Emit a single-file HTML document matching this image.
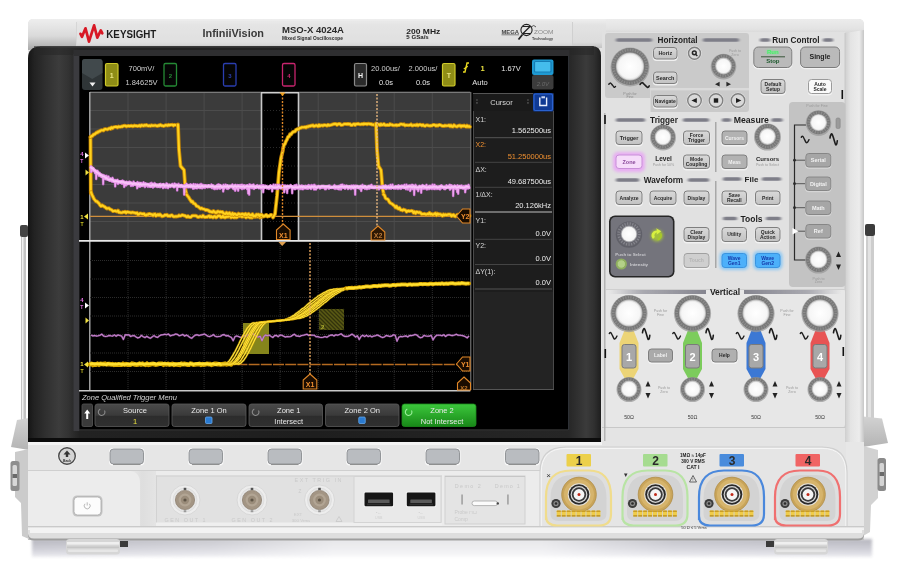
<!DOCTYPE html>
<html><head><meta charset="utf-8"><title>Keysight InfiniiVision MSO-X 4024A</title>
<style>
html,body{margin:0;padding:0;background:#fff;}
body{width:900px;height:574px;overflow:hidden;font-family:"Liberation Sans",sans-serif;}
svg{display:block;filter:blur(0.55px);}
svg text{font-family:"Liberation Sans",sans-serif;}
</style></head><body>
<svg width="900" height="574" viewBox="0 0 900 574">
<defs>
<linearGradient id="gBezelH" x1="0" x2="1" y1="0" y2="0">
 <stop offset="0" stop-color="#151515"/>
 <stop offset="0.0105" stop-color="#222222"/>
 <stop offset="0.03" stop-color="#2f2f2f"/>
 <stop offset="0.054" stop-color="#3c3c3c"/>
 <stop offset="0.07" stop-color="#333333"/>
 <stop offset="0.079" stop-color="#2b2b2b"/>
 <stop offset="0.09" stop-color="#222222"/>
 <stop offset="0.5" stop-color="#1e1e1e"/>
 <stop offset="0.943" stop-color="#262626"/>
 <stop offset="0.96" stop-color="#313131"/>
 <stop offset="0.974" stop-color="#3b3b3b"/>
 <stop offset="0.988" stop-color="#303030"/>
 <stop offset="1" stop-color="#1e1e1e"/>
</linearGradient>
<linearGradient id="gTop" x1="0" x2="0" y1="0" y2="1">
 <stop offset="0" stop-color="#efefef"/>
 <stop offset="0.2" stop-color="#e3e3e3"/>
 <stop offset="0.8" stop-color="#dcdcdc"/>
 <stop offset="1" stop-color="#c2c2c2"/>
</linearGradient>
<linearGradient id="gTopR" x1="0" x2="0" y1="0" y2="1">
 <stop offset="0" stop-color="#ececec"/>
 <stop offset="0.7" stop-color="#e3e3e3"/>
 <stop offset="1" stop-color="#d8d8d8"/>
</linearGradient>
<linearGradient id="gSideR" x1="0" x2="1" y1="0" y2="0">
 <stop offset="0" stop-color="#cfcfcf"/>
 <stop offset="0.3" stop-color="#e4e4e4"/>
 <stop offset="0.75" stop-color="#ececec"/>
 <stop offset="1" stop-color="#c6c6c6"/>
</linearGradient>
<linearGradient id="gBtn" x1="0" x2="0" y1="0" y2="1">
 <stop offset="0" stop-color="#d9d9d9"/>
 <stop offset="1" stop-color="#c2c2c2"/>
</linearGradient>
<linearGradient id="gSoft" x1="0" x2="0" y1="0" y2="1">
 <stop offset="0" stop-color="#4a4a4a"/>
 <stop offset="0.5" stop-color="#3a3a3a"/>
 <stop offset="0.55" stop-color="#2c2c2c"/>
 <stop offset="1" stop-color="#303030"/>
</linearGradient>
<linearGradient id="gSoftG" x1="0" x2="0" y1="0" y2="1">
 <stop offset="0" stop-color="#3cc83c"/>
 <stop offset="0.5" stop-color="#2aa82a"/>
 <stop offset="1" stop-color="#188818"/>
</linearGradient>
<radialGradient id="gKnob" cx="0.5" cy="0.5" r="0.5">
 <stop offset="0" stop-color="#ffffff"/>
 <stop offset="0.85" stop-color="#f6f6f6"/>
 <stop offset="1" stop-color="#e0e0e0"/>
</radialGradient>
<linearGradient id="gShadow" x1="0" x2="0" y1="0" y2="1">
 <stop offset="0" stop-color="#b4b4bc"/>
 <stop offset="0.6" stop-color="#d0d0d8"/>
 <stop offset="1" stop-color="#ececf0"/>
</linearGradient>
<linearGradient id="gBottomRail" x1="0" x2="0" y1="0" y2="1">
 <stop offset="0" stop-color="#d0d0d0"/>
 <stop offset="0.2" stop-color="#f4f4f4"/>
 <stop offset="0.7" stop-color="#ececec"/>
 <stop offset="1" stop-color="#bcbcbc"/>
</linearGradient>
<radialGradient id="gGold" cx="0.5" cy="0.5" r="0.5">
 <stop offset="0.55" stop-color="#c8a050"/>
 <stop offset="0.8" stop-color="#d8b468"/>
 <stop offset="1" stop-color="#c09848"/>
</radialGradient>
<filter id="blur1" x="-20%" y="-20%" width="140%" height="140%"><feGaussianBlur stdDeviation="0.6"/></filter>
<filter id="blur1b" x="-20%" y="-80%" width="140%" height="260%"><feGaussianBlur stdDeviation="1.6 0.7"/></filter>
<filter id="blur2" x="-30%" y="-30%" width="160%" height="160%"><feGaussianBlur stdDeviation="1.5"/></filter>
<filter id="blur3" x="-30%" y="-30%" width="160%" height="160%"><feGaussianBlur stdDeviation="3"/></filter>
</defs>
<linearGradient id="gBrk" x1="0" x2="0" y1="0" y2="1"><stop offset="0" stop-color="#d2d2d2"/><stop offset="1" stop-color="#b4b4b4"/></linearGradient>
<rect x="0" y="0" width="900" height="574" rx="0" fill="#ffffff" />
<linearGradient id="gShM" x1="0" x2="1"><stop offset="0" stop-color="#fff"/><stop offset="0.22" stop-color="#bbb"/><stop offset="0.36" stop-color="#555"/><stop offset="0.6" stop-color="#555"/><stop offset="0.75" stop-color="#ccc"/><stop offset="1" stop-color="#fff"/></linearGradient>
<mask id="mSh" maskUnits="userSpaceOnUse" x="20" y="530" width="870" height="44"><rect x="20" y="530" width="870" height="44" fill="url(#gShM)"/></mask>
<g mask="url(#mSh)">
<rect x="32" y="539" width="840" height="18" rx="0" fill="url(#gShadow)" filter="url(#blur2)"/>
</g>
<rect x="20" y="225" width="8" height="12" rx="2" fill="#444" />
<rect x="21" y="237" width="5" height="205" rx="0" fill="#c4c4c4" />
<rect x="22" y="237" width="1.5" height="205" rx="0" fill="#f0f0f0" />
<path d="M29 418 L17 420 L11 447 L29 450 Z" fill="url(#gBrk)" />
<path d="M29 449 L15 452 L15 497 L21 503 L22 536 L29 539 Z" fill="#cbcbcb" />
<rect x="10.5" y="461" width="9" height="30" rx="2.5" fill="#8e8e8e" />
<rect x="12.5" y="465" width="4.5" height="21" rx="1.5" fill="#d8d8d8" />
<rect x="12.5" y="474" width="4.5" height="4" rx="0" fill="#6a6a6a" />
<rect x="865" y="224" width="10" height="12" rx="2" fill="#3c3c3c" />
<rect x="866" y="236" width="8" height="206" rx="0" fill="#cdcdcd" />
<rect x="868" y="236" width="3" height="206" rx="0" fill="#e2e2e2" />
<path d="M863 416.5 L882 418.5 L888 443 L863 447 Z" fill="url(#gBrk)" />
<path d="M863 446 L878 450 L878 498 L871 505 L870 532 L863 536 Z" fill="#d2d2d2" />
<rect x="877.5" y="458" width="8.5" height="33" rx="2.5" fill="#8a8a8a" />
<rect x="879.5" y="463" width="4.5" height="23" rx="1.5" fill="#d4d4d4" />
<rect x="879.5" y="472" width="4.5" height="4" rx="0" fill="#6a6a6a" />
<rect x="28" y="19" width="836" height="521" rx="5" fill="#e4e4e4" />
<path d="M28 48 L28 25 Q28 19 34 19 L606 19 L606 48 Z" fill="url(#gTop)" />
<path d="M606 19 L858 19 Q864 19 864 25 L864 33 L606 33 Z" fill="url(#gTopR)" />
<rect x="602" y="32" width="243" height="410" rx="0" fill="#e1e1e1" />
<path d="M845 33 L864 30 L864 442 L845 442 Z" fill="url(#gSideR)" />
<line x1="845" y1="33" x2="845" y2="428" stroke="#c8c8c8" stroke-width="1" />
<linearGradient id="gTL" x1="0" x2="0" y1="0" y2="1"><stop offset="0" stop-color="#eeeeee"/><stop offset="0.55" stop-color="#dadada"/><stop offset="1" stop-color="#a8a8a8"/></linearGradient>
<path d="M28 50 L28 25 Q28 19 34 19 L76 19 L76 47 L28 50 Z" fill="url(#gTL)" />
<path d="M28 442 L28 58 Q28 47 40 46.5 L592 46 Q601 46 601 56 L601 442 Z" fill="url(#gBezelH)" />
<rect x="34" y="46" width="560" height="9" rx="0" fill="#262626" opacity="0.55"/>
<rect x="40" y="46" width="552" height="2" rx="0" fill="#3a3a3a" opacity="0.6"/>
<rect x="28" y="438" width="573" height="4" rx="0" fill="#0c0c0c" />
<rect x="73.5" y="54" width="6" height="377" rx="0" fill="#3b3b3f" />
<rect x="73.5" y="50" width="496" height="6" rx="0" fill="#2e2e30" />
<rect x="79.5" y="56" width="489" height="373.5" rx="0" fill="#000000" />
<line x1="568.7" y1="56" x2="568.7" y2="430" stroke="#34383e" stroke-width="1" />
<line x1="79" y1="430" x2="568" y2="430" stroke="#2c2c2c" stroke-width="1.4" />
<rect x="28" y="442" width="574" height="28" rx="0" fill="#e6e6e6" />
<rect x="28" y="442" width="574" height="3" rx="0" fill="#f4f4f4" />
<line x1="28" y1="470.5" x2="540" y2="470.5" stroke="#cfcfcf" stroke-width="1" />
<rect x="28" y="471" width="514" height="55" rx="0" fill="#ececec" />
<rect x="846" y="442" width="18" height="86" rx="0" fill="#e7e7e7" />
<rect x="28" y="526" width="836" height="14" rx="0" fill="url(#gBottomRail)" />
<line x1="28" y1="526.5" x2="864" y2="526.5" stroke="#cacaca" stroke-width="1" />
<path d="M28 534 L28 535 Q28 540.5 34 540.5 L858 540.5 Q864 540.5 864 535 L864 534 Z" fill="#9e9e9e" />
<path d="M28 530 L28 533 Q28 538.5 34 538.5 L858 538.5 Q864 538.5 864 533 L864 530 Z" fill="#dedede" />
<rect x="30" y="528" width="832" height="5" rx="0" fill="#f3f3f3" />
<path d="M76 21.5 L572 21.5 L572 45.5 L76 45.5 Z" fill="#e9e9e9" opacity="0.35"/>
<line x1="572.5" y1="22" x2="572.5" y2="45" stroke="#d0d0d0" stroke-width="1" />
<line x1="76.5" y1="22" x2="76.5" y2="45" stroke="#d6d6d6" stroke-width="1" />
<path d="M80.5 33.8 L82 36.8 L85.5 28.3 L89 41.6 L94.1 25.4 L97.3 37.6 L100.8 30.4 L102.3 33.4" fill="none" stroke="#d81824" stroke-width="2.7" stroke-linejoin="round" stroke-linecap="round"/>
<text x="106.3" y="37.6" font-size="11.6" fill="#1c1c1c" text-anchor="start" font-weight="bold" font-style="normal" textLength="50" lengthAdjust="spacingAndGlyphs">KEYSIGHT</text>
<text x="202.5" y="36.8" font-size="10" fill="#3a3a3a" text-anchor="start" font-weight="bold" font-style="normal" textLength="61.5" lengthAdjust="spacingAndGlyphs">InfiniiVision</text>
<text x="282" y="33" font-size="9.2" fill="#2a2a2a" text-anchor="start" font-weight="bold" font-style="normal" textLength="62" lengthAdjust="spacingAndGlyphs">MSO-X 4024A</text>
<text x="282" y="40.2" font-size="4.8" fill="#2a2a2a" text-anchor="start" font-weight="bold" font-style="normal" textLength="61" lengthAdjust="spacingAndGlyphs">Mixed Signal Oscilloscope</text>
<text x="406.3" y="33.6" font-size="8" fill="#222" text-anchor="start" font-weight="bold" font-style="normal" textLength="34" lengthAdjust="spacingAndGlyphs">200 MHz</text>
<text x="406.3" y="39.2" font-size="5" fill="#222" text-anchor="start" font-weight="bold" font-style="normal" textLength="22.5" lengthAdjust="spacingAndGlyphs">5 GSa/s</text>
<text x="501.5" y="33.5" font-size="5.6" fill="#444" text-anchor="start" font-weight="bold" font-style="normal" textLength="17.5" lengthAdjust="spacingAndGlyphs">MEGA</text>
<line x1="501.5" y1="34.8" x2="519" y2="34.8" stroke="#555" stroke-width="0.7" />
<circle cx="526.5" cy="30" r="5.6" fill="none" stroke="#222" stroke-width="1.1" />
<path d="M522.5 26.5 L530 26.5 L523 33.5 L530.5 33.5" fill="none" stroke="#222" stroke-width="1.2" />
<line x1="522.5" y1="34.5" x2="518.5" y2="39.5" stroke="#222" stroke-width="1.8" />
<path d="M531 27 q3 -3 5 0" fill="none" stroke="#333" stroke-width="0.8" />
<text x="534" y="33.5" font-size="5.6" fill="#8a8a8a" text-anchor="start" font-weight="normal" font-style="normal" textLength="19.5" lengthAdjust="spacingAndGlyphs">ZOOM</text>
<text x="532" y="39.8" font-size="3.8" fill="#444" text-anchor="start" font-weight="bold" font-style="normal" textLength="21" lengthAdjust="spacingAndGlyphs">Technology</text>
<rect x="66" y="539" width="54" height="15.5" rx="3.5" fill="#d6d6d6" />
<rect x="67" y="542" width="52" height="2.6" rx="0" fill="#efefef" />
<rect x="67" y="546.5" width="52" height="1.6" rx="0" fill="#c6c6c6" />
<rect x="68" y="549.5" width="50" height="2.4" rx="1" fill="#e6e6e6" />
<rect x="120" y="541" width="8" height="6" rx="0" fill="#3a3a3a" />
<rect x="774" y="539" width="54" height="15.5" rx="3.5" fill="#d6d6d6" />
<rect x="775" y="542" width="52" height="2.6" rx="0" fill="#efefef" />
<rect x="775" y="546.5" width="52" height="1.6" rx="0" fill="#c6c6c6" />
<rect x="776" y="549.5" width="50" height="2.4" rx="1" fill="#e6e6e6" />
<rect x="766" y="541" width="8" height="6" rx="0" fill="#3a3a3a" />
<rect x="90" y="92" width="380.3" height="148" rx="0" fill="#3b3b3b" />
<line x1="128.0" y1="92" x2="128.0" y2="240" stroke="#4c4c4c" stroke-width="1" />
<line x1="166.1" y1="92" x2="166.1" y2="240" stroke="#4c4c4c" stroke-width="1" />
<line x1="204.1" y1="92" x2="204.1" y2="240" stroke="#4c4c4c" stroke-width="1" />
<line x1="242.1" y1="92" x2="242.1" y2="240" stroke="#4c4c4c" stroke-width="1" />
<line x1="280.1" y1="92" x2="280.1" y2="240" stroke="#4c4c4c" stroke-width="1" />
<line x1="318.2" y1="92" x2="318.2" y2="240" stroke="#4c4c4c" stroke-width="1" />
<line x1="356.2" y1="92" x2="356.2" y2="240" stroke="#4c4c4c" stroke-width="1" />
<line x1="394.2" y1="92" x2="394.2" y2="240" stroke="#4c4c4c" stroke-width="1" />
<line x1="432.3" y1="92" x2="432.3" y2="240" stroke="#4c4c4c" stroke-width="1" />
<line x1="90" y1="92.0" x2="470.3" y2="92.0" stroke="#4c4c4c" stroke-width="1" />
<line x1="90" y1="110.5" x2="470.3" y2="110.5" stroke="#4c4c4c" stroke-width="1" />
<line x1="90" y1="129.0" x2="470.3" y2="129.0" stroke="#4c4c4c" stroke-width="1" />
<line x1="90" y1="147.5" x2="470.3" y2="147.5" stroke="#4c4c4c" stroke-width="1" />
<line x1="90" y1="166.0" x2="470.3" y2="166.0" stroke="#4c4c4c" stroke-width="1" />
<line x1="90" y1="184.5" x2="470.3" y2="184.5" stroke="#4c4c4c" stroke-width="1" />
<line x1="90" y1="203.0" x2="470.3" y2="203.0" stroke="#4c4c4c" stroke-width="1" />
<line x1="90" y1="221.5" x2="470.3" y2="221.5" stroke="#4c4c4c" stroke-width="1" />
<line x1="90" y1="240.0" x2="470.3" y2="240.0" stroke="#4c4c4c" stroke-width="1" />
<rect x="261" y="92" width="38" height="148" rx="0" fill="#000" />
<line x1="261" y1="110.5" x2="299" y2="110.5" stroke="#2a2a2a" stroke-width="1" stroke-dasharray="1 2"/>
<line x1="261" y1="129.0" x2="299" y2="129.0" stroke="#2a2a2a" stroke-width="1" stroke-dasharray="1 2"/>
<line x1="261" y1="147.5" x2="299" y2="147.5" stroke="#2a2a2a" stroke-width="1" stroke-dasharray="1 2"/>
<line x1="261" y1="166.0" x2="299" y2="166.0" stroke="#2a2a2a" stroke-width="1" stroke-dasharray="1 2"/>
<line x1="261" y1="184.5" x2="299" y2="184.5" stroke="#2a2a2a" stroke-width="1" stroke-dasharray="1 2"/>
<line x1="261" y1="203.0" x2="299" y2="203.0" stroke="#2a2a2a" stroke-width="1" stroke-dasharray="1 2"/>
<line x1="261" y1="221.5" x2="299" y2="221.5" stroke="#2a2a2a" stroke-width="1" stroke-dasharray="1 2"/>
<line x1="261.5" y1="92" x2="261.5" y2="240" stroke="#c8c8c8" stroke-width="1.6" />
<line x1="298.5" y1="92" x2="298.5" y2="240" stroke="#c8c8c8" stroke-width="1.6" />
<line x1="90" y1="92.5" x2="470.3" y2="92.5" stroke="#7a7a7a" stroke-width="1" />
<line x1="261" y1="92.7" x2="299" y2="92.7" stroke="#d0d0d0" stroke-width="1.4" />
<line x1="89.8" y1="92" x2="89.8" y2="390" stroke="#b8b8b8" stroke-width="1.3" />
<line x1="79" y1="240.8" x2="470.3" y2="240.8" stroke="#e8e8e8" stroke-width="1.8" />
<line x1="128.0" y1="242" x2="128.0" y2="390" stroke="#2c2c2c" stroke-width="1" stroke-dasharray="1 1"/>
<line x1="166.1" y1="242" x2="166.1" y2="390" stroke="#2c2c2c" stroke-width="1" stroke-dasharray="1 1"/>
<line x1="204.1" y1="242" x2="204.1" y2="390" stroke="#2c2c2c" stroke-width="1" stroke-dasharray="1 1"/>
<line x1="242.1" y1="242" x2="242.1" y2="390" stroke="#2c2c2c" stroke-width="1" stroke-dasharray="1 1"/>
<line x1="280.1" y1="242" x2="280.1" y2="390" stroke="#2c2c2c" stroke-width="1" stroke-dasharray="1 1"/>
<line x1="318.2" y1="242" x2="318.2" y2="390" stroke="#2c2c2c" stroke-width="1" stroke-dasharray="1 1"/>
<line x1="356.2" y1="242" x2="356.2" y2="390" stroke="#2c2c2c" stroke-width="1" stroke-dasharray="1 1"/>
<line x1="394.2" y1="242" x2="394.2" y2="390" stroke="#2c2c2c" stroke-width="1" stroke-dasharray="1 1"/>
<line x1="432.3" y1="242" x2="432.3" y2="390" stroke="#2c2c2c" stroke-width="1" stroke-dasharray="1 1"/>
<line x1="90" y1="260.5" x2="470.3" y2="260.5" stroke="#2c2c2c" stroke-width="1" stroke-dasharray="1 1"/>
<line x1="90" y1="279.0" x2="470.3" y2="279.0" stroke="#2c2c2c" stroke-width="1" stroke-dasharray="1 1"/>
<line x1="90" y1="297.5" x2="470.3" y2="297.5" stroke="#2c2c2c" stroke-width="1" stroke-dasharray="1 1"/>
<line x1="90" y1="316.0" x2="470.3" y2="316.0" stroke="#2c2c2c" stroke-width="1" stroke-dasharray="1 1"/>
<line x1="90" y1="334.5" x2="470.3" y2="334.5" stroke="#2c2c2c" stroke-width="1" stroke-dasharray="1 1"/>
<line x1="90" y1="353.0" x2="470.3" y2="353.0" stroke="#2c2c2c" stroke-width="1" stroke-dasharray="1 1"/>
<line x1="90" y1="371.5" x2="470.3" y2="371.5" stroke="#2c2c2c" stroke-width="1" stroke-dasharray="1 1"/>
<line x1="79" y1="390.8" x2="470.3" y2="390.8" stroke="#c8c8c8" stroke-width="1.4" />
<line x1="470.8" y1="92" x2="470.8" y2="390" stroke="#888" stroke-width="1" />
<line x1="90" y1="216.3" x2="460" y2="216.3" stroke="#cf8e3c" stroke-width="1.3" />
<path d="M90.5 137.0 L90.8 193.0" fill="none" stroke="#d08c00" stroke-width="3.8" stroke-linejoin="round" stroke-linecap="round" opacity="0.9"/>
<path d="M90.5 137.0 L90.8 193.0" fill="none" stroke="#ffd21e" stroke-width="2.1" stroke-linejoin="round" stroke-linecap="round"/>
<path d="M90.5 137.1 L91.5 136.0 L92.5 136.0 L93.5 134.4 L94.5 134.4 L95.5 133.6 L96.5 132.5 L97.5 132.6 L98.5 131.5 L99.5 131.5 L100.5 130.6 L101.5 130.2 L102.5 130.3 L103.5 130.5 L104.5 129.2 L105.5 129.0 L106.5 129.3 L107.5 129.5 L108.5 128.7 L109.5 128.3 L110.5 128.9 L111.5 127.4 L112.5 128.3 L113.5 127.3 L114.5 127.0 L115.5 126.8 L116.5 126.9 L117.5 127.5 L118.5 126.5 L119.5 126.9 L120.5 126.9 L121.5 126.4 L122.5 126.6 L123.5 125.8 L124.5 125.7 L125.5 125.9 L126.5 126.5 L127.5 126.1 L128.5 125.8 L129.5 126.2 L130.5 125.9 L131.5 125.7 L132.5 126.3 L133.5 126.1 L134.5 125.5 L135.5 125.9 L136.5 125.8 L137.5 126.2 L138.5 126.0 L139.5 125.4 L140.5 126.3 L141.5 125.1 L142.5 125.5 L143.5 125.9 L144.5 125.1 L145.5 125.5 L146.5 124.9 L147.5 125.7 L148.5 125.9 L149.5 125.6 L150.5 126.0 L151.5 125.2 L152.5 125.7 L153.5 125.6 L154.5 125.5 L155.5 125.4 L156.5 125.9 L157.5 126.0 L158.5 125.4 L159.5 125.6 L160.5 124.8 L161.5 125.7 L162.5 125.6 L163.5 126.1 L164.5 125.8 L165.5 125.1 L166.5 125.2 L167.5 125.6 L168.5 124.7 L169.5 125.3 L170.5 124.9 L171.5 124.8 L172.5 124.7 L173.5 125.7 L174.5 124.8 L175.5 125.0 L176.5 125.2 L177.5 125.8" fill="none" stroke="#d08c00" stroke-width="3.8" stroke-linejoin="round" stroke-linecap="round" opacity="0.9"/>
<path d="M90.5 137.1 L91.5 136.0 L92.5 136.0 L93.5 134.4 L94.5 134.4 L95.5 133.6 L96.5 132.5 L97.5 132.6 L98.5 131.5 L99.5 131.5 L100.5 130.6 L101.5 130.2 L102.5 130.3 L103.5 130.5 L104.5 129.2 L105.5 129.0 L106.5 129.3 L107.5 129.5 L108.5 128.7 L109.5 128.3 L110.5 128.9 L111.5 127.4 L112.5 128.3 L113.5 127.3 L114.5 127.0 L115.5 126.8 L116.5 126.9 L117.5 127.5 L118.5 126.5 L119.5 126.9 L120.5 126.9 L121.5 126.4 L122.5 126.6 L123.5 125.8 L124.5 125.7 L125.5 125.9 L126.5 126.5 L127.5 126.1 L128.5 125.8 L129.5 126.2 L130.5 125.9 L131.5 125.7 L132.5 126.3 L133.5 126.1 L134.5 125.5 L135.5 125.9 L136.5 125.8 L137.5 126.2 L138.5 126.0 L139.5 125.4 L140.5 126.3 L141.5 125.1 L142.5 125.5 L143.5 125.9 L144.5 125.1 L145.5 125.5 L146.5 124.9 L147.5 125.7 L148.5 125.9 L149.5 125.6 L150.5 126.0 L151.5 125.2 L152.5 125.7 L153.5 125.6 L154.5 125.5 L155.5 125.4 L156.5 125.9 L157.5 126.0 L158.5 125.4 L159.5 125.6 L160.5 124.8 L161.5 125.7 L162.5 125.6 L163.5 126.1 L164.5 125.8 L165.5 125.1 L166.5 125.2 L167.5 125.6 L168.5 124.7 L169.5 125.3 L170.5 124.9 L171.5 124.8 L172.5 124.7 L173.5 125.7 L174.5 124.8 L175.5 125.0 L176.5 125.2 L177.5 125.8" fill="none" stroke="#ffd21e" stroke-width="2.1" stroke-linejoin="round" stroke-linecap="round"/>
<path d="M178.0 124.5 L179.0 150.0 L180.5 166.0 L184.0 170.0 L185.5 190.0 L186.5 194.0" fill="none" stroke="#d08c00" stroke-width="3.8" stroke-linejoin="round" stroke-linecap="round" opacity="0.9"/>
<path d="M178.0 124.5 L179.0 150.0 L180.5 166.0 L184.0 170.0 L185.5 190.0 L186.5 194.0" fill="none" stroke="#ffd21e" stroke-width="2.1" stroke-linejoin="round" stroke-linecap="round"/>
<path d="M91.0 192.2 L92.0 194.8 L93.0 196.7 L94.0 198.9 L95.0 200.1 L96.0 201.4 L97.0 201.3 L98.0 202.6 L99.0 203.4 L100.0 205.2 L101.0 206.1 L102.0 205.2 L103.0 205.8 L104.0 206.5 L105.0 207.0 L106.0 208.0 L107.0 208.6 L108.0 208.3 L109.0 208.2 L110.0 209.3 L111.0 209.5 L112.0 210.2 L113.0 211.2 L114.0 211.0 L115.0 210.8 L116.0 211.3 L117.0 211.6 L118.0 210.5 L119.0 212.4 L120.0 212.3 L121.0 212.7 L122.0 212.7 L123.0 212.0 L124.0 212.2 L125.0 211.7 L126.0 212.9 L127.0 211.9 L128.0 212.0 L129.0 212.4 L130.0 212.4 L131.0 212.9 L132.0 212.4 L133.0 212.4 L134.0 212.8 L135.0 212.8 L136.0 213.4 L137.0 212.8 L138.0 214.6 L139.0 214.2 L140.0 213.3 L141.0 213.6 L142.0 213.9 L143.0 214.0 L144.0 213.6 L145.0 215.1 L146.0 215.4 L147.0 214.5 L148.0 214.6 L149.0 213.8 L150.0 213.9 L151.0 214.4 L152.0 214.3 L153.0 215.5 L154.0 214.2 L155.0 214.0 L156.0 215.9 L157.0 215.1 L158.0 214.4 L159.0 215.3 L160.0 214.3 L161.0 215.3 L162.0 216.3 L163.0 216.1 L164.0 215.8 L165.0 214.9 L166.0 215.2 L167.0 214.8 L168.0 216.1 L169.0 215.6 L170.0 216.2 L171.0 215.3 L172.0 215.1 L173.0 216.3 L174.0 216.7 L175.0 216.5 L176.0 216.4 L177.0 216.5 L178.0 216.3 L179.0 215.3 L180.0 216.0 L181.0 215.7 L182.0 215.0 L183.0 215.1 L184.0 215.6 L185.0 215.6 L186.0 216.5 L187.0 217.0 L188.0 216.0 L189.0 217.0 L190.0 217.1 L191.0 217.1 L192.0 215.9 L193.0 215.7 L194.0 215.7 L195.0 215.7 L196.0 215.7 L197.0 216.5 L198.0 217.1 L199.0 217.0 L200.0 216.3 L201.0 216.7 L202.0 217.0 L203.0 215.6 L204.0 216.7 L205.0 217.2 L206.0 217.0 L207.0 217.0 L208.0 216.4 L209.0 215.8 L210.0 217.1 L211.0 216.2 L212.0 217.1 L213.0 217.5 L214.0 216.3 L215.0 216.4 L216.0 217.5 L217.0 217.0 L218.0 215.9 L219.0 215.8 L220.0 215.9 L221.0 217.4 L222.0 217.2 L223.0 215.9 L224.0 217.3 L225.0 217.6 L226.0 217.0 L227.0 216.4 L228.0 216.8 L229.0 215.9 L230.0 215.7 L231.0 217.6 L232.0 217.0 L233.0 216.8 L234.0 217.6 L235.0 216.6 L236.0 217.5 L237.0 217.4 L238.0 216.2 L239.0 216.3 L240.0 216.3 L241.0 216.2 L242.0 216.9 L243.0 216.3 L244.0 216.6 L245.0 216.0 L246.0 217.6 L247.0 216.5 L248.0 216.7 L249.0 217.0 L250.0 217.6 L251.0 216.7 L252.0 217.7 L253.0 216.8 L254.0 216.9 L255.0 216.9 L256.0 215.9 L257.0 216.7 L258.0 216.2 L259.0 215.9 L260.0 217.5 L261.0 216.2 L262.0 216.8" fill="none" stroke="#d08c00" stroke-width="3.8" stroke-linejoin="round" stroke-linecap="round" opacity="0.9"/>
<path d="M91.0 192.2 L92.0 194.8 L93.0 196.7 L94.0 198.9 L95.0 200.1 L96.0 201.4 L97.0 201.3 L98.0 202.6 L99.0 203.4 L100.0 205.2 L101.0 206.1 L102.0 205.2 L103.0 205.8 L104.0 206.5 L105.0 207.0 L106.0 208.0 L107.0 208.6 L108.0 208.3 L109.0 208.2 L110.0 209.3 L111.0 209.5 L112.0 210.2 L113.0 211.2 L114.0 211.0 L115.0 210.8 L116.0 211.3 L117.0 211.6 L118.0 210.5 L119.0 212.4 L120.0 212.3 L121.0 212.7 L122.0 212.7 L123.0 212.0 L124.0 212.2 L125.0 211.7 L126.0 212.9 L127.0 211.9 L128.0 212.0 L129.0 212.4 L130.0 212.4 L131.0 212.9 L132.0 212.4 L133.0 212.4 L134.0 212.8 L135.0 212.8 L136.0 213.4 L137.0 212.8 L138.0 214.6 L139.0 214.2 L140.0 213.3 L141.0 213.6 L142.0 213.9 L143.0 214.0 L144.0 213.6 L145.0 215.1 L146.0 215.4 L147.0 214.5 L148.0 214.6 L149.0 213.8 L150.0 213.9 L151.0 214.4 L152.0 214.3 L153.0 215.5 L154.0 214.2 L155.0 214.0 L156.0 215.9 L157.0 215.1 L158.0 214.4 L159.0 215.3 L160.0 214.3 L161.0 215.3 L162.0 216.3 L163.0 216.1 L164.0 215.8 L165.0 214.9 L166.0 215.2 L167.0 214.8 L168.0 216.1 L169.0 215.6 L170.0 216.2 L171.0 215.3 L172.0 215.1 L173.0 216.3 L174.0 216.7 L175.0 216.5 L176.0 216.4 L177.0 216.5 L178.0 216.3 L179.0 215.3 L180.0 216.0 L181.0 215.7 L182.0 215.0 L183.0 215.1 L184.0 215.6 L185.0 215.6 L186.0 216.5 L187.0 217.0 L188.0 216.0 L189.0 217.0 L190.0 217.1 L191.0 217.1 L192.0 215.9 L193.0 215.7 L194.0 215.7 L195.0 215.7 L196.0 215.7 L197.0 216.5 L198.0 217.1 L199.0 217.0 L200.0 216.3 L201.0 216.7 L202.0 217.0 L203.0 215.6 L204.0 216.7 L205.0 217.2 L206.0 217.0 L207.0 217.0 L208.0 216.4 L209.0 215.8 L210.0 217.1 L211.0 216.2 L212.0 217.1 L213.0 217.5 L214.0 216.3 L215.0 216.4 L216.0 217.5 L217.0 217.0 L218.0 215.9 L219.0 215.8 L220.0 215.9 L221.0 217.4 L222.0 217.2 L223.0 215.9 L224.0 217.3 L225.0 217.6 L226.0 217.0 L227.0 216.4 L228.0 216.8 L229.0 215.9 L230.0 215.7 L231.0 217.6 L232.0 217.0 L233.0 216.8 L234.0 217.6 L235.0 216.6 L236.0 217.5 L237.0 217.4 L238.0 216.2 L239.0 216.3 L240.0 216.3 L241.0 216.2 L242.0 216.9 L243.0 216.3 L244.0 216.6 L245.0 216.0 L246.0 217.6 L247.0 216.5 L248.0 216.7 L249.0 217.0 L250.0 217.6 L251.0 216.7 L252.0 217.7 L253.0 216.8 L254.0 216.9 L255.0 216.9 L256.0 215.9 L257.0 216.7 L258.0 216.2 L259.0 215.9 L260.0 217.5 L261.0 216.2 L262.0 216.8" fill="none" stroke="#ffd21e" stroke-width="2.1" stroke-linejoin="round" stroke-linecap="round"/>
<path d="M186.5 194.5 L187.5 195.9 L188.5 197.0 L189.5 198.8 L190.5 200.2 L191.5 201.9 L192.5 201.4 L193.5 203.4 L194.5 203.5 L195.5 204.4 L196.5 206.1 L197.5 206.2 L198.5 206.9 L199.5 207.8 L200.5 208.7 L201.5 208.1 L202.5 208.8 L203.5 209.0 L204.5 209.3 L205.5 210.1 L206.5 209.8 L207.5 210.3 L208.5 210.4 L209.5 211.7 L210.5 211.4 L211.5 212.0 L212.5 212.3 L213.5 211.0 L214.5 211.8 L215.5 212.8 L216.5 212.8 L217.5 211.4 L218.5 211.5 L219.5 212.3 L220.5 211.7 L221.5 212.1 L222.5 211.9 L223.5 213.3 L224.5 213.7 L225.5 214.0 L226.5 212.5 L227.5 213.9 L228.5 213.8 L229.5 212.8 L230.5 214.5 L231.5 214.8 L232.5 213.2 L233.5 214.9 L234.5 213.8 L235.5 214.0 L236.5 215.2 L237.5 214.9 L238.5 213.5 L239.5 214.2 L240.5 214.5 L241.5 214.1 L242.5 213.9 L243.5 214.2 L244.5 215.2 L245.5 213.7 L246.5 214.9 L247.5 214.7 L248.5 213.8 L249.5 214.6 L250.5 215.3 L251.5 215.1 L252.5 214.1 L253.5 216.2 L254.5 215.8 L255.5 216.3 L256.5 214.4 L257.5 214.8 L258.5 214.4 L259.5 216.0 L260.5 214.9 L261.5 214.7 L262.5 215.4 L263.5 216.5 L264.5 216.3 L265.5 215.1 L266.5 214.9 L267.5 216.6 L268.5 215.9 L269.5 216.2 L270.5 214.9 L271.5 214.8 L272.5 216.3" fill="none" stroke="#d08c00" stroke-width="3.8" stroke-linejoin="round" stroke-linecap="round" opacity="0.9"/>
<path d="M186.5 194.5 L187.5 195.9 L188.5 197.0 L189.5 198.8 L190.5 200.2 L191.5 201.9 L192.5 201.4 L193.5 203.4 L194.5 203.5 L195.5 204.4 L196.5 206.1 L197.5 206.2 L198.5 206.9 L199.5 207.8 L200.5 208.7 L201.5 208.1 L202.5 208.8 L203.5 209.0 L204.5 209.3 L205.5 210.1 L206.5 209.8 L207.5 210.3 L208.5 210.4 L209.5 211.7 L210.5 211.4 L211.5 212.0 L212.5 212.3 L213.5 211.0 L214.5 211.8 L215.5 212.8 L216.5 212.8 L217.5 211.4 L218.5 211.5 L219.5 212.3 L220.5 211.7 L221.5 212.1 L222.5 211.9 L223.5 213.3 L224.5 213.7 L225.5 214.0 L226.5 212.5 L227.5 213.9 L228.5 213.8 L229.5 212.8 L230.5 214.5 L231.5 214.8 L232.5 213.2 L233.5 214.9 L234.5 213.8 L235.5 214.0 L236.5 215.2 L237.5 214.9 L238.5 213.5 L239.5 214.2 L240.5 214.5 L241.5 214.1 L242.5 213.9 L243.5 214.2 L244.5 215.2 L245.5 213.7 L246.5 214.9 L247.5 214.7 L248.5 213.8 L249.5 214.6 L250.5 215.3 L251.5 215.1 L252.5 214.1 L253.5 216.2 L254.5 215.8 L255.5 216.3 L256.5 214.4 L257.5 214.8 L258.5 214.4 L259.5 216.0 L260.5 214.9 L261.5 214.7 L262.5 215.4 L263.5 216.5 L264.5 216.3 L265.5 215.1 L266.5 214.9 L267.5 216.6 L268.5 215.9 L269.5 216.2 L270.5 214.9 L271.5 214.8 L272.5 216.3" fill="none" stroke="#ffd21e" stroke-width="2.1" stroke-linejoin="round" stroke-linecap="round"/>
<path d="M273.0 217.5 L275.0 214.0 L277.0 196.0 L279.0 172.0 L281.0 158.0 L283.0 150.0" fill="none" stroke="#d08c00" stroke-width="3.8" stroke-linejoin="round" stroke-linecap="round" opacity="0.9"/>
<path d="M273.0 217.5 L275.0 214.0 L277.0 196.0 L279.0 172.0 L281.0 158.0 L283.0 150.0" fill="none" stroke="#ffd21e" stroke-width="2.1" stroke-linejoin="round" stroke-linecap="round"/>
<path d="M283.0 148.5 L284.0 145.0 L285.0 143.9 L286.0 141.2 L287.0 139.6 L288.0 136.9 L289.0 136.7 L290.0 134.2 L291.0 134.5 L292.0 132.9 L293.0 131.9 L294.0 131.6 L295.0 131.5 L296.0 129.9 L297.0 129.2 L298.0 129.4 L299.0 128.6 L300.0 128.0 L301.0 127.8 L302.0 127.3 L303.0 127.3 L304.0 127.3 L305.0 127.0 L306.0 127.6 L307.0 126.6 L308.0 126.8 L309.0 126.1 L310.0 126.3 L311.0 125.6 L312.0 125.8 L313.0 125.3 L314.0 126.4 L315.0 126.0 L316.0 125.3 L317.0 125.7 L318.0 126.3 L319.0 124.9 L320.0 126.0 L321.0 125.3 L322.0 125.3 L323.0 125.8 L324.0 125.0 L325.0 125.1 L326.0 125.3 L327.0 125.8 L328.0 124.7 L329.0 125.4 L330.0 125.2 L331.0 125.0 L332.0 124.6 L333.0 124.4 L334.0 123.9 L335.0 124.0 L336.0 123.9 L337.0 124.9 L338.0 124.1 L339.0 123.9 L340.0 123.8 L341.0 125.0 L342.0 125.0 L343.0 124.7 L344.0 124.0 L345.0 124.0 L346.0 124.0 L347.0 124.3 L348.0 123.8 L349.0 124.3 L350.0 124.0 L351.0 125.1 L352.0 125.1 L353.0 124.4 L354.0 123.9 L355.0 125.1 L356.0 124.0 L357.0 124.1 L358.0 123.6 L359.0 124.2 L360.0 124.3 L361.0 124.4 L362.0 123.9 L363.0 124.4 L364.0 123.6 L365.0 124.0 L366.0 123.8 L367.0 124.3 L368.0 123.7 L369.0 123.7 L370.0 124.1 L371.0 124.0 L372.0 124.6 L373.0 124.5 L374.0 124.9 L375.0 124.8 L376.0 124.9 L377.0 125.1 L378.0 124.4 L379.0 124.3 L380.0 125.3 L381.0 124.0 L382.0 125.0 L383.0 124.8 L384.0 123.9 L385.0 125.2 L386.0 125.3 L387.0 124.9 L388.0 125.1 L389.0 125.2 L390.0 124.1 L391.0 124.8 L392.0 124.7 L393.0 125.3 L394.0 125.3 L395.0 125.3 L396.0 124.9 L397.0 125.5 L398.0 125.1 L399.0 125.2 L400.0 124.4 L401.0 124.1 L402.0 124.3 L403.0 124.7 L404.0 124.3 L405.0 125.5 L406.0 125.1 L407.0 125.2 L408.0 125.2 L409.0 125.3 L410.0 125.0 L411.0 124.3 L412.0 125.6 L413.0 125.5 L414.0 125.1 L415.0 125.2 L416.0 125.4 L417.0 124.5 L418.0 125.6 L419.0 124.8 L420.0 124.6 L421.0 124.9 L422.0 125.6 L423.0 124.8 L424.0 125.7 L425.0 126.1 L426.0 125.3 L427.0 125.2 L428.0 125.4 L429.0 125.7 L430.0 125.8 L431.0 125.6 L432.0 125.7 L433.0 124.8 L434.0 124.9 L435.0 125.1 L436.0 125.9 L437.0 125.2 L438.0 125.7 L439.0 124.8 L440.0 124.9 L441.0 125.3 L442.0 125.9 L443.0 126.0 L444.0 126.0 L445.0 125.4 L446.0 125.8 L447.0 125.7 L448.0 125.7 L449.0 125.2 L450.0 126.4 L451.0 125.3 L452.0 126.6 L453.0 126.6 L454.0 125.1 L455.0 125.8 L456.0 126.4 L457.0 126.7 L458.0 125.9 L459.0 125.6 L460.0 125.5 L461.0 126.7 L462.0 125.6 L463.0 126.2 L464.0 125.5 L465.0 126.1 L466.0 126.8 L467.0 125.6 L468.0 126.7 L469.0 126.2 L470.0 126.8" fill="none" stroke="#d08c00" stroke-width="3.8" stroke-linejoin="round" stroke-linecap="round" opacity="0.9"/>
<path d="M283.0 148.5 L284.0 145.0 L285.0 143.9 L286.0 141.2 L287.0 139.6 L288.0 136.9 L289.0 136.7 L290.0 134.2 L291.0 134.5 L292.0 132.9 L293.0 131.9 L294.0 131.6 L295.0 131.5 L296.0 129.9 L297.0 129.2 L298.0 129.4 L299.0 128.6 L300.0 128.0 L301.0 127.8 L302.0 127.3 L303.0 127.3 L304.0 127.3 L305.0 127.0 L306.0 127.6 L307.0 126.6 L308.0 126.8 L309.0 126.1 L310.0 126.3 L311.0 125.6 L312.0 125.8 L313.0 125.3 L314.0 126.4 L315.0 126.0 L316.0 125.3 L317.0 125.7 L318.0 126.3 L319.0 124.9 L320.0 126.0 L321.0 125.3 L322.0 125.3 L323.0 125.8 L324.0 125.0 L325.0 125.1 L326.0 125.3 L327.0 125.8 L328.0 124.7 L329.0 125.4 L330.0 125.2 L331.0 125.0 L332.0 124.6 L333.0 124.4 L334.0 123.9 L335.0 124.0 L336.0 123.9 L337.0 124.9 L338.0 124.1 L339.0 123.9 L340.0 123.8 L341.0 125.0 L342.0 125.0 L343.0 124.7 L344.0 124.0 L345.0 124.0 L346.0 124.0 L347.0 124.3 L348.0 123.8 L349.0 124.3 L350.0 124.0 L351.0 125.1 L352.0 125.1 L353.0 124.4 L354.0 123.9 L355.0 125.1 L356.0 124.0 L357.0 124.1 L358.0 123.6 L359.0 124.2 L360.0 124.3 L361.0 124.4 L362.0 123.9 L363.0 124.4 L364.0 123.6 L365.0 124.0 L366.0 123.8 L367.0 124.3 L368.0 123.7 L369.0 123.7 L370.0 124.1 L371.0 124.0 L372.0 124.6 L373.0 124.5 L374.0 124.9 L375.0 124.8 L376.0 124.9 L377.0 125.1 L378.0 124.4 L379.0 124.3 L380.0 125.3 L381.0 124.0 L382.0 125.0 L383.0 124.8 L384.0 123.9 L385.0 125.2 L386.0 125.3 L387.0 124.9 L388.0 125.1 L389.0 125.2 L390.0 124.1 L391.0 124.8 L392.0 124.7 L393.0 125.3 L394.0 125.3 L395.0 125.3 L396.0 124.9 L397.0 125.5 L398.0 125.1 L399.0 125.2 L400.0 124.4 L401.0 124.1 L402.0 124.3 L403.0 124.7 L404.0 124.3 L405.0 125.5 L406.0 125.1 L407.0 125.2 L408.0 125.2 L409.0 125.3 L410.0 125.0 L411.0 124.3 L412.0 125.6 L413.0 125.5 L414.0 125.1 L415.0 125.2 L416.0 125.4 L417.0 124.5 L418.0 125.6 L419.0 124.8 L420.0 124.6 L421.0 124.9 L422.0 125.6 L423.0 124.8 L424.0 125.7 L425.0 126.1 L426.0 125.3 L427.0 125.2 L428.0 125.4 L429.0 125.7 L430.0 125.8 L431.0 125.6 L432.0 125.7 L433.0 124.8 L434.0 124.9 L435.0 125.1 L436.0 125.9 L437.0 125.2 L438.0 125.7 L439.0 124.8 L440.0 124.9 L441.0 125.3 L442.0 125.9 L443.0 126.0 L444.0 126.0 L445.0 125.4 L446.0 125.8 L447.0 125.7 L448.0 125.7 L449.0 125.2 L450.0 126.4 L451.0 125.3 L452.0 126.6 L453.0 126.6 L454.0 125.1 L455.0 125.8 L456.0 126.4 L457.0 126.7 L458.0 125.9 L459.0 125.6 L460.0 125.5 L461.0 126.7 L462.0 125.6 L463.0 126.2 L464.0 125.5 L465.0 126.1 L466.0 126.8 L467.0 125.6 L468.0 126.7 L469.0 126.2 L470.0 126.8" fill="none" stroke="#ffd21e" stroke-width="2.1" stroke-linejoin="round" stroke-linecap="round"/>
<path d="M376.0 123.5 L377.0 150.0 L378.5 166.0 L381.0 170.0 L382.5 188.0 L383.5 193.0" fill="none" stroke="#d08c00" stroke-width="3.8" stroke-linejoin="round" stroke-linecap="round" opacity="0.9"/>
<path d="M376.0 123.5 L377.0 150.0 L378.5 166.0 L381.0 170.0 L382.5 188.0 L383.5 193.0" fill="none" stroke="#ffd21e" stroke-width="2.1" stroke-linejoin="round" stroke-linecap="round"/>
<path d="M383.5 194.4 L384.5 195.2 L385.5 198.2 L386.5 198.8 L387.5 199.0 L388.5 200.2 L389.5 202.3 L390.5 203.1 L391.5 203.6 L392.5 204.1 L393.5 205.2 L394.5 205.8 L395.5 207.5 L396.5 206.2 L397.5 208.3 L398.5 208.9 L399.5 207.8 L400.5 209.9 L401.5 209.8 L402.5 210.5 L403.5 209.5 L404.5 209.9 L405.5 210.2 L406.5 211.8 L407.5 211.1 L408.5 210.8 L409.5 211.2 L410.5 211.0 L411.5 210.7 L412.5 211.0 L413.5 212.8 L414.5 211.7 L415.5 213.3 L416.5 211.9 L417.5 212.1 L418.5 212.7 L419.5 212.2 L420.5 212.7 L421.5 214.1 L422.5 214.0 L423.5 214.0 L424.5 213.7 L425.5 214.4 L426.5 214.5 L427.5 213.8 L428.5 214.2 L429.5 212.8 L430.5 214.4 L431.5 213.9 L432.5 214.6 L433.5 214.5 L434.5 213.7 L435.5 213.3 L436.5 215.3 L437.5 213.6 L438.5 214.4 L439.5 214.2 L440.5 214.2 L441.5 215.2 L442.5 215.8 L443.5 214.3 L444.5 215.2 L445.5 214.5 L446.5 215.1 L447.5 214.8 L448.5 214.3 L449.5 214.4 L450.5 214.5 L451.5 216.1 L452.5 215.2 L453.5 214.7 L454.5 216.2 L455.5 216.5 L456.5 215.3 L457.5 214.7 L458.5 214.8 L459.5 214.6 L460.5 215.2 L461.5 214.7 L462.5 215.1 L463.5 215.1 L464.5 215.8 L465.5 216.6 L466.5 216.3 L467.5 215.6 L468.5 215.6 L469.5 215.9" fill="none" stroke="#d08c00" stroke-width="3.8" stroke-linejoin="round" stroke-linecap="round" opacity="0.9"/>
<path d="M383.5 194.4 L384.5 195.2 L385.5 198.2 L386.5 198.8 L387.5 199.0 L388.5 200.2 L389.5 202.3 L390.5 203.1 L391.5 203.6 L392.5 204.1 L393.5 205.2 L394.5 205.8 L395.5 207.5 L396.5 206.2 L397.5 208.3 L398.5 208.9 L399.5 207.8 L400.5 209.9 L401.5 209.8 L402.5 210.5 L403.5 209.5 L404.5 209.9 L405.5 210.2 L406.5 211.8 L407.5 211.1 L408.5 210.8 L409.5 211.2 L410.5 211.0 L411.5 210.7 L412.5 211.0 L413.5 212.8 L414.5 211.7 L415.5 213.3 L416.5 211.9 L417.5 212.1 L418.5 212.7 L419.5 212.2 L420.5 212.7 L421.5 214.1 L422.5 214.0 L423.5 214.0 L424.5 213.7 L425.5 214.4 L426.5 214.5 L427.5 213.8 L428.5 214.2 L429.5 212.8 L430.5 214.4 L431.5 213.9 L432.5 214.6 L433.5 214.5 L434.5 213.7 L435.5 213.3 L436.5 215.3 L437.5 213.6 L438.5 214.4 L439.5 214.2 L440.5 214.2 L441.5 215.2 L442.5 215.8 L443.5 214.3 L444.5 215.2 L445.5 214.5 L446.5 215.1 L447.5 214.8 L448.5 214.3 L449.5 214.4 L450.5 214.5 L451.5 216.1 L452.5 215.2 L453.5 214.7 L454.5 216.2 L455.5 216.5 L456.5 215.3 L457.5 214.7 L458.5 214.8 L459.5 214.6 L460.5 215.2 L461.5 214.7 L462.5 215.1 L463.5 215.1 L464.5 215.8 L465.5 216.6 L466.5 216.3 L467.5 215.6 L468.5 215.6 L469.5 215.9" fill="none" stroke="#ffd21e" stroke-width="2.1" stroke-linejoin="round" stroke-linecap="round"/>
<path d="M90.5 165.5 L91.0 167.1 L91.2 172.0 L91.5 168.8 L92.0 167.6 L92.5 168.6 L93.0 170.9 L93.5 168.3 L94.0 170.0 L94.5 169.8 L95.0 173.1 L95.5 172.2 L96.0 171.1 L96.2 179.0 L96.5 173.1 L97.0 173.3 L97.5 170.7 L98.0 173.8 L98.5 174.3 L99.0 175.9 L99.5 172.9 L100.0 174.3 L100.5 174.5 L101.0 176.7 L101.5 175.8 L102.0 177.1 L102.5 175.4 L103.0 177.4 L103.2 184.1 L103.5 175.1 L104.0 179.1 L104.5 175.9 L105.0 177.1 L105.5 177.5 L106.0 179.3 L106.5 175.9 L107.0 179.2 L107.5 177.5 L108.0 178.7 L108.5 176.5 L109.0 179.3 L109.5 180.3 L110.0 180.7 L110.5 178.9 L111.0 179.8 L111.5 180.9 L112.0 181.6 L112.5 177.8 L113.0 181.2 L113.5 179.6 L114.0 180.7 L114.5 181.6 L115.0 180.9 L115.2 186.4 L115.5 180.1 L116.0 182.6 L116.5 181.7 L117.0 183.0 L117.5 179.8 L118.0 183.9 L118.5 182.2 L119.0 181.9 L119.5 182.2 L120.0 182.3 L120.5 181.4 L121.0 182.1 L121.5 181.3 L122.0 183.8 L122.5 180.5 L123.0 183.1 L123.5 183.7 L124.0 182.5 L124.2 186.9 L124.5 181.7 L125.0 185.0 L125.5 183.1 L126.0 185.5 L126.5 181.8 L127.0 183.1 L127.5 183.4 L128.0 182.7 L128.5 182.2 L129.0 183.9 L129.5 181.6 L130.0 182.9 L130.5 182.4 L131.0 186.0 L131.5 184.7 L132.0 183.8 L132.5 184.3 L133.0 185.8 L133.5 181.6 L134.0 184.8 L134.5 184.8 L135.0 184.0 L135.5 184.8 L136.0 183.6 L136.5 184.6 L137.0 186.0 L137.2 188.3 L137.5 182.0 L138.0 186.5 L138.5 184.5 L139.0 186.5 L139.5 182.9 L140.0 186.8 L140.5 183.0 L141.0 186.1 L141.5 183.1 L142.0 184.0 L142.5 185.4 L143.0 186.0 L143.5 182.3 L144.0 184.8 L144.5 185.7 L145.0 187.1 L145.5 183.2 L146.0 185.6 L146.5 185.7 L147.0 184.9 L147.5 185.1 L148.0 186.9 L148.5 184.7 L149.0 185.4 L149.5 183.9 L150.0 186.9 L150.5 183.3 L151.0 186.8 L151.5 182.9 L152.0 184.7 L152.5 183.9 L153.0 187.6 L153.5 186.3 L154.0 185.5 L154.5 183.1 L155.0 186.2 L155.5 184.5 L156.0 185.5 L156.5 185.1 L157.0 186.9 L157.5 186.0 L158.0 186.9 L158.5 186.0 L159.0 185.8 L159.5 184.3 L160.0 187.2 L160.5 183.9 L161.0 185.7 L161.5 186.3 L162.0 186.8 L162.5 184.5 L163.0 188.1 L163.5 184.0 L164.0 187.5 L164.5 186.7 L165.0 185.4 L165.5 186.2 L166.0 187.7 L166.5 183.4 L167.0 186.0 L167.5 183.9 L168.0 188.2 L168.5 186.6 L169.0 186.4 L169.5 184.9 L170.0 186.0 L170.5 186.8 L171.0 185.6 L171.5 185.6 L172.0 186.0 L172.5 183.9 L173.0 185.9 L173.5 185.6 L174.0 187.4 L174.5 183.5 L175.0 186.4 L175.5 184.1 L176.0 186.3 L176.5 186.4 L177.0 187.1 L177.2 190.4 L177.5 185.0 L178.0 187.1 L178.5 183.9 L179.0 186.0 L179.5 185.0 L180.0 186.4 L180.5 187.0 L181.0 186.5 L181.5 184.9 L182.0 186.8 L182.5 187.2 L183.0 186.7 L183.5 186.3 L184.0 186.2 L184.2 194.6 L184.5 185.2 L185.0 188.1 L185.5 186.9 L186.0 187.0 L186.5 183.8 L187.0 187.3 L187.5 187.0 L188.0 185.9 L188.5 185.1 L189.0 187.2 L189.5 184.8 L190.0 187.3 L190.5 184.2 L191.0 187.2 L191.5 187.3 L192.0 186.3 L192.5 187.2 L193.0 188.7 L193.5 184.0 L194.0 188.6 L194.5 187.1 L195.0 187.7 L195.5 184.4 L196.0 188.2 L196.5 185.3 L197.0 188.4 L197.5 184.6 L198.0 186.5 L198.5 185.8 L199.0 187.0 L199.5 184.8 L200.0 188.1 L200.5 184.1 L201.0 187.6 L201.5 184.1 L202.0 188.4 L202.5 186.1 L203.0 187.6 L203.5 185.1 L204.0 187.2 L204.5 185.5 L205.0 187.9 L205.5 185.6 L206.0 186.0 L206.5 185.8 L207.0 186.6 L207.5 186.8 L208.0 187.3 L208.5 185.7 L209.0 186.3 L209.5 185.6 L210.0 186.2 L210.5 185.9 L211.0 186.1 L211.5 184.4 L212.0 188.2 L212.5 185.9 L213.0 186.1 L213.5 185.5 L214.0 188.9 L214.5 187.2 L215.0 189.1 L215.5 187.0 L216.0 186.6 L216.5 185.9 L217.0 189.0 L217.5 184.7 L218.0 188.5 L218.5 184.4 L219.0 187.1 L219.5 184.7 L220.0 188.8 L220.5 187.1 L221.0 186.5 L221.5 187.5 L222.0 186.7 L222.5 186.0 L223.0 187.1 L223.2 191.5 L223.5 184.8 L224.0 189.0 L224.5 187.4 L225.0 186.6 L225.5 184.6 L226.0 187.7 L226.5 185.5 L227.0 188.8 L227.5 186.3 L228.0 188.9 L228.5 187.8 L229.0 188.1 L229.5 187.1 L230.0 187.0 L230.5 186.3 L231.0 187.3 L231.5 185.8 L232.0 186.7 L232.5 184.4 L233.0 188.7 L233.5 186.6 L234.0 189.2 L234.5 186.7 L235.0 187.1 L235.2 190.8 L235.5 184.8 L236.0 188.1 L236.5 186.1 L237.0 189.0 L237.5 185.1 L238.0 188.2 L238.2 190.7 L238.5 185.6 L239.0 186.5 L239.5 185.1 L240.0 188.0 L240.5 185.0 L241.0 188.1 L241.5 184.8 L242.0 189.1 L242.5 184.9 L243.0 186.5 L243.5 187.5 L244.0 188.6 L244.5 185.3 L245.0 186.3 L245.5 186.4 L246.0 187.3 L246.5 185.9 L247.0 189.1 L247.5 185.2 L248.0 189.0 L248.2 193.4 L248.5 185.8 L249.0 187.0 L249.2 194.6 L249.5 184.4 L250.0 188.0 L250.5 184.9 L251.0 186.9 L251.5 186.2 L252.0 188.3 L252.5 185.0 L253.0 187.2 L253.5 184.5 L254.0 189.0 L254.5 187.0 L255.0 186.3 L255.5 187.1 L256.0 187.7 L256.5 186.0 L257.0 187.0 L257.5 185.2 L258.0 186.4 L258.5 187.1 L259.0 188.4 L259.5 187.0 L260.0 187.1 L260.5 186.0 L261.0 188.7 L261.5 185.4 L262.0 188.3 L262.5 185.2 L263.0 189.0 L263.2 192.1 L263.5 185.3 L264.0 188.6 L264.5 187.1 L265.0 187.3 L265.5 185.6 L266.0 187.1 L266.5 186.7 L267.0 188.5 L267.5 188.0 L268.0 187.8 L268.5 186.9 L269.0 189.0 L269.5 187.0 L270.0 188.1 L270.5 185.2 L271.0 188.3 L271.5 187.7 L272.0 186.8 L272.2 191.4 L272.5 187.8 L273.0 187.4 L273.5 184.6 L274.0 186.5 L274.5 186.7 L275.0 188.5 L275.5 184.7 L276.0 188.2 L276.5 187.4 L277.0 188.9 L277.5 184.7 L278.0 189.0 L278.5 187.9 L279.0 186.7 L279.5 184.9 L280.0 186.5 L280.5 187.4 L281.0 188.3 L281.5 186.7 L282.0 187.3 L282.5 184.8 L283.0 188.7 L283.5 185.6 L284.0 187.7 L284.2 192.2 L284.5 185.5 L285.0 188.6 L285.5 185.6 L286.0 189.4 L286.5 187.5 L287.0 188.3 L287.2 192.9 L287.5 186.1 L288.0 188.8 L288.5 187.0 L289.0 188.1 L289.5 187.6 L290.0 186.7 L290.5 185.1 L291.0 186.4 L291.5 187.2 L292.0 189.4 L292.2 193.3 L292.5 186.3 L293.0 188.9 L293.5 186.3 L294.0 187.5 L294.5 185.4 L295.0 189.3 L295.5 185.3 L296.0 188.6 L296.5 184.9 L297.0 188.4 L297.5 187.3 L298.0 188.6 L298.5 186.8 L299.0 187.5 L299.5 185.9 L300.0 189.2 L300.5 187.7 L301.0 186.5 L301.5 185.5 L302.0 189.2 L302.5 185.9 L303.0 189.2 L303.5 186.2 L304.0 188.1 L304.5 187.2 L305.0 188.4 L305.5 185.7 L306.0 186.9 L306.5 186.9 L307.0 188.7 L307.5 186.1 L308.0 188.8 L308.5 185.0 L309.0 187.9 L309.5 185.4 L310.0 187.0 L310.5 187.1 L311.0 189.0 L311.5 185.1 L312.0 187.2 L312.5 186.4 L313.0 186.9 L313.5 185.2 L314.0 189.5 L314.5 184.9 L315.0 189.4 L315.5 185.9 L316.0 189.5 L316.5 187.2 L317.0 187.8 L317.5 186.8 L318.0 186.8 L318.5 185.9 L319.0 186.5 L319.5 187.4 L320.0 188.6 L320.5 186.8 L321.0 187.9 L321.5 186.7 L322.0 187.7 L322.5 187.8 L323.0 187.8 L323.5 187.2 L324.0 187.7 L324.5 187.1 L325.0 189.2 L325.5 187.1 L326.0 189.1 L326.5 186.9 L327.0 187.9 L327.5 186.8 L328.0 186.8 L328.5 187.4 L329.0 188.7 L329.5 185.5 L330.0 187.8 L330.5 186.8 L331.0 187.7 L331.5 187.9 L332.0 187.0 L332.5 187.4 L333.0 187.7 L333.5 188.1 L334.0 186.6 L334.5 185.1 L335.0 188.9 L335.5 186.4 L336.0 186.8 L336.5 186.5 L337.0 188.7 L337.5 186.9 L338.0 189.0 L338.5 186.0 L339.0 189.4 L339.5 187.0 L340.0 187.7 L340.5 185.0 L341.0 189.5 L341.5 184.8 L342.0 187.3 L342.5 184.6 L343.0 187.8 L343.5 187.1 L344.0 187.6 L344.5 185.4 L345.0 188.8 L345.5 186.5 L346.0 187.1 L346.5 186.0 L347.0 187.1 L347.5 187.4 L348.0 189.0 L348.5 186.3 L349.0 188.2 L349.5 188.0 L350.0 187.6 L350.5 187.5 L351.0 189.0 L351.5 185.6 L352.0 188.2 L352.5 187.6 L353.0 187.6 L353.5 185.5 L354.0 187.6 L354.5 186.1 L355.0 187.0 L355.2 194.6 L355.5 185.6 L356.0 187.2 L356.5 186.3 L357.0 187.8 L357.5 186.9 L358.0 187.6 L358.5 187.6 L359.0 186.6 L359.5 187.8 L360.0 188.9 L360.5 187.6 L361.0 188.4 L361.2 191.0 L361.5 188.0 L362.0 188.5 L362.5 184.9 L363.0 186.9 L363.5 187.4 L364.0 187.5 L364.5 187.8 L365.0 188.9 L365.5 187.8 L366.0 188.4 L366.5 187.0 L367.0 189.2 L367.5 187.6 L368.0 187.1 L368.5 186.5 L369.0 188.8 L369.5 187.8 L370.0 188.2 L370.5 185.4 L371.0 186.9 L371.5 184.8 L372.0 187.9 L372.5 186.3 L373.0 188.0 L373.5 187.7 L374.0 186.5 L374.5 186.3 L375.0 188.2 L375.5 187.6 L376.0 187.6 L376.5 188.0 L377.0 186.7 L377.5 186.9 L378.0 186.6 L378.5 187.0 L379.0 189.4 L379.5 188.1 L380.0 188.1 L380.5 187.8 L381.0 186.6 L381.5 186.8 L382.0 187.5 L382.5 185.9 L383.0 188.0 L383.5 187.4 L384.0 187.1 L384.5 186.1 L385.0 188.2 L385.5 185.6 L386.0 189.0 L386.5 186.4 L387.0 187.3 L387.5 188.1 L388.0 188.5 L388.5 185.8 L389.0 187.5 L389.5 186.7 L390.0 188.5 L390.5 184.7 L391.0 188.7 L391.5 186.5 L392.0 186.6 L392.5 184.6 L393.0 187.1 L393.5 186.8 L394.0 188.5 L394.5 187.9 L395.0 188.4 L395.5 186.8 L396.0 188.6 L396.5 187.0 L397.0 187.1 L397.5 186.2 L398.0 188.9 L398.5 185.2 L399.0 186.6 L399.5 187.9 L400.0 188.5 L400.5 187.5 L401.0 188.9 L401.5 185.5 L402.0 187.4 L402.5 185.7 L403.0 187.8 L403.5 188.0 L404.0 186.7 L404.5 184.7 L405.0 186.9 L405.5 186.7 L406.0 189.3 L406.5 184.6 L407.0 187.7 L407.5 188.0 L408.0 189.5 L408.5 186.1 L409.0 186.8 L409.5 185.4 L410.0 187.0 L410.2 191.0 L410.5 187.1 L411.0 186.9 L411.5 184.9 L412.0 189.2 L412.5 184.7 L413.0 188.7 L413.5 187.2 L414.0 187.1 L414.2 194.9 L414.5 187.2 L415.0 189.1 L415.5 184.9 L416.0 188.4 L416.5 186.2 L417.0 189.4 L417.5 188.1 L418.0 188.7 L418.2 191.1 L418.5 186.9 L419.0 189.0 L419.5 185.7 L420.0 188.8 L420.5 187.7 L421.0 188.0 L421.2 192.8 L421.5 186.7 L422.0 187.9 L422.5 185.1 L423.0 189.0 L423.5 186.9 L424.0 188.4 L424.5 186.0 L425.0 188.9 L425.5 187.4 L426.0 188.2 L426.5 184.8 L427.0 189.5 L427.5 187.6 L428.0 187.5 L428.5 188.1 L429.0 189.1 L429.5 185.7 L430.0 187.8 L430.5 185.9 L431.0 188.6 L431.5 187.8 L432.0 189.0 L432.5 184.6 L433.0 187.3 L433.5 186.7 L434.0 189.0 L434.5 184.7 L435.0 189.1 L435.5 187.7 L436.0 188.3 L436.5 187.7 L437.0 189.0 L437.5 187.9 L438.0 187.6 L438.5 186.6 L439.0 189.0 L439.5 187.3 L440.0 189.4 L440.5 186.8 L441.0 188.6 L441.5 185.3 L442.0 187.3 L442.5 187.4 L443.0 187.9 L443.5 187.5 L444.0 188.9 L444.5 186.7 L445.0 189.3 L445.5 186.5 L446.0 188.0 L446.5 185.3 L447.0 187.1 L447.5 187.1 L448.0 187.6 L448.5 186.0 L449.0 188.1 L449.5 184.8 L450.0 189.6 L450.5 185.0 L451.0 188.5 L451.5 185.2 L452.0 188.3 L452.5 186.5 L453.0 186.6 L453.2 195.9 L453.5 187.7 L454.0 188.0 L454.5 185.5 L455.0 188.9 L455.5 188.0 L456.0 188.9 L456.5 188.1 L457.0 187.3 L457.2 192.0 L457.5 185.2 L458.0 186.8 L458.2 193.8 L458.5 187.7 L459.0 187.9 L459.5 187.9 L460.0 186.7 L460.5 186.0 L461.0 186.9 L461.5 185.5 L462.0 188.2 L462.5 188.0 L463.0 188.6 L463.5 186.2 L464.0 187.0 L464.5 188.2 L465.0 187.2 L465.2 192.3 L465.5 185.9 L466.0 189.3 L466.5 187.6 L467.0 186.6 L467.5 187.2 L468.0 188.5 L468.5 184.8 L469.0 186.9 L469.5 188.0 L470.0 188.6" fill="none" stroke="#c868d0" stroke-width="2.6" stroke-linejoin="round" opacity="0.85"/>
<path d="M90.5 165.5 L91.0 167.1 L91.2 172.0 L91.5 168.8 L92.0 167.6 L92.5 168.6 L93.0 170.9 L93.5 168.3 L94.0 170.0 L94.5 169.8 L95.0 173.1 L95.5 172.2 L96.0 171.1 L96.2 179.0 L96.5 173.1 L97.0 173.3 L97.5 170.7 L98.0 173.8 L98.5 174.3 L99.0 175.9 L99.5 172.9 L100.0 174.3 L100.5 174.5 L101.0 176.7 L101.5 175.8 L102.0 177.1 L102.5 175.4 L103.0 177.4 L103.2 184.1 L103.5 175.1 L104.0 179.1 L104.5 175.9 L105.0 177.1 L105.5 177.5 L106.0 179.3 L106.5 175.9 L107.0 179.2 L107.5 177.5 L108.0 178.7 L108.5 176.5 L109.0 179.3 L109.5 180.3 L110.0 180.7 L110.5 178.9 L111.0 179.8 L111.5 180.9 L112.0 181.6 L112.5 177.8 L113.0 181.2 L113.5 179.6 L114.0 180.7 L114.5 181.6 L115.0 180.9 L115.2 186.4 L115.5 180.1 L116.0 182.6 L116.5 181.7 L117.0 183.0 L117.5 179.8 L118.0 183.9 L118.5 182.2 L119.0 181.9 L119.5 182.2 L120.0 182.3 L120.5 181.4 L121.0 182.1 L121.5 181.3 L122.0 183.8 L122.5 180.5 L123.0 183.1 L123.5 183.7 L124.0 182.5 L124.2 186.9 L124.5 181.7 L125.0 185.0 L125.5 183.1 L126.0 185.5 L126.5 181.8 L127.0 183.1 L127.5 183.4 L128.0 182.7 L128.5 182.2 L129.0 183.9 L129.5 181.6 L130.0 182.9 L130.5 182.4 L131.0 186.0 L131.5 184.7 L132.0 183.8 L132.5 184.3 L133.0 185.8 L133.5 181.6 L134.0 184.8 L134.5 184.8 L135.0 184.0 L135.5 184.8 L136.0 183.6 L136.5 184.6 L137.0 186.0 L137.2 188.3 L137.5 182.0 L138.0 186.5 L138.5 184.5 L139.0 186.5 L139.5 182.9 L140.0 186.8 L140.5 183.0 L141.0 186.1 L141.5 183.1 L142.0 184.0 L142.5 185.4 L143.0 186.0 L143.5 182.3 L144.0 184.8 L144.5 185.7 L145.0 187.1 L145.5 183.2 L146.0 185.6 L146.5 185.7 L147.0 184.9 L147.5 185.1 L148.0 186.9 L148.5 184.7 L149.0 185.4 L149.5 183.9 L150.0 186.9 L150.5 183.3 L151.0 186.8 L151.5 182.9 L152.0 184.7 L152.5 183.9 L153.0 187.6 L153.5 186.3 L154.0 185.5 L154.5 183.1 L155.0 186.2 L155.5 184.5 L156.0 185.5 L156.5 185.1 L157.0 186.9 L157.5 186.0 L158.0 186.9 L158.5 186.0 L159.0 185.8 L159.5 184.3 L160.0 187.2 L160.5 183.9 L161.0 185.7 L161.5 186.3 L162.0 186.8 L162.5 184.5 L163.0 188.1 L163.5 184.0 L164.0 187.5 L164.5 186.7 L165.0 185.4 L165.5 186.2 L166.0 187.7 L166.5 183.4 L167.0 186.0 L167.5 183.9 L168.0 188.2 L168.5 186.6 L169.0 186.4 L169.5 184.9 L170.0 186.0 L170.5 186.8 L171.0 185.6 L171.5 185.6 L172.0 186.0 L172.5 183.9 L173.0 185.9 L173.5 185.6 L174.0 187.4 L174.5 183.5 L175.0 186.4 L175.5 184.1 L176.0 186.3 L176.5 186.4 L177.0 187.1 L177.2 190.4 L177.5 185.0 L178.0 187.1 L178.5 183.9 L179.0 186.0 L179.5 185.0 L180.0 186.4 L180.5 187.0 L181.0 186.5 L181.5 184.9 L182.0 186.8 L182.5 187.2 L183.0 186.7 L183.5 186.3 L184.0 186.2 L184.2 194.6 L184.5 185.2 L185.0 188.1 L185.5 186.9 L186.0 187.0 L186.5 183.8 L187.0 187.3 L187.5 187.0 L188.0 185.9 L188.5 185.1 L189.0 187.2 L189.5 184.8 L190.0 187.3 L190.5 184.2 L191.0 187.2 L191.5 187.3 L192.0 186.3 L192.5 187.2 L193.0 188.7 L193.5 184.0 L194.0 188.6 L194.5 187.1 L195.0 187.7 L195.5 184.4 L196.0 188.2 L196.5 185.3 L197.0 188.4 L197.5 184.6 L198.0 186.5 L198.5 185.8 L199.0 187.0 L199.5 184.8 L200.0 188.1 L200.5 184.1 L201.0 187.6 L201.5 184.1 L202.0 188.4 L202.5 186.1 L203.0 187.6 L203.5 185.1 L204.0 187.2 L204.5 185.5 L205.0 187.9 L205.5 185.6 L206.0 186.0 L206.5 185.8 L207.0 186.6 L207.5 186.8 L208.0 187.3 L208.5 185.7 L209.0 186.3 L209.5 185.6 L210.0 186.2 L210.5 185.9 L211.0 186.1 L211.5 184.4 L212.0 188.2 L212.5 185.9 L213.0 186.1 L213.5 185.5 L214.0 188.9 L214.5 187.2 L215.0 189.1 L215.5 187.0 L216.0 186.6 L216.5 185.9 L217.0 189.0 L217.5 184.7 L218.0 188.5 L218.5 184.4 L219.0 187.1 L219.5 184.7 L220.0 188.8 L220.5 187.1 L221.0 186.5 L221.5 187.5 L222.0 186.7 L222.5 186.0 L223.0 187.1 L223.2 191.5 L223.5 184.8 L224.0 189.0 L224.5 187.4 L225.0 186.6 L225.5 184.6 L226.0 187.7 L226.5 185.5 L227.0 188.8 L227.5 186.3 L228.0 188.9 L228.5 187.8 L229.0 188.1 L229.5 187.1 L230.0 187.0 L230.5 186.3 L231.0 187.3 L231.5 185.8 L232.0 186.7 L232.5 184.4 L233.0 188.7 L233.5 186.6 L234.0 189.2 L234.5 186.7 L235.0 187.1 L235.2 190.8 L235.5 184.8 L236.0 188.1 L236.5 186.1 L237.0 189.0 L237.5 185.1 L238.0 188.2 L238.2 190.7 L238.5 185.6 L239.0 186.5 L239.5 185.1 L240.0 188.0 L240.5 185.0 L241.0 188.1 L241.5 184.8 L242.0 189.1 L242.5 184.9 L243.0 186.5 L243.5 187.5 L244.0 188.6 L244.5 185.3 L245.0 186.3 L245.5 186.4 L246.0 187.3 L246.5 185.9 L247.0 189.1 L247.5 185.2 L248.0 189.0 L248.2 193.4 L248.5 185.8 L249.0 187.0 L249.2 194.6 L249.5 184.4 L250.0 188.0 L250.5 184.9 L251.0 186.9 L251.5 186.2 L252.0 188.3 L252.5 185.0 L253.0 187.2 L253.5 184.5 L254.0 189.0 L254.5 187.0 L255.0 186.3 L255.5 187.1 L256.0 187.7 L256.5 186.0 L257.0 187.0 L257.5 185.2 L258.0 186.4 L258.5 187.1 L259.0 188.4 L259.5 187.0 L260.0 187.1 L260.5 186.0 L261.0 188.7 L261.5 185.4 L262.0 188.3 L262.5 185.2 L263.0 189.0 L263.2 192.1 L263.5 185.3 L264.0 188.6 L264.5 187.1 L265.0 187.3 L265.5 185.6 L266.0 187.1 L266.5 186.7 L267.0 188.5 L267.5 188.0 L268.0 187.8 L268.5 186.9 L269.0 189.0 L269.5 187.0 L270.0 188.1 L270.5 185.2 L271.0 188.3 L271.5 187.7 L272.0 186.8 L272.2 191.4 L272.5 187.8 L273.0 187.4 L273.5 184.6 L274.0 186.5 L274.5 186.7 L275.0 188.5 L275.5 184.7 L276.0 188.2 L276.5 187.4 L277.0 188.9 L277.5 184.7 L278.0 189.0 L278.5 187.9 L279.0 186.7 L279.5 184.9 L280.0 186.5 L280.5 187.4 L281.0 188.3 L281.5 186.7 L282.0 187.3 L282.5 184.8 L283.0 188.7 L283.5 185.6 L284.0 187.7 L284.2 192.2 L284.5 185.5 L285.0 188.6 L285.5 185.6 L286.0 189.4 L286.5 187.5 L287.0 188.3 L287.2 192.9 L287.5 186.1 L288.0 188.8 L288.5 187.0 L289.0 188.1 L289.5 187.6 L290.0 186.7 L290.5 185.1 L291.0 186.4 L291.5 187.2 L292.0 189.4 L292.2 193.3 L292.5 186.3 L293.0 188.9 L293.5 186.3 L294.0 187.5 L294.5 185.4 L295.0 189.3 L295.5 185.3 L296.0 188.6 L296.5 184.9 L297.0 188.4 L297.5 187.3 L298.0 188.6 L298.5 186.8 L299.0 187.5 L299.5 185.9 L300.0 189.2 L300.5 187.7 L301.0 186.5 L301.5 185.5 L302.0 189.2 L302.5 185.9 L303.0 189.2 L303.5 186.2 L304.0 188.1 L304.5 187.2 L305.0 188.4 L305.5 185.7 L306.0 186.9 L306.5 186.9 L307.0 188.7 L307.5 186.1 L308.0 188.8 L308.5 185.0 L309.0 187.9 L309.5 185.4 L310.0 187.0 L310.5 187.1 L311.0 189.0 L311.5 185.1 L312.0 187.2 L312.5 186.4 L313.0 186.9 L313.5 185.2 L314.0 189.5 L314.5 184.9 L315.0 189.4 L315.5 185.9 L316.0 189.5 L316.5 187.2 L317.0 187.8 L317.5 186.8 L318.0 186.8 L318.5 185.9 L319.0 186.5 L319.5 187.4 L320.0 188.6 L320.5 186.8 L321.0 187.9 L321.5 186.7 L322.0 187.7 L322.5 187.8 L323.0 187.8 L323.5 187.2 L324.0 187.7 L324.5 187.1 L325.0 189.2 L325.5 187.1 L326.0 189.1 L326.5 186.9 L327.0 187.9 L327.5 186.8 L328.0 186.8 L328.5 187.4 L329.0 188.7 L329.5 185.5 L330.0 187.8 L330.5 186.8 L331.0 187.7 L331.5 187.9 L332.0 187.0 L332.5 187.4 L333.0 187.7 L333.5 188.1 L334.0 186.6 L334.5 185.1 L335.0 188.9 L335.5 186.4 L336.0 186.8 L336.5 186.5 L337.0 188.7 L337.5 186.9 L338.0 189.0 L338.5 186.0 L339.0 189.4 L339.5 187.0 L340.0 187.7 L340.5 185.0 L341.0 189.5 L341.5 184.8 L342.0 187.3 L342.5 184.6 L343.0 187.8 L343.5 187.1 L344.0 187.6 L344.5 185.4 L345.0 188.8 L345.5 186.5 L346.0 187.1 L346.5 186.0 L347.0 187.1 L347.5 187.4 L348.0 189.0 L348.5 186.3 L349.0 188.2 L349.5 188.0 L350.0 187.6 L350.5 187.5 L351.0 189.0 L351.5 185.6 L352.0 188.2 L352.5 187.6 L353.0 187.6 L353.5 185.5 L354.0 187.6 L354.5 186.1 L355.0 187.0 L355.2 194.6 L355.5 185.6 L356.0 187.2 L356.5 186.3 L357.0 187.8 L357.5 186.9 L358.0 187.6 L358.5 187.6 L359.0 186.6 L359.5 187.8 L360.0 188.9 L360.5 187.6 L361.0 188.4 L361.2 191.0 L361.5 188.0 L362.0 188.5 L362.5 184.9 L363.0 186.9 L363.5 187.4 L364.0 187.5 L364.5 187.8 L365.0 188.9 L365.5 187.8 L366.0 188.4 L366.5 187.0 L367.0 189.2 L367.5 187.6 L368.0 187.1 L368.5 186.5 L369.0 188.8 L369.5 187.8 L370.0 188.2 L370.5 185.4 L371.0 186.9 L371.5 184.8 L372.0 187.9 L372.5 186.3 L373.0 188.0 L373.5 187.7 L374.0 186.5 L374.5 186.3 L375.0 188.2 L375.5 187.6 L376.0 187.6 L376.5 188.0 L377.0 186.7 L377.5 186.9 L378.0 186.6 L378.5 187.0 L379.0 189.4 L379.5 188.1 L380.0 188.1 L380.5 187.8 L381.0 186.6 L381.5 186.8 L382.0 187.5 L382.5 185.9 L383.0 188.0 L383.5 187.4 L384.0 187.1 L384.5 186.1 L385.0 188.2 L385.5 185.6 L386.0 189.0 L386.5 186.4 L387.0 187.3 L387.5 188.1 L388.0 188.5 L388.5 185.8 L389.0 187.5 L389.5 186.7 L390.0 188.5 L390.5 184.7 L391.0 188.7 L391.5 186.5 L392.0 186.6 L392.5 184.6 L393.0 187.1 L393.5 186.8 L394.0 188.5 L394.5 187.9 L395.0 188.4 L395.5 186.8 L396.0 188.6 L396.5 187.0 L397.0 187.1 L397.5 186.2 L398.0 188.9 L398.5 185.2 L399.0 186.6 L399.5 187.9 L400.0 188.5 L400.5 187.5 L401.0 188.9 L401.5 185.5 L402.0 187.4 L402.5 185.7 L403.0 187.8 L403.5 188.0 L404.0 186.7 L404.5 184.7 L405.0 186.9 L405.5 186.7 L406.0 189.3 L406.5 184.6 L407.0 187.7 L407.5 188.0 L408.0 189.5 L408.5 186.1 L409.0 186.8 L409.5 185.4 L410.0 187.0 L410.2 191.0 L410.5 187.1 L411.0 186.9 L411.5 184.9 L412.0 189.2 L412.5 184.7 L413.0 188.7 L413.5 187.2 L414.0 187.1 L414.2 194.9 L414.5 187.2 L415.0 189.1 L415.5 184.9 L416.0 188.4 L416.5 186.2 L417.0 189.4 L417.5 188.1 L418.0 188.7 L418.2 191.1 L418.5 186.9 L419.0 189.0 L419.5 185.7 L420.0 188.8 L420.5 187.7 L421.0 188.0 L421.2 192.8 L421.5 186.7 L422.0 187.9 L422.5 185.1 L423.0 189.0 L423.5 186.9 L424.0 188.4 L424.5 186.0 L425.0 188.9 L425.5 187.4 L426.0 188.2 L426.5 184.8 L427.0 189.5 L427.5 187.6 L428.0 187.5 L428.5 188.1 L429.0 189.1 L429.5 185.7 L430.0 187.8 L430.5 185.9 L431.0 188.6 L431.5 187.8 L432.0 189.0 L432.5 184.6 L433.0 187.3 L433.5 186.7 L434.0 189.0 L434.5 184.7 L435.0 189.1 L435.5 187.7 L436.0 188.3 L436.5 187.7 L437.0 189.0 L437.5 187.9 L438.0 187.6 L438.5 186.6 L439.0 189.0 L439.5 187.3 L440.0 189.4 L440.5 186.8 L441.0 188.6 L441.5 185.3 L442.0 187.3 L442.5 187.4 L443.0 187.9 L443.5 187.5 L444.0 188.9 L444.5 186.7 L445.0 189.3 L445.5 186.5 L446.0 188.0 L446.5 185.3 L447.0 187.1 L447.5 187.1 L448.0 187.6 L448.5 186.0 L449.0 188.1 L449.5 184.8 L450.0 189.6 L450.5 185.0 L451.0 188.5 L451.5 185.2 L452.0 188.3 L452.5 186.5 L453.0 186.6 L453.2 195.9 L453.5 187.7 L454.0 188.0 L454.5 185.5 L455.0 188.9 L455.5 188.0 L456.0 188.9 L456.5 188.1 L457.0 187.3 L457.2 192.0 L457.5 185.2 L458.0 186.8 L458.2 193.8 L458.5 187.7 L459.0 187.9 L459.5 187.9 L460.0 186.7 L460.5 186.0 L461.0 186.9 L461.5 185.5 L462.0 188.2 L462.5 188.0 L463.0 188.6 L463.5 186.2 L464.0 187.0 L464.5 188.2 L465.0 187.2 L465.2 192.3 L465.5 185.9 L466.0 189.3 L466.5 187.6 L467.0 186.6 L467.5 187.2 L468.0 188.5 L468.5 184.8 L469.0 186.9 L469.5 188.0 L470.0 188.6" fill="none" stroke="#f0a4f0" stroke-width="1.4" stroke-linejoin="round"/>
<path d="M90.5 166.7 L91.5 168.1 L92.5 168.2 L93.5 169.5 L94.5 170.3 L95.5 171.0 L96.5 172.3 L97.5 172.6 L98.5 173.4 L99.5 173.9 L100.5 175.3 L101.5 175.0 L102.5 176.5 L103.5 176.3 L104.5 176.5 L105.5 178.2 L106.5 177.7 L107.5 179.1 L108.5 179.4 L109.5 179.8 L110.5 179.0 L111.5 179.8 L112.5 179.6 L113.5 181.1 L114.5 181.2 L115.5 181.1 L116.5 181.1 L117.5 181.2 L118.5 182.1 L119.5 181.8 L120.5 182.2 L121.5 181.7 L122.5 182.0 L123.5 181.9 L124.5 183.0 L125.5 182.9 L126.5 182.5 L127.5 183.7 L128.5 182.9 L129.5 183.3 L130.5 183.0 L131.5 183.3 L132.5 184.2 L133.5 183.6 L134.5 183.4 L135.5 184.0 L136.5 183.8 L137.5 184.7 L138.5 183.7 L139.5 185.0 L140.5 183.8 L141.5 185.0 L142.5 184.8 L143.5 184.2 L144.5 184.6 L145.5 184.4 L146.5 184.5 L147.5 184.4 L148.5 184.7 L149.5 185.6 L150.5 185.7 L151.5 185.7 L152.5 184.5 L153.5 184.9 L154.5 185.8 L155.5 184.6 L156.5 185.6 L157.5 185.0 L158.5 186.0 L159.5 184.7 L160.5 185.9 L161.5 185.3 L162.5 185.0 L163.5 184.8 L164.5 186.0 L165.5 185.6 L166.5 185.2 L167.5 185.6 L168.5 186.3 L169.5 185.3 L170.5 185.9 L171.5 185.3 L172.5 185.4 L173.5 186.2 L174.5 186.2 L175.5 185.5 L176.5 185.3 L177.5 185.4 L178.5 186.1 L179.5 186.0 L180.5 185.7 L181.5 185.6 L182.5 186.2 L183.5 186.3 L184.5 186.5 L185.5 186.2 L186.5 185.7 L187.5 185.5 L188.5 186.5 L189.5 186.0 L190.5 186.5 L191.5 185.6 L192.5 186.7 L193.5 186.0 L194.5 186.7 L195.5 186.8 L196.5 186.3 L197.5 185.6 L198.5 186.9 L199.5 186.3 L200.5 186.9 L201.5 186.0 L202.5 185.9 L203.5 186.8 L204.5 186.2 L205.5 185.9 L206.5 186.2 L207.5 186.6 L208.5 185.7 L209.5 186.5 L210.5 186.4 L211.5 186.5 L212.5 185.9 L213.5 186.8 L214.5 186.9 L215.5 187.0 L216.5 186.3 L217.5 186.8 L218.5 186.4 L219.5 186.9 L220.5 185.9 L221.5 187.1 L222.5 187.2 L223.5 186.6 L224.5 186.6 L225.5 186.6 L226.5 186.7 L227.5 185.9 L228.5 187.3 L229.5 186.2 L230.5 186.2 L231.5 186.1 L232.5 186.3 L233.5 187.1 L234.5 186.0 L235.5 186.1 L236.5 187.0 L237.5 186.3 L238.5 186.0 L239.5 186.8 L240.5 186.8 L241.5 186.7 L242.5 187.0 L243.5 186.2 L244.5 187.2 L245.5 187.0 L246.5 186.1 L247.5 186.2 L248.5 186.7 L249.5 186.8 L250.5 186.4 L251.5 186.2 L252.5 186.6 L253.5 186.3 L254.5 186.9 L255.5 187.3 L256.5 186.3 L257.5 186.9 L258.5 187.1 L259.5 186.3 L260.5 187.3 L261.5 187.4 L262.5 186.7 L263.5 186.7 L264.5 187.3 L265.5 186.9 L266.5 186.7 L267.5 187.4 L268.5 187.2 L269.5 186.6 L270.5 186.5 L271.5 186.6 L272.5 186.8 L273.5 187.5 L274.5 187.3 L275.5 187.4 L276.5 187.3 L277.5 187.3 L278.5 186.2 L279.5 186.9 L280.5 187.5 L281.5 187.5 L282.5 186.5 L283.5 186.8 L284.5 187.1 L285.5 186.7 L286.5 186.9 L287.5 186.3 L288.5 186.8 L289.5 186.9 L290.5 186.2 L291.5 186.4 L292.5 187.6 L293.5 187.3 L294.5 187.5 L295.5 187.1 L296.5 187.3 L297.5 187.4 L298.5 187.4 L299.5 186.3 L300.5 187.1 L301.5 186.6 L302.5 187.2 L303.5 186.6 L304.5 187.0 L305.5 187.5 L306.5 187.1 L307.5 186.6 L308.5 187.0 L309.5 186.8 L310.5 187.6 L311.5 186.6 L312.5 186.7 L313.5 187.1 L314.5 186.4 L315.5 187.1 L316.5 187.6 L317.5 187.0 L318.5 186.6 L319.5 186.9 L320.5 187.0 L321.5 186.4 L322.5 186.4 L323.5 186.4 L324.5 186.7 L325.5 186.8 L326.5 186.7 L327.5 186.6 L328.5 186.4 L329.5 187.0 L330.5 187.4 L331.5 187.1 L332.5 187.1 L333.5 187.2 L334.5 186.5 L335.5 187.3 L336.5 186.9 L337.5 187.0 L338.5 187.1 L339.5 186.9 L340.5 186.7 L341.5 186.6 L342.5 186.6 L343.5 187.0 L344.5 186.8 L345.5 187.1 L346.5 186.3 L347.5 186.8 L348.5 187.5 L349.5 186.6 L350.5 187.0 L351.5 187.0 L352.5 186.7 L353.5 187.7 L354.5 186.7 L355.5 187.4 L356.5 186.5 L357.5 186.4 L358.5 187.5 L359.5 186.9 L360.5 186.4 L361.5 186.8 L362.5 186.9 L363.5 187.3 L364.5 186.4 L365.5 186.6 L366.5 187.6 L367.5 187.3 L368.5 186.5 L369.5 186.7 L370.5 186.8 L371.5 187.2 L372.5 187.1 L373.5 187.5 L374.5 187.4 L375.5 187.0 L376.5 187.3 L377.5 187.3 L378.5 187.3 L379.5 186.9 L380.5 187.4 L381.5 187.3 L382.5 187.6 L383.5 186.5 L384.5 187.5 L385.5 186.3 L386.5 187.4 L387.5 187.1 L388.5 187.0 L389.5 187.6 L390.5 187.1 L391.5 186.9 L392.5 187.4 L393.5 187.5 L394.5 187.1 L395.5 186.8 L396.5 186.9 L397.5 186.9 L398.5 187.3 L399.5 186.7 L400.5 186.8 L401.5 187.1 L402.5 186.8 L403.5 186.7 L404.5 187.4 L405.5 187.5 L406.5 187.0 L407.5 186.9 L408.5 186.5 L409.5 186.7 L410.5 186.5 L411.5 187.1 L412.5 187.1 L413.5 186.4 L414.5 187.6 L415.5 186.7 L416.5 187.5 L417.5 187.5 L418.5 187.6 L419.5 186.6 L420.5 186.9 L421.5 187.6 L422.5 186.3 L423.5 186.4 L424.5 187.1 L425.5 187.0 L426.5 187.6 L427.5 187.4 L428.5 187.0 L429.5 187.7 L430.5 187.0 L431.5 187.0 L432.5 187.3 L433.5 186.8 L434.5 186.8 L435.5 187.1 L436.5 186.8 L437.5 187.6 L438.5 187.2 L439.5 187.0 L440.5 186.4 L441.5 186.8 L442.5 186.9 L443.5 187.1 L444.5 187.1 L445.5 187.5 L446.5 187.6 L447.5 187.0 L448.5 186.9 L449.5 187.2 L450.5 187.7 L451.5 186.8 L452.5 187.0 L453.5 187.4 L454.5 186.5 L455.5 186.7 L456.5 187.7 L457.5 187.5 L458.5 187.0 L459.5 186.5 L460.5 187.5 L461.5 187.3 L462.5 187.4 L463.5 187.7 L464.5 187.5 L465.5 186.9 L466.5 186.5 L467.5 186.7 L468.5 187.0 L469.5 187.0" fill="none" stroke="#eea0ee" stroke-width="3.4" stroke-linejoin="round"/>
<path d="M90.5 166.7 L91.5 168.1 L92.5 168.2 L93.5 169.5 L94.5 170.3 L95.5 171.0 L96.5 172.3 L97.5 172.6 L98.5 173.4 L99.5 173.9 L100.5 175.3 L101.5 175.0 L102.5 176.5 L103.5 176.3 L104.5 176.5 L105.5 178.2 L106.5 177.7 L107.5 179.1 L108.5 179.4 L109.5 179.8 L110.5 179.0 L111.5 179.8 L112.5 179.6 L113.5 181.1 L114.5 181.2 L115.5 181.1 L116.5 181.1 L117.5 181.2 L118.5 182.1 L119.5 181.8 L120.5 182.2 L121.5 181.7 L122.5 182.0 L123.5 181.9 L124.5 183.0 L125.5 182.9 L126.5 182.5 L127.5 183.7 L128.5 182.9 L129.5 183.3 L130.5 183.0 L131.5 183.3 L132.5 184.2 L133.5 183.6 L134.5 183.4 L135.5 184.0 L136.5 183.8 L137.5 184.7 L138.5 183.7 L139.5 185.0 L140.5 183.8 L141.5 185.0 L142.5 184.8 L143.5 184.2 L144.5 184.6 L145.5 184.4 L146.5 184.5 L147.5 184.4 L148.5 184.7 L149.5 185.6 L150.5 185.7 L151.5 185.7 L152.5 184.5 L153.5 184.9 L154.5 185.8 L155.5 184.6 L156.5 185.6 L157.5 185.0 L158.5 186.0 L159.5 184.7 L160.5 185.9 L161.5 185.3 L162.5 185.0 L163.5 184.8 L164.5 186.0 L165.5 185.6 L166.5 185.2 L167.5 185.6 L168.5 186.3 L169.5 185.3 L170.5 185.9 L171.5 185.3 L172.5 185.4 L173.5 186.2 L174.5 186.2 L175.5 185.5 L176.5 185.3 L177.5 185.4 L178.5 186.1 L179.5 186.0 L180.5 185.7 L181.5 185.6 L182.5 186.2 L183.5 186.3 L184.5 186.5 L185.5 186.2 L186.5 185.7 L187.5 185.5 L188.5 186.5 L189.5 186.0 L190.5 186.5 L191.5 185.6 L192.5 186.7 L193.5 186.0 L194.5 186.7 L195.5 186.8 L196.5 186.3 L197.5 185.6 L198.5 186.9 L199.5 186.3 L200.5 186.9 L201.5 186.0 L202.5 185.9 L203.5 186.8 L204.5 186.2 L205.5 185.9 L206.5 186.2 L207.5 186.6 L208.5 185.7 L209.5 186.5 L210.5 186.4 L211.5 186.5 L212.5 185.9 L213.5 186.8 L214.5 186.9 L215.5 187.0 L216.5 186.3 L217.5 186.8 L218.5 186.4 L219.5 186.9 L220.5 185.9 L221.5 187.1 L222.5 187.2 L223.5 186.6 L224.5 186.6 L225.5 186.6 L226.5 186.7 L227.5 185.9 L228.5 187.3 L229.5 186.2 L230.5 186.2 L231.5 186.1 L232.5 186.3 L233.5 187.1 L234.5 186.0 L235.5 186.1 L236.5 187.0 L237.5 186.3 L238.5 186.0 L239.5 186.8 L240.5 186.8 L241.5 186.7 L242.5 187.0 L243.5 186.2 L244.5 187.2 L245.5 187.0 L246.5 186.1 L247.5 186.2 L248.5 186.7 L249.5 186.8 L250.5 186.4 L251.5 186.2 L252.5 186.6 L253.5 186.3 L254.5 186.9 L255.5 187.3 L256.5 186.3 L257.5 186.9 L258.5 187.1 L259.5 186.3 L260.5 187.3 L261.5 187.4 L262.5 186.7 L263.5 186.7 L264.5 187.3 L265.5 186.9 L266.5 186.7 L267.5 187.4 L268.5 187.2 L269.5 186.6 L270.5 186.5 L271.5 186.6 L272.5 186.8 L273.5 187.5 L274.5 187.3 L275.5 187.4 L276.5 187.3 L277.5 187.3 L278.5 186.2 L279.5 186.9 L280.5 187.5 L281.5 187.5 L282.5 186.5 L283.5 186.8 L284.5 187.1 L285.5 186.7 L286.5 186.9 L287.5 186.3 L288.5 186.8 L289.5 186.9 L290.5 186.2 L291.5 186.4 L292.5 187.6 L293.5 187.3 L294.5 187.5 L295.5 187.1 L296.5 187.3 L297.5 187.4 L298.5 187.4 L299.5 186.3 L300.5 187.1 L301.5 186.6 L302.5 187.2 L303.5 186.6 L304.5 187.0 L305.5 187.5 L306.5 187.1 L307.5 186.6 L308.5 187.0 L309.5 186.8 L310.5 187.6 L311.5 186.6 L312.5 186.7 L313.5 187.1 L314.5 186.4 L315.5 187.1 L316.5 187.6 L317.5 187.0 L318.5 186.6 L319.5 186.9 L320.5 187.0 L321.5 186.4 L322.5 186.4 L323.5 186.4 L324.5 186.7 L325.5 186.8 L326.5 186.7 L327.5 186.6 L328.5 186.4 L329.5 187.0 L330.5 187.4 L331.5 187.1 L332.5 187.1 L333.5 187.2 L334.5 186.5 L335.5 187.3 L336.5 186.9 L337.5 187.0 L338.5 187.1 L339.5 186.9 L340.5 186.7 L341.5 186.6 L342.5 186.6 L343.5 187.0 L344.5 186.8 L345.5 187.1 L346.5 186.3 L347.5 186.8 L348.5 187.5 L349.5 186.6 L350.5 187.0 L351.5 187.0 L352.5 186.7 L353.5 187.7 L354.5 186.7 L355.5 187.4 L356.5 186.5 L357.5 186.4 L358.5 187.5 L359.5 186.9 L360.5 186.4 L361.5 186.8 L362.5 186.9 L363.5 187.3 L364.5 186.4 L365.5 186.6 L366.5 187.6 L367.5 187.3 L368.5 186.5 L369.5 186.7 L370.5 186.8 L371.5 187.2 L372.5 187.1 L373.5 187.5 L374.5 187.4 L375.5 187.0 L376.5 187.3 L377.5 187.3 L378.5 187.3 L379.5 186.9 L380.5 187.4 L381.5 187.3 L382.5 187.6 L383.5 186.5 L384.5 187.5 L385.5 186.3 L386.5 187.4 L387.5 187.1 L388.5 187.0 L389.5 187.6 L390.5 187.1 L391.5 186.9 L392.5 187.4 L393.5 187.5 L394.5 187.1 L395.5 186.8 L396.5 186.9 L397.5 186.9 L398.5 187.3 L399.5 186.7 L400.5 186.8 L401.5 187.1 L402.5 186.8 L403.5 186.7 L404.5 187.4 L405.5 187.5 L406.5 187.0 L407.5 186.9 L408.5 186.5 L409.5 186.7 L410.5 186.5 L411.5 187.1 L412.5 187.1 L413.5 186.4 L414.5 187.6 L415.5 186.7 L416.5 187.5 L417.5 187.5 L418.5 187.6 L419.5 186.6 L420.5 186.9 L421.5 187.6 L422.5 186.3 L423.5 186.4 L424.5 187.1 L425.5 187.0 L426.5 187.6 L427.5 187.4 L428.5 187.0 L429.5 187.7 L430.5 187.0 L431.5 187.0 L432.5 187.3 L433.5 186.8 L434.5 186.8 L435.5 187.1 L436.5 186.8 L437.5 187.6 L438.5 187.2 L439.5 187.0 L440.5 186.4 L441.5 186.8 L442.5 186.9 L443.5 187.1 L444.5 187.1 L445.5 187.5 L446.5 187.6 L447.5 187.0 L448.5 186.9 L449.5 187.2 L450.5 187.7 L451.5 186.8 L452.5 187.0 L453.5 187.4 L454.5 186.5 L455.5 186.7 L456.5 187.7 L457.5 187.5 L458.5 187.0 L459.5 186.5 L460.5 187.5 L461.5 187.3 L462.5 187.4 L463.5 187.7 L464.5 187.5 L465.5 186.9 L466.5 186.5 L467.5 186.7 L468.5 187.0 L469.5 187.0" fill="none" stroke="#f8c4f8" stroke-width="1.6" stroke-linejoin="round"/>
<line x1="282.5" y1="94" x2="282.5" y2="240" stroke="#e08828" stroke-width="1.4" stroke-dasharray="2 1.5"/>
<line x1="377" y1="94" x2="377" y2="240" stroke="#e8b880" stroke-width="1.4" stroke-dasharray="2 1.5"/>
<path d="M279.5 92.5 L285.5 92.5 L282.5 96 Z" fill="#f0a020" />
<path d="M278.5 242 L286 242 L282.2 246 Z" fill="#e0a050" />
<path d="M283.3 224 L290.1 230 L290.1 239.5 L276.5 239.5 L276.5 230 Z" fill="#1a0c00" stroke="#e08828" stroke-width="1.1" />
<text x="283.3" y="237.5" font-size="7" fill="#f09030" text-anchor="middle" font-weight="bold" font-style="normal" >X1</text>
<path d="M378 226 L384.8 232 L384.8 240 L371.2 240 L371.2 232 Z" fill="#2e1804" stroke="#e08828" stroke-width="1.1" />
<text x="378" y="238" font-size="7" fill="#b87838" text-anchor="middle" font-weight="bold" font-style="normal" >X2</text>
<path d="M456.5 216 L462.5 209 L470.0 209 L470.0 223 L462.5 223 Z" fill="#1a0c00" stroke="#e08828" stroke-width="1.1" />
<text x="469.5" y="218.8" font-size="7" fill="#f09030" text-anchor="end" font-weight="bold" font-style="normal" >Y2</text>
<line x1="90" y1="364.5" x2="459" y2="364.5" stroke="#b46a20" stroke-width="1.3" stroke-dasharray="11 1.2"/>
<rect x="243" y="323" width="26" height="31" rx="0" fill="#8c8c1c" opacity="0.95"/>
<rect x="319" y="309" width="25" height="21" rx="0" fill="#5a5a14" />
<g stroke="#2e2e0a" stroke-width="1"></g>
<g stroke="#33330c" stroke-width="1.2"><line x1="319" y1="329" x2="320" y2="330"/><line x1="319" y1="325" x2="324" y2="330"/><line x1="319" y1="321" x2="328" y2="330"/><line x1="319" y1="317" x2="332" y2="330"/><line x1="319" y1="313" x2="336" y2="330"/><line x1="319" y1="309" x2="340" y2="330"/><line x1="323" y1="309" x2="344" y2="330"/><line x1="327" y1="309" x2="344" y2="326"/><line x1="331" y1="309" x2="344" y2="322"/><line x1="335" y1="309" x2="344" y2="318"/><line x1="339" y1="309" x2="344" y2="314"/><line x1="343" y1="309" x2="344" y2="310"/></g>
<text x="321" y="329" font-size="6" fill="#b0b030" text-anchor="start" font-weight="bold" font-style="normal" >2</text>
<text x="245" y="352" font-size="6" fill="#c8c840" text-anchor="start" font-weight="bold" font-style="normal" >1</text>
<path d="M91.0 335.1 L92.8 335.9 L94.6 335.5 L96.4 336.1 L98.2 335.8 L100.0 335.3 L101.8 334.1 L103.6 336.0 L105.4 336.5 L107.2 336.3 L109.0 335.4 L110.8 335.8 L112.6 336.1 L114.4 334.9 L116.2 336.2 L118.0 334.9 L119.8 335.5 L121.6 336.0 L123.4 339.5 L125.2 334.8 L127.0 334.9 L128.8 334.7 L130.6 336.5 L132.4 335.8 L134.2 335.6 L136.0 336.9 L137.8 337.9 L139.6 337.4 L141.4 335.4 L143.2 336.7 L145.0 337.6 L146.8 336.3 L148.6 337.5 L150.4 338.2 L152.2 336.9 L154.0 335.6 L155.8 336.9 L157.6 337.4 L159.4 335.8 L161.2 334.9 L163.0 334.8 L164.8 334.2 L166.6 334.7 L168.4 334.0 L170.2 335.9 L172.0 335.2 L173.8 334.9 L175.6 334.0 L177.4 334.4 L179.2 335.7 L181.0 335.2 L182.8 334.4 L184.6 336.1 L186.4 335.1 L188.2 336.1 L190.0 337.5 L191.8 338.2 L193.6 336.4 L195.4 335.1 L197.2 334.8 L199.0 335.6 L200.8 335.0 L202.6 334.6 L204.4 334.1 L206.2 335.1 L208.0 336.3 L209.8 336.6 L211.6 335.8 L213.4 334.6 L215.2 336.3 L217.0 336.7 L218.8 336.5 L220.6 336.3 L222.4 334.9 L224.2 334.6 L226.0 335.9 L227.8 335.6 L229.6 336.6 L231.4 337.4 L233.2 340.7 L235.0 336.6 L236.8 336.0 L238.6 336.6 L240.4 337.4 L242.2 337.1 L244.0 335.5 L245.8 336.4 L247.6 334.8 L249.4 334.4 L251.2 334.5 L253.0 333.8 L254.8 335.2 L256.6 336.6 L258.4 337.0 L260.2 336.3 L262.0 340.7 L263.8 336.7 L265.6 335.0 L267.4 335.8 L269.2 335.1 L271.0 336.4 L272.8 337.5 L274.6 335.6 L276.4 335.4 L278.2 336.7 L280.0 335.1 L281.8 335.3 L283.6 336.2 L285.4 337.1 L287.2 336.5 L289.0 336.8 L290.8 336.5 L292.6 335.2 L294.4 334.2 L296.2 335.9 L298.0 336.1 L299.8 336.5 L301.6 335.5 L303.4 335.3 L305.2 334.7 L307.0 334.2 L308.8 335.5 L310.6 335.0 L312.4 335.3 L314.2 335.2 L316.0 336.7 L317.8 336.6 L319.6 337.3 L321.4 337.5 L323.2 337.3 L325.0 336.6 L326.8 337.3 L328.6 336.1 L330.4 335.2 L332.2 334.9 L334.0 336.0 L335.8 334.8 L337.6 335.3 L339.4 334.6 L341.2 333.8 L343.0 335.5 L344.8 336.4 L346.6 336.4 L348.4 336.2 L350.2 335.2 L352.0 334.1 L353.8 335.4 L355.6 337.0 L357.4 335.8 L359.2 339.6 L361.0 336.4 L362.8 335.3 L364.6 336.6 L366.4 335.3 L368.2 336.6 L370.0 335.8 L371.8 336.9 L373.6 336.1 L375.4 335.7 L377.2 335.0 L379.0 335.7 L380.8 336.8 L382.6 337.6 L384.4 336.9 L386.2 335.5 L388.0 335.9 L389.8 336.5 L391.6 336.1 L393.4 334.8 L395.2 335.2 L397.0 341.2 L398.8 337.2 L400.6 336.4 L402.4 336.7 L404.2 336.2 L406.0 335.9 L407.8 336.9 L409.6 335.5 L411.4 335.6 L413.2 335.3 L415.0 334.4 L416.8 335.0 L418.6 336.7 L420.4 337.8 L422.2 337.3 L424.0 335.4 L425.8 336.0 L427.6 336.2 L429.4 336.1 L431.2 335.4 L433.0 339.9 L434.8 337.0 L436.6 335.3 L438.4 335.2 L440.2 335.3 L442.0 335.8 L443.8 334.7 L445.6 336.5 L447.4 335.1 L449.2 334.8 L451.0 335.4 L452.8 335.6 L454.6 335.0 L456.4 334.3 L458.2 335.3 L460.0 335.3 L461.8 335.5 L463.6 335.9 L465.4 336.7 L467.2 337.9 L469.0 335.8" fill="none" stroke="#8a4892" stroke-width="2.0" stroke-linejoin="round" opacity="0.7"/>
<path d="M91.0 335.1 L92.8 335.9 L94.6 335.5 L96.4 336.1 L98.2 335.8 L100.0 335.3 L101.8 334.1 L103.6 336.0 L105.4 336.5 L107.2 336.3 L109.0 335.4 L110.8 335.8 L112.6 336.1 L114.4 334.9 L116.2 336.2 L118.0 334.9 L119.8 335.5 L121.6 336.0 L123.4 339.5 L125.2 334.8 L127.0 334.9 L128.8 334.7 L130.6 336.5 L132.4 335.8 L134.2 335.6 L136.0 336.9 L137.8 337.9 L139.6 337.4 L141.4 335.4 L143.2 336.7 L145.0 337.6 L146.8 336.3 L148.6 337.5 L150.4 338.2 L152.2 336.9 L154.0 335.6 L155.8 336.9 L157.6 337.4 L159.4 335.8 L161.2 334.9 L163.0 334.8 L164.8 334.2 L166.6 334.7 L168.4 334.0 L170.2 335.9 L172.0 335.2 L173.8 334.9 L175.6 334.0 L177.4 334.4 L179.2 335.7 L181.0 335.2 L182.8 334.4 L184.6 336.1 L186.4 335.1 L188.2 336.1 L190.0 337.5 L191.8 338.2 L193.6 336.4 L195.4 335.1 L197.2 334.8 L199.0 335.6 L200.8 335.0 L202.6 334.6 L204.4 334.1 L206.2 335.1 L208.0 336.3 L209.8 336.6 L211.6 335.8 L213.4 334.6 L215.2 336.3 L217.0 336.7 L218.8 336.5 L220.6 336.3 L222.4 334.9 L224.2 334.6 L226.0 335.9 L227.8 335.6 L229.6 336.6 L231.4 337.4 L233.2 340.7 L235.0 336.6 L236.8 336.0 L238.6 336.6 L240.4 337.4 L242.2 337.1 L244.0 335.5 L245.8 336.4 L247.6 334.8 L249.4 334.4 L251.2 334.5 L253.0 333.8 L254.8 335.2 L256.6 336.6 L258.4 337.0 L260.2 336.3 L262.0 340.7 L263.8 336.7 L265.6 335.0 L267.4 335.8 L269.2 335.1 L271.0 336.4 L272.8 337.5 L274.6 335.6 L276.4 335.4 L278.2 336.7 L280.0 335.1 L281.8 335.3 L283.6 336.2 L285.4 337.1 L287.2 336.5 L289.0 336.8 L290.8 336.5 L292.6 335.2 L294.4 334.2 L296.2 335.9 L298.0 336.1 L299.8 336.5 L301.6 335.5 L303.4 335.3 L305.2 334.7 L307.0 334.2 L308.8 335.5 L310.6 335.0 L312.4 335.3 L314.2 335.2 L316.0 336.7 L317.8 336.6 L319.6 337.3 L321.4 337.5 L323.2 337.3 L325.0 336.6 L326.8 337.3 L328.6 336.1 L330.4 335.2 L332.2 334.9 L334.0 336.0 L335.8 334.8 L337.6 335.3 L339.4 334.6 L341.2 333.8 L343.0 335.5 L344.8 336.4 L346.6 336.4 L348.4 336.2 L350.2 335.2 L352.0 334.1 L353.8 335.4 L355.6 337.0 L357.4 335.8 L359.2 339.6 L361.0 336.4 L362.8 335.3 L364.6 336.6 L366.4 335.3 L368.2 336.6 L370.0 335.8 L371.8 336.9 L373.6 336.1 L375.4 335.7 L377.2 335.0 L379.0 335.7 L380.8 336.8 L382.6 337.6 L384.4 336.9 L386.2 335.5 L388.0 335.9 L389.8 336.5 L391.6 336.1 L393.4 334.8 L395.2 335.2 L397.0 341.2 L398.8 337.2 L400.6 336.4 L402.4 336.7 L404.2 336.2 L406.0 335.9 L407.8 336.9 L409.6 335.5 L411.4 335.6 L413.2 335.3 L415.0 334.4 L416.8 335.0 L418.6 336.7 L420.4 337.8 L422.2 337.3 L424.0 335.4 L425.8 336.0 L427.6 336.2 L429.4 336.1 L431.2 335.4 L433.0 339.9 L434.8 337.0 L436.6 335.3 L438.4 335.2 L440.2 335.3 L442.0 335.8 L443.8 334.7 L445.6 336.5 L447.4 335.1 L449.2 334.8 L451.0 335.4 L452.8 335.6 L454.6 335.0 L456.4 334.3 L458.2 335.3 L460.0 335.3 L461.8 335.5 L463.6 335.9 L465.4 336.7 L467.2 337.9 L469.0 335.8" fill="none" stroke="#c484cc" stroke-width="1.1" stroke-linejoin="round"/>
<path d="M90.0 364.2 L91.5 363.9 L93.0 364.9 L94.5 364.4 L96.0 364.6 L97.5 363.9 L99.0 364.6 L100.5 363.8 L102.0 364.0 L103.5 364.1 L105.0 363.7 L106.5 364.4 L108.0 364.0 L109.5 364.1 L111.0 364.5 L112.5 364.2 L114.0 364.8 L115.5 364.4 L117.0 364.7 L118.5 364.4 L120.0 364.8 L121.5 364.7 L123.0 363.9 L124.5 364.6 L126.0 364.1 L127.5 364.6 L129.0 364.5 L130.5 364.7 L132.0 363.8 L133.5 364.1 L135.0 364.6 L136.5 364.8 L138.0 364.6 L139.5 363.8 L141.0 364.4 L142.5 363.8 L144.0 364.4 L145.5 364.7 L147.0 363.8 L148.5 364.8 L150.0 364.5 L151.5 364.0 L153.0 363.9 L154.5 364.2 L156.0 364.7 L157.5 364.4 L159.0 363.8 L160.5 363.7 L162.0 363.8 L163.5 364.7 L165.0 363.9 L166.5 364.4 L168.0 364.0 L169.5 364.5 L171.0 364.2 L172.5 363.9 L174.0 364.8 L175.5 364.3 L177.0 364.5 L178.5 364.7 L180.0 364.8 L181.5 363.7 L183.0 364.1 L184.5 363.9 L186.0 364.3 L187.5 364.7 L189.0 364.7 L190.5 363.7 L192.0 363.9 L193.5 364.7 L195.0 364.5 L196.5 364.2 L198.0 364.3 L199.5 363.9 L201.0 364.7 L202.5 364.2 L204.0 364.7 L205.5 364.4 L207.0 363.8 L208.5 364.1 L210.0 364.0 L211.5 364.8 L213.0 364.4 L214.5 363.8 L216.0 363.9 L217.5 364.1 L219.0 364.3 L220.5 364.4 L222.0 364.2 L223.5 364.1 L225.0 363.7 L226.5 364.4 L228.0 364.1 L229.5 363.7 L231.0 364.3" fill="none" stroke="#d8a800" stroke-width="4.6" stroke-linecap="round"/>
<path d="M90.0 364.6 L91.5 363.5 L93.0 363.6 L94.5 364.2 L96.0 363.7 L97.5 363.7 L99.0 364.0 L100.5 363.7 L102.0 364.1 L103.5 364.0 L105.0 364.5 L106.5 364.6 L108.0 363.4 L109.5 364.1 L111.0 364.3 L112.5 364.4 L114.0 364.3 L115.5 364.2 L117.0 364.2 L118.5 363.8 L120.0 363.7 L121.5 364.4 L123.0 364.4 L124.5 364.5 L126.0 364.2 L127.5 363.8 L129.0 364.3 L130.5 364.3 L132.0 364.0 L133.5 364.2 L135.0 363.8 L136.5 364.1 L138.0 363.9 L139.5 363.5 L141.0 363.8 L142.5 363.8 L144.0 364.6 L145.5 364.0 L147.0 363.8 L148.5 363.7 L150.0 363.7 L151.5 363.8 L153.0 363.6 L154.5 363.4 L156.0 364.4 L157.5 363.9 L159.0 363.9 L160.5 364.1 L162.0 363.8 L163.5 363.6 L165.0 363.5 L166.5 363.8 L168.0 363.8 L169.5 364.3 L171.0 364.1 L172.5 364.5 L174.0 363.8 L175.5 364.5 L177.0 364.1 L178.5 363.5 L180.0 363.6 L181.5 364.1 L183.0 364.6 L184.5 363.8 L186.0 364.3 L187.5 363.9 L189.0 364.4 L190.5 363.5 L192.0 364.0 L193.5 364.5 L195.0 363.7 L196.5 363.7 L198.0 363.4 L199.5 363.6 L201.0 363.7 L202.5 364.2 L204.0 363.7 L205.5 363.9 L207.0 363.6 L208.5 364.1 L210.0 364.4 L211.5 364.2 L213.0 363.6 L214.5 364.3 L216.0 364.6 L217.5 364.1 L219.0 363.5 L220.5 364.4 L222.0 364.5 L223.5 363.8 L225.0 363.6 L226.5 363.6 L228.0 364.0 L229.5 364.5 L231.0 364.2" fill="none" stroke="#ffe030" stroke-width="2.6" />
<path d="M222.0 364.2 L223.2 363.9 L224.4 363.9 L225.6 363.8 L226.8 363.1 L228.0 362.0 L229.2 360.8 L230.4 359.1 L231.6 357.2 L232.8 355.4 L234.0 353.1 L235.2 351.2 L236.4 348.7 L237.6 346.4 L238.8 344.0 L240.0 341.3 L241.2 339.0 L242.4 336.4 L243.6 334.6 L244.8 332.2 L246.0 330.4 L247.2 328.1 L248.4 326.8 L249.6 325.5 L250.8 324.2 L252.0 323.3 L253.2 322.9 L254.4 322.8 L255.6 323.1 L256.8 322.6 L258.0 322.9 L259.2 322.5 L260.4 322.5 L261.6 322.4 L262.8 322.2 L264.0 322.2 L265.2 322.0 L266.4 321.8 L267.6 321.9 L268.8 321.5 L270.0 321.6 L271.2 321.5 L272.4 321.4 L273.6 321.0 L274.8 321.2 L276.0 321.1 L277.2 320.8 L278.4 320.5 L279.6 320.6 L280.8 320.6 L282.0 320.1 L283.2 319.9 L284.4 320.0 L285.6 320.0 L286.8 319.8 L288.0 319.3 L289.2 319.2 L290.4 318.3 L291.6 318.1 L292.8 317.1 L294.0 316.4 L295.2 315.8 L296.4 315.0 L297.6 314.4 L298.8 313.5 L300.0 312.4 L301.2 312.0 L302.4 310.9 L303.6 309.9 L304.8 309.0 L306.0 308.3 L307.2 307.5 L308.4 306.1 L309.6 305.1 L310.8 304.5 L312.0 303.2 L313.2 302.6 L314.4 301.4 L315.6 300.5 L316.8 299.4 L318.0 298.7 L319.2 297.6 L320.4 296.6 L321.6 296.1 L322.8 294.8 L324.0 294.4 L325.2 293.3 L326.4 292.9 L327.6 292.1 L328.8 291.7 L330.0 290.7 L331.2 290.5 L332.4 290.0 L333.6 289.9 L334.8 289.6 L336.0 289.2 L337.2 288.9 L338.4 288.9 L339.6 288.9 L340.8 288.9 L342.0 288.7 L343.2 288.5 L344.4 288.7 L345.6 288.5 L346.8 288.2 L348.0 288.4 L349.2 287.9 L350.4 288.0 L351.6 287.7" fill="none" stroke="#c89800" stroke-width="2.2" stroke-linejoin="round" opacity="0.55"/>
<path d="M222.0 364.2 L223.2 363.9 L224.4 363.9 L225.6 363.8 L226.8 363.1 L228.0 362.0 L229.2 360.8 L230.4 359.1 L231.6 357.2 L232.8 355.4 L234.0 353.1 L235.2 351.2 L236.4 348.7 L237.6 346.4 L238.8 344.0 L240.0 341.3 L241.2 339.0 L242.4 336.4 L243.6 334.6 L244.8 332.2 L246.0 330.4 L247.2 328.1 L248.4 326.8 L249.6 325.5 L250.8 324.2 L252.0 323.3 L253.2 322.9 L254.4 322.8 L255.6 323.1 L256.8 322.6 L258.0 322.9 L259.2 322.5 L260.4 322.5 L261.6 322.4 L262.8 322.2 L264.0 322.2 L265.2 322.0 L266.4 321.8 L267.6 321.9 L268.8 321.5 L270.0 321.6 L271.2 321.5 L272.4 321.4 L273.6 321.0 L274.8 321.2 L276.0 321.1 L277.2 320.8 L278.4 320.5 L279.6 320.6 L280.8 320.6 L282.0 320.1 L283.2 319.9 L284.4 320.0 L285.6 320.0 L286.8 319.8 L288.0 319.3 L289.2 319.2 L290.4 318.3 L291.6 318.1 L292.8 317.1 L294.0 316.4 L295.2 315.8 L296.4 315.0 L297.6 314.4 L298.8 313.5 L300.0 312.4 L301.2 312.0 L302.4 310.9 L303.6 309.9 L304.8 309.0 L306.0 308.3 L307.2 307.5 L308.4 306.1 L309.6 305.1 L310.8 304.5 L312.0 303.2 L313.2 302.6 L314.4 301.4 L315.6 300.5 L316.8 299.4 L318.0 298.7 L319.2 297.6 L320.4 296.6 L321.6 296.1 L322.8 294.8 L324.0 294.4 L325.2 293.3 L326.4 292.9 L327.6 292.1 L328.8 291.7 L330.0 290.7 L331.2 290.5 L332.4 290.0 L333.6 289.9 L334.8 289.6 L336.0 289.2 L337.2 288.9 L338.4 288.9 L339.6 288.9 L340.8 288.9 L342.0 288.7 L343.2 288.5 L344.4 288.7 L345.6 288.5 L346.8 288.2 L348.0 288.4 L349.2 287.9 L350.4 288.0 L351.6 287.7" fill="none" stroke="#ffe238" stroke-width="1.2" stroke-linejoin="round"/>
<path d="M222.0 364.2 L223.2 364.2 L224.4 363.9 L225.6 364.1 L226.8 364.2 L228.0 363.7 L229.2 363.2 L230.4 362.4 L231.6 361.4 L232.8 359.6 L234.0 358.1 L235.2 356.2 L236.4 354.1 L237.6 351.9 L238.8 349.8 L240.0 347.0 L241.2 344.9 L242.4 342.2 L243.6 340.0 L244.8 337.6 L246.0 335.0 L247.2 333.1 L248.4 331.1 L249.6 328.9 L250.8 327.0 L252.0 325.6 L253.2 324.9 L254.4 323.5 L255.6 323.3 L256.8 322.6 L258.0 322.8 L259.2 322.4 L260.4 322.3 L261.6 322.4 L262.8 322.0 L264.0 322.0 L265.2 322.2 L266.4 322.0 L267.6 321.9 L268.8 321.9 L270.0 321.3 L271.2 321.2 L272.4 321.4 L273.6 321.2 L274.8 320.8 L276.0 320.9 L277.2 320.6 L278.4 320.6 L279.6 320.3 L280.8 320.2 L282.0 320.5 L283.2 320.0 L284.4 320.0 L285.6 319.3 L286.8 319.0 L288.0 318.3 L289.2 317.9 L290.4 317.2 L291.6 316.7 L292.8 315.7 L294.0 315.2 L295.2 314.2 L296.4 313.2 L297.6 312.4 L298.8 311.5 L300.0 310.7 L301.2 309.5 L302.4 308.5 L303.6 308.0 L304.8 307.0 L306.0 305.9 L307.2 304.7 L308.4 303.7 L309.6 302.7 L310.8 301.7 L312.0 300.7 L313.2 299.9 L314.4 298.9 L315.6 298.1 L316.8 297.1 L318.0 296.0 L319.2 295.5 L320.4 294.7 L321.6 293.9 L322.8 293.2 L324.0 292.5 L325.2 292.1 L326.4 291.4 L327.6 290.8 L328.8 290.2 L330.0 289.8 L331.2 289.5 L332.4 289.5 L333.6 289.1 L334.8 289.0 L336.0 289.0 L337.2 288.8 L338.4 289.2 L339.6 288.8 L340.8 289.0 L342.0 289.0 L343.2 288.5 L344.4 288.6 L345.6 288.4 L346.8 288.2 L348.0 288.0 L349.2 287.9 L350.4 288.1 L351.6 288.0" fill="none" stroke="#c89800" stroke-width="2.2" stroke-linejoin="round" opacity="0.55"/>
<path d="M222.0 364.2 L223.2 364.2 L224.4 363.9 L225.6 364.1 L226.8 364.2 L228.0 363.7 L229.2 363.2 L230.4 362.4 L231.6 361.4 L232.8 359.6 L234.0 358.1 L235.2 356.2 L236.4 354.1 L237.6 351.9 L238.8 349.8 L240.0 347.0 L241.2 344.9 L242.4 342.2 L243.6 340.0 L244.8 337.6 L246.0 335.0 L247.2 333.1 L248.4 331.1 L249.6 328.9 L250.8 327.0 L252.0 325.6 L253.2 324.9 L254.4 323.5 L255.6 323.3 L256.8 322.6 L258.0 322.8 L259.2 322.4 L260.4 322.3 L261.6 322.4 L262.8 322.0 L264.0 322.0 L265.2 322.2 L266.4 322.0 L267.6 321.9 L268.8 321.9 L270.0 321.3 L271.2 321.2 L272.4 321.4 L273.6 321.2 L274.8 320.8 L276.0 320.9 L277.2 320.6 L278.4 320.6 L279.6 320.3 L280.8 320.2 L282.0 320.5 L283.2 320.0 L284.4 320.0 L285.6 319.3 L286.8 319.0 L288.0 318.3 L289.2 317.9 L290.4 317.2 L291.6 316.7 L292.8 315.7 L294.0 315.2 L295.2 314.2 L296.4 313.2 L297.6 312.4 L298.8 311.5 L300.0 310.7 L301.2 309.5 L302.4 308.5 L303.6 308.0 L304.8 307.0 L306.0 305.9 L307.2 304.7 L308.4 303.7 L309.6 302.7 L310.8 301.7 L312.0 300.7 L313.2 299.9 L314.4 298.9 L315.6 298.1 L316.8 297.1 L318.0 296.0 L319.2 295.5 L320.4 294.7 L321.6 293.9 L322.8 293.2 L324.0 292.5 L325.2 292.1 L326.4 291.4 L327.6 290.8 L328.8 290.2 L330.0 289.8 L331.2 289.5 L332.4 289.5 L333.6 289.1 L334.8 289.0 L336.0 289.0 L337.2 288.8 L338.4 289.2 L339.6 288.8 L340.8 289.0 L342.0 289.0 L343.2 288.5 L344.4 288.6 L345.6 288.4 L346.8 288.2 L348.0 288.0 L349.2 287.9 L350.4 288.1 L351.6 288.0" fill="none" stroke="#ffe238" stroke-width="1.2" stroke-linejoin="round"/>
<path d="M222.0 364.2 L223.2 363.8 L224.4 364.1 L225.6 363.9 L226.8 364.1 L228.0 364.0 L229.2 363.9 L230.4 364.1 L231.6 363.2 L232.8 362.8 L234.0 361.8 L235.2 360.3 L236.4 358.7 L237.6 357.1 L238.8 354.7 L240.0 352.7 L241.2 350.5 L242.4 347.9 L243.6 345.7 L244.8 343.0 L246.0 340.7 L247.2 338.3 L248.4 336.0 L249.6 333.5 L250.8 331.6 L252.0 329.6 L253.2 327.7 L254.4 326.3 L255.6 324.8 L256.8 324.0 L258.0 323.0 L259.2 322.7 L260.4 322.5 L261.6 322.3 L262.8 322.1 L264.0 321.9 L265.2 322.2 L266.4 321.9 L267.6 321.8 L268.8 321.6 L270.0 321.7 L271.2 321.2 L272.4 321.1 L273.6 321.3 L274.8 321.0 L276.0 321.0 L277.2 320.9 L278.4 320.9 L279.6 320.7 L280.8 320.2 L282.0 320.2 L283.2 320.3 L284.4 320.2 L285.6 319.8 L286.8 319.6 L288.0 319.6 L289.2 319.4 L290.4 319.4 L291.6 319.5 L292.8 319.2 L294.0 318.9 L295.2 318.3 L296.4 318.1 L297.6 317.9 L298.8 317.1 L300.0 316.4 L301.2 315.9 L302.4 315.4 L303.6 314.7 L304.8 313.7 L306.0 313.2 L307.2 312.2 L308.4 311.5 L309.6 310.5 L310.8 309.6 L312.0 308.7 L313.2 307.8 L314.4 306.6 L315.6 305.8 L316.8 305.0 L318.0 303.7 L319.2 302.8 L320.4 302.1 L321.6 300.9 L322.8 300.0 L324.0 299.0 L325.2 298.3 L326.4 297.1 L327.6 296.5 L328.8 295.7 L330.0 294.6 L331.2 293.9 L332.4 293.4 L333.6 292.6 L334.8 291.8 L336.0 291.1 L337.2 290.7 L338.4 290.2 L339.6 290.0 L340.8 289.4 L342.0 289.0 L343.2 288.9 L344.4 288.7 L345.6 288.3 L346.8 288.2 L348.0 288.2 L349.2 288.3 L350.4 287.8 L351.6 288.1" fill="none" stroke="#c89800" stroke-width="2.2" stroke-linejoin="round" opacity="0.55"/>
<path d="M222.0 364.2 L223.2 363.8 L224.4 364.1 L225.6 363.9 L226.8 364.1 L228.0 364.0 L229.2 363.9 L230.4 364.1 L231.6 363.2 L232.8 362.8 L234.0 361.8 L235.2 360.3 L236.4 358.7 L237.6 357.1 L238.8 354.7 L240.0 352.7 L241.2 350.5 L242.4 347.9 L243.6 345.7 L244.8 343.0 L246.0 340.7 L247.2 338.3 L248.4 336.0 L249.6 333.5 L250.8 331.6 L252.0 329.6 L253.2 327.7 L254.4 326.3 L255.6 324.8 L256.8 324.0 L258.0 323.0 L259.2 322.7 L260.4 322.5 L261.6 322.3 L262.8 322.1 L264.0 321.9 L265.2 322.2 L266.4 321.9 L267.6 321.8 L268.8 321.6 L270.0 321.7 L271.2 321.2 L272.4 321.1 L273.6 321.3 L274.8 321.0 L276.0 321.0 L277.2 320.9 L278.4 320.9 L279.6 320.7 L280.8 320.2 L282.0 320.2 L283.2 320.3 L284.4 320.2 L285.6 319.8 L286.8 319.6 L288.0 319.6 L289.2 319.4 L290.4 319.4 L291.6 319.5 L292.8 319.2 L294.0 318.9 L295.2 318.3 L296.4 318.1 L297.6 317.9 L298.8 317.1 L300.0 316.4 L301.2 315.9 L302.4 315.4 L303.6 314.7 L304.8 313.7 L306.0 313.2 L307.2 312.2 L308.4 311.5 L309.6 310.5 L310.8 309.6 L312.0 308.7 L313.2 307.8 L314.4 306.6 L315.6 305.8 L316.8 305.0 L318.0 303.7 L319.2 302.8 L320.4 302.1 L321.6 300.9 L322.8 300.0 L324.0 299.0 L325.2 298.3 L326.4 297.1 L327.6 296.5 L328.8 295.7 L330.0 294.6 L331.2 293.9 L332.4 293.4 L333.6 292.6 L334.8 291.8 L336.0 291.1 L337.2 290.7 L338.4 290.2 L339.6 290.0 L340.8 289.4 L342.0 289.0 L343.2 288.9 L344.4 288.7 L345.6 288.3 L346.8 288.2 L348.0 288.2 L349.2 288.3 L350.4 287.8 L351.6 288.1" fill="none" stroke="#ffe238" stroke-width="1.2" stroke-linejoin="round"/>
<path d="M222.0 364.1 L223.2 363.9 L224.4 364.1 L225.6 363.9 L226.8 363.8 L228.0 364.1 L229.2 363.9 L230.4 364.0 L231.6 364.0 L232.8 364.2 L234.0 363.8 L235.2 362.8 L236.4 362.1 L237.6 360.7 L238.8 359.2 L240.0 357.6 L241.2 355.4 L242.4 353.4 L243.6 351.3 L244.8 348.7 L246.0 346.4 L247.2 343.9 L248.4 341.6 L249.6 339.1 L250.8 336.8 L252.0 334.3 L253.2 332.0 L254.4 330.3 L255.6 328.3 L256.8 326.7 L258.0 325.2 L259.2 323.7 L260.4 322.8 L261.6 322.2 L262.8 322.4 L264.0 321.9 L265.2 321.8 L266.4 322.0 L267.6 321.8 L268.8 321.4 L270.0 321.6 L271.2 321.5 L272.4 321.3 L273.6 320.9 L274.8 321.1 L276.0 320.9 L277.2 320.8 L278.4 320.9 L279.6 320.7 L280.8 320.6 L282.0 320.1 L283.2 320.1 L284.4 320.1 L285.6 319.7 L286.8 320.1 L288.0 319.6 L289.2 319.4 L290.4 319.1 L291.6 318.7 L292.8 318.6 L294.0 317.9 L295.2 317.4 L296.4 316.7 L297.6 315.8 L298.8 315.2 L300.0 314.7 L301.2 313.9 L302.4 313.2 L303.6 312.1 L304.8 311.2 L306.0 310.3 L307.2 309.6 L308.4 308.6 L309.6 307.7 L310.8 306.8 L312.0 305.8 L313.2 304.7 L314.4 304.0 L315.6 302.7 L316.8 302.1 L318.0 300.9 L319.2 299.7 L320.4 298.9 L321.6 298.1 L322.8 297.1 L324.0 296.3 L325.2 295.4 L326.4 294.5 L327.6 294.0 L328.8 293.0 L330.0 292.5 L331.2 292.0 L332.4 291.3 L333.6 290.7 L334.8 290.5 L336.0 289.8 L337.2 289.7 L338.4 289.1 L339.6 289.1 L340.8 289.0 L342.0 288.6 L343.2 288.8 L344.4 288.3 L345.6 288.5 L346.8 288.1 L348.0 288.4 L349.2 288.1 L350.4 288.1 L351.6 287.9" fill="none" stroke="#c89800" stroke-width="2.2" stroke-linejoin="round" opacity="0.55"/>
<path d="M222.0 364.1 L223.2 363.9 L224.4 364.1 L225.6 363.9 L226.8 363.8 L228.0 364.1 L229.2 363.9 L230.4 364.0 L231.6 364.0 L232.8 364.2 L234.0 363.8 L235.2 362.8 L236.4 362.1 L237.6 360.7 L238.8 359.2 L240.0 357.6 L241.2 355.4 L242.4 353.4 L243.6 351.3 L244.8 348.7 L246.0 346.4 L247.2 343.9 L248.4 341.6 L249.6 339.1 L250.8 336.8 L252.0 334.3 L253.2 332.0 L254.4 330.3 L255.6 328.3 L256.8 326.7 L258.0 325.2 L259.2 323.7 L260.4 322.8 L261.6 322.2 L262.8 322.4 L264.0 321.9 L265.2 321.8 L266.4 322.0 L267.6 321.8 L268.8 321.4 L270.0 321.6 L271.2 321.5 L272.4 321.3 L273.6 320.9 L274.8 321.1 L276.0 320.9 L277.2 320.8 L278.4 320.9 L279.6 320.7 L280.8 320.6 L282.0 320.1 L283.2 320.1 L284.4 320.1 L285.6 319.7 L286.8 320.1 L288.0 319.6 L289.2 319.4 L290.4 319.1 L291.6 318.7 L292.8 318.6 L294.0 317.9 L295.2 317.4 L296.4 316.7 L297.6 315.8 L298.8 315.2 L300.0 314.7 L301.2 313.9 L302.4 313.2 L303.6 312.1 L304.8 311.2 L306.0 310.3 L307.2 309.6 L308.4 308.6 L309.6 307.7 L310.8 306.8 L312.0 305.8 L313.2 304.7 L314.4 304.0 L315.6 302.7 L316.8 302.1 L318.0 300.9 L319.2 299.7 L320.4 298.9 L321.6 298.1 L322.8 297.1 L324.0 296.3 L325.2 295.4 L326.4 294.5 L327.6 294.0 L328.8 293.0 L330.0 292.5 L331.2 292.0 L332.4 291.3 L333.6 290.7 L334.8 290.5 L336.0 289.8 L337.2 289.7 L338.4 289.1 L339.6 289.1 L340.8 289.0 L342.0 288.6 L343.2 288.8 L344.4 288.3 L345.6 288.5 L346.8 288.1 L348.0 288.4 L349.2 288.1 L350.4 288.1 L351.6 287.9" fill="none" stroke="#ffe238" stroke-width="1.2" stroke-linejoin="round"/>
<path d="M222.0 364.1 L223.2 364.1 L224.4 363.9 L225.6 363.9 L226.8 364.2 L228.0 363.8 L229.2 364.2 L230.4 363.9 L231.6 363.8 L232.8 363.8 L234.0 364.1 L235.2 364.2 L236.4 363.8 L237.6 363.3 L238.8 362.2 L240.0 361.4 L241.2 359.8 L242.4 357.9 L243.6 355.9 L244.8 354.2 L246.0 351.7 L247.2 349.7 L248.4 347.1 L249.6 344.6 L250.8 342.3 L252.0 339.7 L253.2 337.5 L254.4 334.9 L255.6 333.1 L256.8 330.6 L258.0 328.8 L259.2 326.7 L260.4 325.4 L261.6 324.2 L262.8 322.9 L264.0 322.1 L265.2 321.9 L266.4 321.9 L267.6 321.6 L268.8 321.6 L270.0 321.3 L271.2 321.4 L272.4 321.4 L273.6 321.1 L274.8 321.1 L276.0 320.7 L277.2 320.9 L278.4 320.5 L279.6 320.8 L280.8 320.7 L282.0 320.5 L283.2 320.2 L284.4 320.0 L285.6 319.9 L286.8 319.9 L288.0 319.7 L289.2 319.8 L290.4 319.3 L291.6 319.3 L292.8 319.4 L294.0 319.1 L295.2 319.0 L296.4 318.7 L297.6 318.5 L298.8 318.3 L300.0 318.3 L301.2 318.0 L302.4 317.4 L303.6 317.3 L304.8 316.4 L306.0 316.1 L307.2 315.7 L308.4 314.8 L309.6 314.4 L310.8 313.5 L312.0 312.4 L313.2 311.7 L314.4 310.9 L315.6 309.9 L316.8 309.2 L318.0 308.0 L319.2 307.4 L320.4 306.2 L321.6 305.1 L322.8 304.4 L324.0 303.1 L325.2 302.4 L326.4 301.5 L327.6 300.5 L328.8 299.4 L330.0 298.3 L331.2 297.6 L332.4 296.5 L333.6 295.9 L334.8 294.8 L336.0 294.3 L337.2 293.4 L338.4 292.7 L339.6 292.2 L340.8 291.3 L342.0 290.6 L343.2 290.4 L344.4 289.5 L345.6 289.3 L346.8 288.9 L348.0 288.4 L349.2 288.0 L350.4 287.8 L351.6 288.0" fill="none" stroke="#c89800" stroke-width="2.2" stroke-linejoin="round" opacity="0.55"/>
<path d="M222.0 364.1 L223.2 364.1 L224.4 363.9 L225.6 363.9 L226.8 364.2 L228.0 363.8 L229.2 364.2 L230.4 363.9 L231.6 363.8 L232.8 363.8 L234.0 364.1 L235.2 364.2 L236.4 363.8 L237.6 363.3 L238.8 362.2 L240.0 361.4 L241.2 359.8 L242.4 357.9 L243.6 355.9 L244.8 354.2 L246.0 351.7 L247.2 349.7 L248.4 347.1 L249.6 344.6 L250.8 342.3 L252.0 339.7 L253.2 337.5 L254.4 334.9 L255.6 333.1 L256.8 330.6 L258.0 328.8 L259.2 326.7 L260.4 325.4 L261.6 324.2 L262.8 322.9 L264.0 322.1 L265.2 321.9 L266.4 321.9 L267.6 321.6 L268.8 321.6 L270.0 321.3 L271.2 321.4 L272.4 321.4 L273.6 321.1 L274.8 321.1 L276.0 320.7 L277.2 320.9 L278.4 320.5 L279.6 320.8 L280.8 320.7 L282.0 320.5 L283.2 320.2 L284.4 320.0 L285.6 319.9 L286.8 319.9 L288.0 319.7 L289.2 319.8 L290.4 319.3 L291.6 319.3 L292.8 319.4 L294.0 319.1 L295.2 319.0 L296.4 318.7 L297.6 318.5 L298.8 318.3 L300.0 318.3 L301.2 318.0 L302.4 317.4 L303.6 317.3 L304.8 316.4 L306.0 316.1 L307.2 315.7 L308.4 314.8 L309.6 314.4 L310.8 313.5 L312.0 312.4 L313.2 311.7 L314.4 310.9 L315.6 309.9 L316.8 309.2 L318.0 308.0 L319.2 307.4 L320.4 306.2 L321.6 305.1 L322.8 304.4 L324.0 303.1 L325.2 302.4 L326.4 301.5 L327.6 300.5 L328.8 299.4 L330.0 298.3 L331.2 297.6 L332.4 296.5 L333.6 295.9 L334.8 294.8 L336.0 294.3 L337.2 293.4 L338.4 292.7 L339.6 292.2 L340.8 291.3 L342.0 290.6 L343.2 290.4 L344.4 289.5 L345.6 289.3 L346.8 288.9 L348.0 288.4 L349.2 288.0 L350.4 287.8 L351.6 288.0" fill="none" stroke="#ffe238" stroke-width="1.2" stroke-linejoin="round"/>
<path d="M222.0 363.8 L223.2 364.0 L224.4 364.0 L225.6 363.8 L226.8 364.0 L228.0 363.8 L229.2 364.0 L230.4 364.0 L231.6 363.9 L232.8 363.8 L234.0 364.0 L235.2 363.9 L236.4 363.8 L237.6 363.9 L238.8 364.1 L240.0 363.5 L241.2 362.9 L242.4 361.4 L243.6 360.5 L244.8 358.6 L246.0 357.0 L247.2 354.8 L248.4 352.7 L249.6 350.2 L250.8 348.1 L252.0 345.4 L253.2 343.0 L254.4 340.4 L255.6 338.1 L256.8 335.7 L258.0 333.2 L259.2 331.3 L260.4 328.8 L261.6 327.2 L262.8 325.4 L264.0 324.1 L265.2 323.1 L266.4 322.3 L267.6 321.5 L268.8 321.5 L270.0 321.5 L271.2 321.6 L272.4 321.0 L273.6 321.2 L274.8 321.1 L276.0 321.1 L277.2 320.7 L278.4 320.8 L279.6 320.5 L280.8 320.6 L282.0 320.1 L283.2 320.4 L284.4 320.0 L285.6 319.9 L286.8 319.6 L288.0 319.6 L289.2 319.7 L290.4 319.5 L291.6 319.2 L292.8 319.1 L294.0 318.9 L295.2 318.7 L296.4 318.5 L297.6 318.2 L298.8 318.1 L300.0 317.6 L301.2 317.0 L302.4 316.4 L303.6 315.8 L304.8 315.3 L306.0 314.7 L307.2 313.9 L308.4 313.1 L309.6 312.0 L310.8 311.4 L312.0 310.7 L313.2 309.7 L314.4 308.5 L315.6 307.8 L316.8 306.7 L318.0 305.6 L319.2 305.0 L320.4 303.9 L321.6 303.0 L322.8 301.7 L324.0 301.1 L325.2 300.2 L326.4 299.2 L327.6 298.2 L328.8 297.3 L330.0 296.4 L331.2 295.5 L332.4 294.6 L333.6 294.0 L334.8 293.3 L336.0 292.6 L337.2 291.7 L338.4 291.5 L339.6 290.7 L340.8 290.4 L342.0 289.5 L343.2 289.4 L344.4 289.0 L345.6 288.4 L346.8 288.5 L348.0 288.1 L349.2 287.9 L350.4 287.9 L351.6 287.7" fill="none" stroke="#c89800" stroke-width="2.2" stroke-linejoin="round" opacity="0.55"/>
<path d="M222.0 363.8 L223.2 364.0 L224.4 364.0 L225.6 363.8 L226.8 364.0 L228.0 363.8 L229.2 364.0 L230.4 364.0 L231.6 363.9 L232.8 363.8 L234.0 364.0 L235.2 363.9 L236.4 363.8 L237.6 363.9 L238.8 364.1 L240.0 363.5 L241.2 362.9 L242.4 361.4 L243.6 360.5 L244.8 358.6 L246.0 357.0 L247.2 354.8 L248.4 352.7 L249.6 350.2 L250.8 348.1 L252.0 345.4 L253.2 343.0 L254.4 340.4 L255.6 338.1 L256.8 335.7 L258.0 333.2 L259.2 331.3 L260.4 328.8 L261.6 327.2 L262.8 325.4 L264.0 324.1 L265.2 323.1 L266.4 322.3 L267.6 321.5 L268.8 321.5 L270.0 321.5 L271.2 321.6 L272.4 321.0 L273.6 321.2 L274.8 321.1 L276.0 321.1 L277.2 320.7 L278.4 320.8 L279.6 320.5 L280.8 320.6 L282.0 320.1 L283.2 320.4 L284.4 320.0 L285.6 319.9 L286.8 319.6 L288.0 319.6 L289.2 319.7 L290.4 319.5 L291.6 319.2 L292.8 319.1 L294.0 318.9 L295.2 318.7 L296.4 318.5 L297.6 318.2 L298.8 318.1 L300.0 317.6 L301.2 317.0 L302.4 316.4 L303.6 315.8 L304.8 315.3 L306.0 314.7 L307.2 313.9 L308.4 313.1 L309.6 312.0 L310.8 311.4 L312.0 310.7 L313.2 309.7 L314.4 308.5 L315.6 307.8 L316.8 306.7 L318.0 305.6 L319.2 305.0 L320.4 303.9 L321.6 303.0 L322.8 301.7 L324.0 301.1 L325.2 300.2 L326.4 299.2 L327.6 298.2 L328.8 297.3 L330.0 296.4 L331.2 295.5 L332.4 294.6 L333.6 294.0 L334.8 293.3 L336.0 292.6 L337.2 291.7 L338.4 291.5 L339.6 290.7 L340.8 290.4 L342.0 289.5 L343.2 289.4 L344.4 289.0 L345.6 288.4 L346.8 288.5 L348.0 288.1 L349.2 287.9 L350.4 287.9 L351.6 287.7" fill="none" stroke="#ffe238" stroke-width="1.2" stroke-linejoin="round"/>
<path d="M222.0 364.0 L223.2 364.2 L224.4 364.1 L225.6 364.1 L226.8 363.9 L228.0 364.1 L229.2 364.1 L230.4 364.1 L231.6 364.2 L232.8 363.7 L234.0 362.8 L235.2 361.6 L236.4 360.6 L237.6 359.1 L238.8 357.0 L240.0 355.2 L241.2 353.2 L242.4 350.9 L243.6 348.1 L244.8 345.9 L246.0 343.3 L247.2 340.9 L248.4 338.8 L249.6 336.2 L250.8 334.0 L252.0 331.8 L253.2 329.8 L254.4 327.9 L255.6 326.4 L256.8 325.2 L258.0 323.9 L259.2 322.9 L260.4 322.3 L261.6 322.2 L262.8 322.3 L264.0 322.1 L265.2 322.1 L266.4 322.0 L267.6 321.6 L268.8 321.7 L270.0 321.3 L271.2 321.5 L272.4 321.1 L273.6 321.0 L274.8 321.2 L276.0 320.8 L277.2 320.6 L278.4 320.9 L279.6 320.6 L280.8 320.6 L282.0 320.2 L283.2 320.2 L284.4 320.3 L285.6 319.9 L286.8 320.1 L288.0 319.5 L289.2 319.7 L290.4 319.2 L291.6 319.2 L292.8 318.6 L294.0 318.2 L295.2 318.1 L296.4 317.3 L297.6 316.9 L298.8 315.9 L300.0 315.3 L301.2 314.5 L302.4 314.0 L303.6 313.4 L304.8 312.4 L306.0 311.5 L307.2 310.9 L308.4 310.0 L309.6 309.0 L310.8 307.7 L312.0 307.1 L313.2 306.0 L314.4 305.3 L315.6 304.0 L316.8 303.2 L318.0 302.2 L319.2 301.1 L320.4 300.2 L321.6 299.3 L322.8 298.5 L324.0 297.4 L325.2 296.4 L326.4 295.9 L327.6 294.6 L328.8 294.2 L330.0 293.4 L331.2 292.6 L332.4 291.9 L333.6 291.5 L334.8 291.0 L336.0 290.5 L337.2 290.1 L338.4 289.4 L339.6 289.2 L340.8 288.9 L342.0 289.0 L343.2 288.9 L344.4 288.4 L345.6 288.5 L346.8 288.3 L348.0 288.0 L349.2 288.0 L350.4 288.1 L351.6 287.9" fill="none" stroke="#c89800" stroke-width="2.2" stroke-linejoin="round" opacity="0.55"/>
<path d="M222.0 364.0 L223.2 364.2 L224.4 364.1 L225.6 364.1 L226.8 363.9 L228.0 364.1 L229.2 364.1 L230.4 364.1 L231.6 364.2 L232.8 363.7 L234.0 362.8 L235.2 361.6 L236.4 360.6 L237.6 359.1 L238.8 357.0 L240.0 355.2 L241.2 353.2 L242.4 350.9 L243.6 348.1 L244.8 345.9 L246.0 343.3 L247.2 340.9 L248.4 338.8 L249.6 336.2 L250.8 334.0 L252.0 331.8 L253.2 329.8 L254.4 327.9 L255.6 326.4 L256.8 325.2 L258.0 323.9 L259.2 322.9 L260.4 322.3 L261.6 322.2 L262.8 322.3 L264.0 322.1 L265.2 322.1 L266.4 322.0 L267.6 321.6 L268.8 321.7 L270.0 321.3 L271.2 321.5 L272.4 321.1 L273.6 321.0 L274.8 321.2 L276.0 320.8 L277.2 320.6 L278.4 320.9 L279.6 320.6 L280.8 320.6 L282.0 320.2 L283.2 320.2 L284.4 320.3 L285.6 319.9 L286.8 320.1 L288.0 319.5 L289.2 319.7 L290.4 319.2 L291.6 319.2 L292.8 318.6 L294.0 318.2 L295.2 318.1 L296.4 317.3 L297.6 316.9 L298.8 315.9 L300.0 315.3 L301.2 314.5 L302.4 314.0 L303.6 313.4 L304.8 312.4 L306.0 311.5 L307.2 310.9 L308.4 310.0 L309.6 309.0 L310.8 307.7 L312.0 307.1 L313.2 306.0 L314.4 305.3 L315.6 304.0 L316.8 303.2 L318.0 302.2 L319.2 301.1 L320.4 300.2 L321.6 299.3 L322.8 298.5 L324.0 297.4 L325.2 296.4 L326.4 295.9 L327.6 294.6 L328.8 294.2 L330.0 293.4 L331.2 292.6 L332.4 291.9 L333.6 291.5 L334.8 291.0 L336.0 290.5 L337.2 290.1 L338.4 289.4 L339.6 289.2 L340.8 288.9 L342.0 289.0 L343.2 288.9 L344.4 288.4 L345.6 288.5 L346.8 288.3 L348.0 288.0 L349.2 288.0 L350.4 288.1 L351.6 287.9" fill="none" stroke="#ffe238" stroke-width="1.2" stroke-linejoin="round"/>
<path d="M346.0 288.2 L347.5 288.4 L349.0 287.9 L350.5 288.0 L352.0 287.8 L353.5 288.1 L355.0 287.7 L356.5 287.7 L358.0 287.5 L359.5 287.1 L361.0 287.5 L362.5 287.1 L364.0 287.0 L365.5 286.6 L367.0 286.4 L368.5 286.6 L370.0 286.7 L371.5 286.6 L373.0 286.1 L374.5 285.9 L376.0 286.1 L377.5 286.3 L379.0 285.6 L380.5 286.0 L382.0 285.5 L383.5 285.5 L385.0 285.2 L386.5 285.3 L388.0 285.3 L389.5 285.7 L391.0 285.6 L392.5 285.0 L394.0 285.0 L395.5 285.4 L397.0 284.8 L398.5 284.8 L400.0 284.8 L401.5 284.5 L403.0 284.6 L404.5 284.6 L406.0 284.6 L407.5 285.0 L409.0 284.4 L410.5 284.3 L412.0 284.8 L413.5 284.4 L415.0 284.6 L416.5 284.4 L418.0 284.5 L419.5 284.1 L421.0 283.9 L422.5 284.3 L424.0 284.1 L425.5 284.1 L427.0 284.2 L428.5 284.2 L430.0 283.8 L431.5 283.8 L433.0 284.2 L434.5 283.9 L436.0 283.6 L437.5 283.9 L439.0 283.6 L440.5 283.9 L442.0 283.3 L443.5 283.9 L445.0 283.7 L446.5 283.5 L448.0 283.9 L449.5 283.4 L451.0 283.3 L452.5 283.2 L454.0 283.5 L455.5 283.7 L457.0 283.6 L458.5 283.3 L460.0 283.6 L461.5 283.0 L463.0 283.2 L464.5 283.4 L466.0 283.7 L467.5 283.4 L469.0 283.4" fill="none" stroke="#d8a400" stroke-width="4.0" stroke-linejoin="round" stroke-linecap="round"/>
<path d="M346.0 288.2 L347.5 288.4 L349.0 287.9 L350.5 288.0 L352.0 287.8 L353.5 288.1 L355.0 287.7 L356.5 287.7 L358.0 287.5 L359.5 287.1 L361.0 287.5 L362.5 287.1 L364.0 287.0 L365.5 286.6 L367.0 286.4 L368.5 286.6 L370.0 286.7 L371.5 286.6 L373.0 286.1 L374.5 285.9 L376.0 286.1 L377.5 286.3 L379.0 285.6 L380.5 286.0 L382.0 285.5 L383.5 285.5 L385.0 285.2 L386.5 285.3 L388.0 285.3 L389.5 285.7 L391.0 285.6 L392.5 285.0 L394.0 285.0 L395.5 285.4 L397.0 284.8 L398.5 284.8 L400.0 284.8 L401.5 284.5 L403.0 284.6 L404.5 284.6 L406.0 284.6 L407.5 285.0 L409.0 284.4 L410.5 284.3 L412.0 284.8 L413.5 284.4 L415.0 284.6 L416.5 284.4 L418.0 284.5 L419.5 284.1 L421.0 283.9 L422.5 284.3 L424.0 284.1 L425.5 284.1 L427.0 284.2 L428.5 284.2 L430.0 283.8 L431.5 283.8 L433.0 284.2 L434.5 283.9 L436.0 283.6 L437.5 283.9 L439.0 283.6 L440.5 283.9 L442.0 283.3 L443.5 283.9 L445.0 283.7 L446.5 283.5 L448.0 283.9 L449.5 283.4 L451.0 283.3 L452.5 283.2 L454.0 283.5 L455.5 283.7 L457.0 283.6 L458.5 283.3 L460.0 283.6 L461.5 283.0 L463.0 283.2 L464.5 283.4 L466.0 283.7 L467.5 283.4 L469.0 283.4" fill="none" stroke="#ffe030" stroke-width="2.3" stroke-linejoin="round"/>
<line x1="310" y1="243" x2="310" y2="390" stroke="#e8a860" stroke-width="1.4" stroke-dasharray="2 1.5"/>
<path d="M310 374 L316.8 380 L316.8 389 L303.2 389 L303.2 380 Z" fill="#1a0c00" stroke="#e08828" stroke-width="1.1" />
<text x="310" y="387" font-size="7" fill="#f09030" text-anchor="middle" font-weight="bold" font-style="normal" >X1</text>
<path d="M456.5 364 L462.5 357 L470.0 357 L470.0 371 L462.5 371 Z" fill="#1a0c00" stroke="#e08828" stroke-width="1.1" />
<text x="469.5" y="366.8" font-size="7" fill="#f09030" text-anchor="end" font-weight="bold" font-style="normal" >Y1</text>
<path d="M464 377 L470.5 383 L470.5 390 L457.5 390 L457.5 383 Z" fill="#1a0c00" stroke="#e08828" stroke-width="1.1" />
<text x="464" y="389.5" font-size="6" fill="#c07828" text-anchor="middle" font-weight="bold" font-style="normal" >X2</text>
<text x="80.3" y="156" font-size="6" fill="#e070e0" text-anchor="start" font-weight="bold" font-style="normal" >4</text>
<text x="80.3" y="163" font-size="5" fill="#e070e0" text-anchor="start" font-weight="bold" font-style="normal" >T</text>
<path d="M85 152.5 L89 155.5 L85 158.5 Z" fill="#ffffff" />
<path d="M85.5 169.5 L89 172.5 L85.5 175.5 Z" fill="#f0e040" />
<text x="80.3" y="219" font-size="6" fill="#f0e040" text-anchor="start" font-weight="bold" font-style="normal" >1</text>
<text x="80.5" y="226" font-size="5" fill="#c8c020" text-anchor="start" font-weight="bold" font-style="normal" >T</text>
<path d="M84 216.5 L88 213.5 L88 219.5 Z" fill="#f0e040" />
<text x="80.3" y="302" font-size="6" fill="#e070e0" text-anchor="start" font-weight="bold" font-style="normal" >4</text>
<text x="80.3" y="309" font-size="5" fill="#e070e0" text-anchor="start" font-weight="bold" font-style="normal" >T</text>
<path d="M85 302.5 L89 305.5 L85 308.5 Z" fill="#ffffff" />
<path d="M85.5 317.5 L89 320.5 L85.5 323.5 Z" fill="#f0e040" />
<text x="80.3" y="366" font-size="6" fill="#f0e040" text-anchor="start" font-weight="bold" font-style="normal" >1</text>
<text x="80.5" y="373" font-size="5" fill="#c8c020" text-anchor="start" font-weight="bold" font-style="normal" >T</text>
<path d="M84 364.5 L88 361.5 L88 367.5 Z" fill="#f0e040" />
<rect x="82" y="59" width="20.5" height="31" rx="3" fill="#2f3537" />
<path d="M82 62 Q82 59 85 59 L99.5 59 Q102.5 59 102.5 62 L102.5 73 L92.25 79 L82 73 Z" fill="#41494c" />
<path d="M89.5 82.5 L95.5 82.5 L92.5 86.5 Z" fill="#f0f0f0" />
<rect x="105.5" y="63.5" width="12.5" height="22.5" rx="1.5" fill="#8f8d16" stroke="#cfca2a" stroke-width="1.2" />
<text x="111.8" y="78" font-size="7" fill="#e8e480" text-anchor="middle" font-weight="bold" font-style="normal" >1</text>
<text x="141.5" y="70.5" font-size="7.5" fill="#cfcfcf" text-anchor="middle" font-weight="normal" font-style="normal" >700mV/</text>
<text x="141.5" y="84.5" font-size="7.5" fill="#cfcfcf" text-anchor="middle" font-weight="normal" font-style="normal" >1.84625V</text>
<rect x="164" y="63.5" width="12.5" height="22.5" rx="1.5" fill="#050505" stroke="#258a35" stroke-width="1.3" />
<text x="170.3" y="77.5" font-size="6" fill="#258a35" text-anchor="middle" font-weight="bold" font-style="normal" >2</text>
<rect x="223.5" y="63.5" width="12.5" height="22.5" rx="1.5" fill="#050505" stroke="#2a3eb0" stroke-width="1.3" />
<text x="229.8" y="77.5" font-size="6" fill="#2a3eb0" text-anchor="middle" font-weight="bold" font-style="normal" >3</text>
<rect x="282.5" y="63.5" width="12.5" height="22.5" rx="1.5" fill="#050505" stroke="#c8246e" stroke-width="1.3" />
<text x="288.8" y="77.5" font-size="6" fill="#c8246e" text-anchor="middle" font-weight="bold" font-style="normal" >4</text>
<rect x="354.5" y="63.5" width="12" height="22.5" rx="1.5" fill="#2a2a2a" stroke="#8a8a8a" stroke-width="1.2" />
<text x="360.5" y="78" font-size="7" fill="#f4f4f4" text-anchor="middle" font-weight="bold" font-style="normal" >H</text>
<text x="385.5" y="70.5" font-size="7.5" fill="#cfcfcf" text-anchor="middle" font-weight="normal" font-style="normal" >20.00us/</text>
<text x="386" y="84.5" font-size="7.5" fill="#e4e4e4" text-anchor="middle" font-weight="normal" font-style="normal" >0.0s</text>
<text x="423" y="70.5" font-size="7.5" fill="#cfcfcf" text-anchor="middle" font-weight="normal" font-style="normal" >2.000us/</text>
<text x="423" y="84.5" font-size="7.5" fill="#e4e4e4" text-anchor="middle" font-weight="normal" font-style="normal" >0.0s</text>
<rect x="442.5" y="63.5" width="12.5" height="22.5" rx="1.5" fill="#8f8d16" stroke="#cfca2a" stroke-width="1.2" />
<text x="448.8" y="78" font-size="7" fill="#e8e480" text-anchor="middle" font-weight="bold" font-style="normal" >T</text>
<path d="M463 72 L465 72 L467 63 L469 63" fill="none" stroke="#e8d820" stroke-width="1.4" />
<path d="M463.8 69 L467.8 66.2" fill="none" stroke="#e8d820" stroke-width="1.2" />
<text x="482.5" y="70.5" font-size="7.5" fill="#e8e040" text-anchor="middle" font-weight="bold" font-style="normal" >1</text>
<text x="511" y="70.5" font-size="7.5" fill="#e4e4e4" text-anchor="middle" font-weight="normal" font-style="normal" >1.67V</text>
<text x="480" y="85" font-size="7.5" fill="#e4e4e4" text-anchor="middle" font-weight="normal" font-style="normal" >Auto</text>
<rect x="532" y="59.5" width="21.5" height="15.5" rx="2" fill="#1f9ad2" />
<rect x="534.5" y="61.5" width="16.5" height="10.5" rx="1" fill="#44bcec" stroke="#157cb4" stroke-width="1.2" />
<rect x="532" y="75" width="21.5" height="14.5" rx="2" fill="#3c3c3c" />
<text x="542.8" y="85.5" font-size="6" fill="#6a6a6a" text-anchor="middle" font-weight="normal" font-style="italic" >2.0V</text>
<rect x="473" y="93" width="81" height="297" rx="0" fill="#1d1d1d" />
<line x1="473.5" y1="93" x2="473.5" y2="390" stroke="#4a4a4a" stroke-width="1" />
<line x1="553.5" y1="111" x2="553.5" y2="390" stroke="#4a4a4a" stroke-width="1" />
<line x1="473" y1="389.5" x2="554" y2="389.5" stroke="#555" stroke-width="1" />
<rect x="473" y="93" width="60" height="18" rx="0" fill="#1a1a1a" />
<line x1="473" y1="93.5" x2="533" y2="93.5" stroke="#555" stroke-width="1" />
<text x="501.5" y="105" font-size="7.5" fill="#d8d8d8" text-anchor="middle" font-weight="normal" font-style="normal" >Cursor</text>
<text x="476" y="104" font-size="7" fill="#8a8a8a" text-anchor="start" font-weight="normal" font-style="normal" >⁞</text>
<text x="527" y="104" font-size="7" fill="#8a8a8a" text-anchor="start" font-weight="normal" font-style="normal" >⁞</text>
<rect x="533" y="93" width="20.5" height="18.5" rx="1.5" fill="#103a94" />
<rect x="534" y="94" width="18.5" height="16.5" rx="1.5" fill="none" stroke="#2a62d0" stroke-width="1.2" />
<path d="M539.8 97.5 L539.8 105.5 L546.6 105.5 L546.6 97.5" fill="none" stroke="#e8eefc" stroke-width="1.4" />
<rect x="541.4" y="96.3" width="3.6" height="2" rx="0" fill="#c8d4f4" />
<text x="475.5" y="121.5" font-size="7" fill="#d8d8d8" text-anchor="start" font-weight="normal" font-style="normal" >X1:</text>
<text x="551" y="132.8" font-size="7.5" fill="#ececec" text-anchor="end" font-weight="normal" font-style="normal" >1.562500us</text>
<text x="475.5" y="147" font-size="7" fill="#f09030" text-anchor="start" font-weight="normal" font-style="normal" >X2:</text>
<text x="551" y="158.6" font-size="7.5" fill="#f09030" text-anchor="end" font-weight="normal" font-style="normal" >51.250000us</text>
<text x="475.5" y="172" font-size="7" fill="#d8d8d8" text-anchor="start" font-weight="normal" font-style="normal" >ΔX:</text>
<text x="551" y="184" font-size="7.5" fill="#ececec" text-anchor="end" font-weight="normal" font-style="normal" >49.687500us</text>
<text x="475.5" y="196.5" font-size="7" fill="#d8d8d8" text-anchor="start" font-weight="normal" font-style="normal" >1/ΔX:</text>
<text x="551" y="208" font-size="7.5" fill="#ececec" text-anchor="end" font-weight="normal" font-style="normal" >20.126kHz</text>
<text x="475.5" y="223" font-size="7" fill="#d8d8d8" text-anchor="start" font-weight="normal" font-style="normal" >Y1:</text>
<text x="551" y="235.6" font-size="7.5" fill="#ececec" text-anchor="end" font-weight="normal" font-style="normal" >0.0V</text>
<text x="475.5" y="248" font-size="7" fill="#d8d8d8" text-anchor="start" font-weight="normal" font-style="normal" >Y2:</text>
<text x="551" y="260.6" font-size="7.5" fill="#ececec" text-anchor="end" font-weight="normal" font-style="normal" >0.0V</text>
<text x="475.5" y="274" font-size="7" fill="#d8d8d8" text-anchor="start" font-weight="normal" font-style="normal" >ΔY(1):</text>
<text x="551" y="285" font-size="7.5" fill="#ececec" text-anchor="end" font-weight="normal" font-style="normal" >0.0V</text>
<line x1="475" y1="137.7" x2="552" y2="137.7" stroke="#555" stroke-width="1" />
<line x1="475" y1="162.3" x2="552" y2="162.3" stroke="#444" stroke-width="1" />
<line x1="475" y1="187.3" x2="552" y2="187.3" stroke="#444" stroke-width="1" />
<line x1="475" y1="212" x2="552" y2="212" stroke="#8a8a8a" stroke-width="1.3" />
<line x1="475" y1="239.3" x2="552" y2="239.3" stroke="#444" stroke-width="1" />
<line x1="475" y1="264.5" x2="552" y2="264.5" stroke="#444" stroke-width="1" />
<line x1="475" y1="289" x2="552" y2="289" stroke="#555" stroke-width="1" />
<rect x="474" y="292" width="79" height="97" rx="0" fill="#232323" />
<text x="82" y="400.2" font-size="7.5" fill="#d4d4d4" text-anchor="start" font-weight="normal" font-style="italic" >Zone Qualified Trigger Menu</text>
<rect x="82" y="404" width="10.5" height="22.5" rx="1.5" fill="#3a3a3a" stroke="#555" stroke-width="0.8" />
<path d="M87.2 409.5 L90.2 413.5 L88.2 413.5 L88.2 419 L86.2 419 L86.2 413.5 L84.2 413.5 Z" fill="#fff" />
<rect x="95" y="404" width="74" height="22.5" rx="2.5" fill="url(#gSoft)" stroke="#5a5a5a" stroke-width="0.8" />
<text x="135.0" y="413" font-size="7.5" fill="#e8e8e8" text-anchor="middle" font-weight="normal" font-style="normal" >Source</text>
<text x="135.0" y="424" font-size="7.5" fill="#e8e040" text-anchor="middle" font-weight="normal" font-style="normal" >1</text>
<path d="M104.5 410.5 a3.3 3.3 0 1 1 -4.2 -1.4" fill="none" stroke="#8a8a8a" stroke-width="1.1"/>
<rect x="172" y="404" width="74" height="22.5" rx="2.5" fill="url(#gSoft)" stroke="#5a5a5a" stroke-width="0.8" />
<text x="209.0" y="413" font-size="7.5" fill="#e8e8e8" text-anchor="middle" font-weight="normal" font-style="normal" >Zone 1 On</text>
<rect x="205.5" y="417" width="6.5" height="6.5" rx="1" fill="#2a7ad0" stroke="#66a8ec" stroke-width="0.8" />
<rect x="249" y="404" width="73.5" height="22.5" rx="2.5" fill="url(#gSoft)" stroke="#5a5a5a" stroke-width="0.8" />
<text x="288.75" y="413" font-size="7.5" fill="#e8e8e8" text-anchor="middle" font-weight="normal" font-style="normal" >Zone 1</text>
<text x="288.75" y="424" font-size="7.5" fill="#e8e8e8" text-anchor="middle" font-weight="normal" font-style="normal" >Intersect</text>
<path d="M258.5 410.5 a3.3 3.3 0 1 1 -4.2 -1.4" fill="none" stroke="#8a8a8a" stroke-width="1.1"/>
<rect x="325.5" y="404" width="73.5" height="22.5" rx="2.5" fill="url(#gSoft)" stroke="#5a5a5a" stroke-width="0.8" />
<text x="362.25" y="413" font-size="7.5" fill="#e8e8e8" text-anchor="middle" font-weight="normal" font-style="normal" >Zone 2 On</text>
<rect x="358.75" y="417" width="6.5" height="6.5" rx="1" fill="#2a7ad0" stroke="#66a8ec" stroke-width="0.8" />
<rect x="402" y="404" width="74" height="22.5" rx="2.5" fill="url(#gSoftG)" stroke="#1c8c1c" stroke-width="0.8" />
<text x="442.0" y="413" font-size="7.5" fill="#e8e8e8" text-anchor="middle" font-weight="normal" font-style="normal" >Zone 2</text>
<text x="442.0" y="424" font-size="7.5" fill="#e8e8e8" text-anchor="middle" font-weight="normal" font-style="normal" >Not Intersect</text>
<path d="M411.5 410.5 a3.3 3.3 0 1 1 -4.2 -1.4" fill="none" stroke="#9cf09c" stroke-width="1.1"/>
<path d="M605 36 Q605 33 608 33 L746 33 Q749 33 749 36 L749 109 Q749 112 746 112 L650 112 L650 98 L608 98 Q605 98 605 95 Z" fill="#cacaca" />
<rect x="650" y="88" width="99" height="2.4" rx="0" fill="#dadada" />
<line x1="650.5" y1="90" x2="650.5" y2="112" stroke="#d6d6d6" stroke-width="1" />
<rect x="789" y="102" width="56.5" height="185" rx="4" fill="#c3c3c3" />
<rect x="606" y="289" width="239" height="138" rx="3" fill="#e7e7e7" />
<line x1="606" y1="289.5" x2="845" y2="289.5" stroke="#cfcfcf" stroke-width="1" />
<rect x="602" y="427" width="243" height="15" rx="0" fill="#e4e4e4" />
<line x1="602" y1="427.5" x2="845" y2="427.5" stroke="#c8c8c8" stroke-width="1" />
<line x1="604.8" y1="113" x2="604.8" y2="441" stroke="#a8a8a8" stroke-width="1.2" />
<rect x="616" y="38.2" width="36" height="3.6" rx="1.5" fill="#7e7e88" filter="url(#blur1b)" opacity="1"/>
<rect x="703" y="38.2" width="36" height="3.6" rx="1.5" fill="#7e7e88" filter="url(#blur1b)" opacity="1"/>
<text x="677.5" y="43" font-size="8.2" fill="#1e1e1e" text-anchor="middle" font-weight="bold" font-style="normal" >Horizontal</text>
<circle cx="630" cy="67.1" r="19.5" fill="#9a9a9a" filter="url(#blur1)" opacity="0.75"/>
<circle cx="630" cy="66.5" r="18.5" fill="#787878" filter="url(#blur1)"/>
<circle cx="630" cy="66.5" r="16.7" fill="none" stroke="#929292" stroke-width="2.6" stroke-dasharray="1.1 1.5" opacity="0.8"/>
<circle cx="630" cy="66.5" r="14.1" fill="#bcbcbc" />
<circle cx="630" cy="66.5" r="13.2" fill="url(#gKnob)" />
<path d="M608.80 84.30 C608.97 84.13 609.47 83.48 609.80 83.30 C610.13 83.12 610.37 82.90 610.80 83.20 C611.23 83.50 611.87 84.45 612.40 85.10 C612.93 85.75 613.60 86.75 614.00 87.10 C614.40 87.45 614.55 87.30 614.80 87.20 C615.05 87.10 615.38 86.62 615.50 86.50" fill="none" stroke="#1e1e1e" stroke-width="1.4" stroke-linecap="round" stroke-linejoin="round"/>
<path d="M640.00 84.50 C640.20 84.27 640.77 83.38 641.20 83.10 C641.63 82.82 641.97 82.47 642.60 82.80 C643.23 83.13 644.20 84.35 645.00 85.10 C645.80 85.85 646.82 86.98 647.40 87.30 C647.98 87.62 648.20 87.23 648.50 87.00 C648.80 86.77 649.08 86.08 649.20 85.90" fill="none" stroke="#1e1e1e" stroke-width="1.6" stroke-linecap="round" stroke-linejoin="round"/>
<text x="630" y="94.5" font-size="3.6" fill="#8a8a8a" text-anchor="middle" font-weight="normal" font-style="normal" >Push for</text>
<text x="630" y="98" font-size="3.6" fill="#8a8a8a" text-anchor="middle" font-weight="normal" font-style="normal" >Fine</text>
<rect x="652.7" y="47.2" width="25.1" height="13.7" rx="4" fill="#f4f4f4" opacity="0.9"/>
<rect x="653.5" y="47.5" width="23.5" height="11.5" rx="3" fill="url(#gBtn)" stroke="#7e7e7e" stroke-width="1" />
<text x="665.25" y="55.23" font-size="5.5" fill="#2a2a2a" text-anchor="middle" font-weight="bold" font-style="normal" >Horiz</text>
<rect x="652.7" y="71.7" width="25.1" height="13.7" rx="4" fill="#f4f4f4" opacity="0.9"/>
<rect x="653.5" y="72" width="23.5" height="11.5" rx="3" fill="url(#gBtn)" stroke="#7e7e7e" stroke-width="1" />
<text x="665.25" y="79.73" font-size="5.5" fill="#2a2a2a" text-anchor="middle" font-weight="bold" font-style="normal" >Search</text>
<rect x="652.7" y="95.2" width="25.1" height="13.7" rx="4" fill="#f4f4f4" opacity="0.9"/>
<rect x="653.5" y="95.5" width="23.5" height="11.5" rx="3" fill="url(#gBtn)" stroke="#7e7e7e" stroke-width="1" />
<text x="665.25" y="103.05" font-size="5" fill="#2a2a2a" text-anchor="middle" font-weight="bold" font-style="normal" >Navigate</text>
<circle cx="694.5" cy="53.3" r="7.2" fill="#ececec" opacity="0.9"/>
<circle cx="694.5" cy="53.3" r="6" fill="#d9d9d9" stroke="#808080" stroke-width="1.4" />
<circle cx="694.3" cy="52.8" r="1.9" fill="none" stroke="#262626" stroke-width="1.5" />
<line x1="695.8" y1="54.4" x2="697.3" y2="56" stroke="#262626" stroke-width="1.4" />
<circle cx="694.5" cy="100.5" r="8.0" fill="#ececec" opacity="0.9"/>
<circle cx="694.5" cy="100.5" r="6.8" fill="#d9d9d9" stroke="#808080" stroke-width="1.4" />
<path d="M696.8 97.9 L696.8 103.1 L691.4 100.5 Z" fill="#1e1e1e" />
<circle cx="716" cy="100.5" r="8.0" fill="#ececec" opacity="0.9"/>
<circle cx="716" cy="100.5" r="6.8" fill="#d9d9d9" stroke="#808080" stroke-width="1.4" />
<rect x="713.8" y="98.3" width="4.4" height="4.4" rx="0" fill="#1e1e1e" />
<circle cx="738" cy="100.5" r="8.0" fill="#ececec" opacity="0.9"/>
<circle cx="738" cy="100.5" r="6.8" fill="#d9d9d9" stroke="#808080" stroke-width="1.4" />
<path d="M736 97.9 L736 103.1 L741.4 100.5 Z" fill="#1e1e1e" />
<circle cx="723.5" cy="66.6" r="12.8" fill="#9a9a9a" filter="url(#blur1)" opacity="0.75"/>
<circle cx="723.5" cy="66" r="11.8" fill="#787878" filter="url(#blur1)"/>
<circle cx="723.5" cy="66" r="10.0" fill="none" stroke="#929292" stroke-width="2.6" stroke-dasharray="1.1 1.5" opacity="0.8"/>
<circle cx="723.5" cy="66" r="8.4" fill="#bcbcbc" />
<circle cx="723.5" cy="66" r="7.5" fill="url(#gKnob)" />
<text x="735" y="52" font-size="3.6" fill="#9a9a9a" text-anchor="middle" font-weight="normal" font-style="normal" >Push to</text>
<text x="735" y="55.5" font-size="3.6" fill="#9a9a9a" text-anchor="middle" font-weight="normal" font-style="normal" >Zero</text>
<path d="M719.6 81.8 L719.6 86.6 L715 84.2 Z" fill="#2a2a2a" />
<path d="M726.4 81.8 L726.4 86.6 L731 84.2 Z" fill="#2a2a2a" />
<rect x="760" y="38.2" width="10" height="3.6" rx="1.5" fill="#7e7e88" filter="url(#blur1b)" opacity="1"/>
<rect x="823" y="38.2" width="10" height="3.6" rx="1.5" fill="#7e7e88" filter="url(#blur1b)" opacity="1"/>
<text x="796" y="43" font-size="8.2" fill="#1e1e1e" text-anchor="middle" font-weight="bold" font-style="normal" >Run Control</text>
<rect x="753" y="46.7" width="39.5" height="22.5" rx="5" fill="#f4f4f4" opacity="0.9"/>
<rect x="753.8" y="47" width="38" height="20.5" rx="4.5" fill="#bababa" stroke="#7c7c7c" stroke-width="1" />
<text x="772.8" y="54.4" font-size="6" fill="#60ff80" text-anchor="middle" font-weight="bold" font-style="normal" filter="url(#blur2)">Run</text>
<text x="772.8" y="54.4" font-size="6" fill="#48f068" text-anchor="middle" font-weight="bold" font-style="normal" >Run</text>
<line x1="761" y1="56.8" x2="785" y2="56.8" stroke="#2a4a2a" stroke-width="0.9" />
<text x="772.8" y="63.2" font-size="6" fill="#1e5a2e" text-anchor="middle" font-weight="bold" font-style="normal" >Stop</text>
<rect x="800" y="46.7" width="40.5" height="22.5" rx="5" fill="#f4f4f4" opacity="0.9"/>
<rect x="800.6" y="47" width="39" height="20.5" rx="4.5" fill="#bababa" stroke="#7c7c7c" stroke-width="1" />
<text x="820" y="58.8" font-size="7" fill="#1e1e1e" text-anchor="middle" font-weight="bold" font-style="normal" >Single</text>
<rect x="760.2" y="79.2" width="25.6" height="16.2" rx="4" fill="#f4f4f4" opacity="0.9"/>
<rect x="761" y="79.5" width="24" height="14" rx="3" fill="url(#gBtn)" stroke="#7e7e7e" stroke-width="1" />
<text x="773.0" y="86.1" font-size="5" fill="#2a2a2a" text-anchor="middle" font-weight="bold" font-style="normal" >Default</text>
<text x="773.0" y="90.9" font-size="5" fill="#2a2a2a" text-anchor="middle" font-weight="bold" font-style="normal" >Setup</text>
<rect x="807.7" y="79.2" width="24.6" height="16.2" rx="4" fill="#f4f4f4" opacity="0.9"/>
<rect x="808.5" y="79.5" width="23" height="14" rx="3" fill="#fafafa" stroke="#9a9a9a" stroke-width="1" />
<text x="820.0" y="86.1" font-size="5" fill="#2a2a2a" text-anchor="middle" font-weight="bold" font-style="normal" >Auto</text>
<text x="820.0" y="90.9" font-size="5" fill="#2a2a2a" text-anchor="middle" font-weight="bold" font-style="normal" >Scale</text>
<rect x="841.5" y="90" width="1.6" height="9" rx="0" fill="#111" />
<rect x="604.2" y="115" width="1.6" height="9" rx="0" fill="#111" />
<rect x="616" y="118.2" width="29" height="3.6" rx="1.5" fill="#7e7e88" filter="url(#blur1b)" opacity="1"/>
<rect x="683" y="118.2" width="26" height="3.6" rx="1.5" fill="#7e7e88" filter="url(#blur1b)" opacity="1"/>
<text x="664" y="123" font-size="8.2" fill="#1e1e1e" text-anchor="middle" font-weight="bold" font-style="normal" >Trigger</text>
<line x1="715.8" y1="122" x2="715.8" y2="172" stroke="#9a9a9a" stroke-width="1.2" />
<rect x="615.2" y="130.7" width="27.6" height="15.7" rx="4" fill="#f4f4f4" opacity="0.9"/>
<rect x="616" y="131" width="26" height="13.5" rx="3" fill="url(#gBtn)" stroke="#7e7e7e" stroke-width="1" />
<text x="629.0" y="139.73" font-size="5.5" fill="#2a2a2a" text-anchor="middle" font-weight="bold" font-style="normal" >Trigger</text>
<circle cx="663" cy="137.6" r="13.0" fill="#9a9a9a" filter="url(#blur1)" opacity="0.75"/>
<circle cx="663" cy="137" r="12" fill="#787878" filter="url(#blur1)"/>
<circle cx="663" cy="137" r="10.2" fill="none" stroke="#929292" stroke-width="2.6" stroke-dasharray="1.1 1.5" opacity="0.8"/>
<circle cx="663" cy="137" r="8.4" fill="#bcbcbc" />
<circle cx="663" cy="137" r="7.5" fill="url(#gKnob)" />
<rect x="682.7" y="130.7" width="27.6" height="15.7" rx="4" fill="#f4f4f4" opacity="0.9"/>
<rect x="683.5" y="131" width="26" height="13.5" rx="3" fill="url(#gBtn)" stroke="#7e7e7e" stroke-width="1" />
<text x="696.5" y="137.35" font-size="5" fill="#2a2a2a" text-anchor="middle" font-weight="bold" font-style="normal" >Force</text>
<text x="696.5" y="142.15" font-size="5" fill="#2a2a2a" text-anchor="middle" font-weight="bold" font-style="normal" >Trigger</text>
<rect x="613" y="152" width="32" height="20" rx="5" fill="#e8a8f4" filter="url(#blur2)" opacity="0.9"/>
<rect x="616" y="155" width="26" height="13.5" rx="3" fill="#f6dcfa" stroke="#c890d8" stroke-width="1" />
<text x="629" y="164" font-size="5.5" fill="#8a4a9a" text-anchor="middle" font-weight="bold" font-style="normal" >Zone</text>
<text x="663.5" y="161" font-size="6.5" fill="#1e1e1e" text-anchor="middle" font-weight="bold" font-style="normal" >Level</text>
<text x="663.5" y="166" font-size="3.6" fill="#9a9a9a" text-anchor="middle" font-weight="normal" font-style="normal" >Push for 50%</text>
<rect x="682.7" y="154.7" width="27.6" height="15.7" rx="4" fill="#f4f4f4" opacity="0.9"/>
<rect x="683.5" y="155" width="26" height="13.5" rx="3" fill="url(#gBtn)" stroke="#7e7e7e" stroke-width="1" />
<text x="696.5" y="161.35" font-size="5" fill="#2a2a2a" text-anchor="middle" font-weight="bold" font-style="normal" >Mode</text>
<text x="696.5" y="166.15" font-size="5" fill="#2a2a2a" text-anchor="middle" font-weight="bold" font-style="normal" >Coupling</text>
<rect x="722" y="118.2" width="9" height="3.6" rx="1.5" fill="#7e7e88" filter="url(#blur1b)" opacity="1"/>
<rect x="771.5" y="118.2" width="11.0" height="3.6" rx="1.5" fill="#7e7e88" filter="url(#blur1b)" opacity="1"/>
<text x="751.3" y="123" font-size="8.7" fill="#1e1e1e" text-anchor="middle" font-weight="bold" font-style="normal" >Measure</text>
<rect x="721.2" y="130.7" width="26.6" height="15.7" rx="4" fill="#f4f4f4" opacity="0.9"/>
<rect x="722" y="131" width="25" height="13.5" rx="3" fill="#b2b2b2" stroke="#7e7e7e" stroke-width="1" />
<text x="734.5" y="139.55" font-size="5" fill="#f0f0f0" text-anchor="middle" font-weight="bold" font-style="normal" >Cursors</text>
<circle cx="767.5" cy="137.1" r="13.5" fill="#9a9a9a" filter="url(#blur1)" opacity="0.75"/>
<circle cx="767.5" cy="136.5" r="12.5" fill="#787878" filter="url(#blur1)"/>
<circle cx="767.5" cy="136.5" r="10.7" fill="none" stroke="#929292" stroke-width="2.6" stroke-dasharray="1.1 1.5" opacity="0.8"/>
<circle cx="767.5" cy="136.5" r="8.4" fill="#bcbcbc" />
<circle cx="767.5" cy="136.5" r="7.5" fill="url(#gKnob)" />
<rect x="721.2" y="154.7" width="26.6" height="15.7" rx="4" fill="#f4f4f4" opacity="0.9"/>
<rect x="722" y="155" width="25" height="13.5" rx="3" fill="#b2b2b2" stroke="#7e7e7e" stroke-width="1" />
<text x="734.5" y="163.55" font-size="5" fill="#f0f0f0" text-anchor="middle" font-weight="bold" font-style="normal" >Meas</text>
<text x="767.5" y="160.5" font-size="6" fill="#1e1e1e" text-anchor="middle" font-weight="bold" font-style="normal" >Cursors</text>
<text x="767.5" y="165.5" font-size="3.6" fill="#9a9a9a" text-anchor="middle" font-weight="normal" font-style="normal" >Push to Select</text>
<rect x="616" y="178.2" width="23" height="3.6" rx="1.5" fill="#7e7e88" filter="url(#blur1b)" opacity="1"/>
<rect x="688" y="178.2" width="21" height="3.6" rx="1.5" fill="#7e7e88" filter="url(#blur1b)" opacity="1"/>
<text x="663.5" y="183" font-size="8.2" fill="#1e1e1e" text-anchor="middle" font-weight="bold" font-style="normal" >Waveform</text>
<line x1="715.8" y1="181" x2="715.8" y2="268" stroke="#9a9a9a" stroke-width="1.2" />
<rect x="615.2" y="190.7" width="27.6" height="15.7" rx="4" fill="#f4f4f4" opacity="0.9"/>
<rect x="616" y="191" width="26" height="13.5" rx="3" fill="url(#gBtn)" stroke="#7e7e7e" stroke-width="1" />
<text x="629.0" y="199.55" font-size="5" fill="#2a2a2a" text-anchor="middle" font-weight="bold" font-style="normal" >Analyze</text>
<rect x="649.2" y="190.7" width="27.6" height="15.7" rx="4" fill="#f4f4f4" opacity="0.9"/>
<rect x="650" y="191" width="26" height="13.5" rx="3" fill="url(#gBtn)" stroke="#7e7e7e" stroke-width="1" />
<text x="663.0" y="199.55" font-size="5" fill="#2a2a2a" text-anchor="middle" font-weight="bold" font-style="normal" >Acquire</text>
<rect x="683.2" y="190.7" width="26.6" height="15.7" rx="4" fill="#f4f4f4" opacity="0.9"/>
<rect x="684" y="191" width="25" height="13.5" rx="3" fill="url(#gBtn)" stroke="#7e7e7e" stroke-width="1" />
<text x="696.5" y="199.55" font-size="5" fill="#2a2a2a" text-anchor="middle" font-weight="bold" font-style="normal" >Display</text>
<rect x="723" y="177.2" width="18" height="3.6" rx="1.5" fill="#7e7e88" filter="url(#blur1b)" opacity="1"/>
<rect x="762" y="177.2" width="19" height="3.6" rx="1.5" fill="#7e7e88" filter="url(#blur1b)" opacity="1"/>
<text x="751.5" y="182" font-size="8" fill="#1e1e1e" text-anchor="middle" font-weight="bold" font-style="normal" >File</text>
<rect x="721.2" y="190.7" width="26.1" height="15.7" rx="4" fill="#f4f4f4" opacity="0.9"/>
<rect x="722" y="191" width="24.5" height="13.5" rx="3" fill="url(#gBtn)" stroke="#7e7e7e" stroke-width="1" />
<text x="734.25" y="197.35" font-size="5" fill="#2a2a2a" text-anchor="middle" font-weight="bold" font-style="normal" >Save</text>
<text x="734.25" y="202.15" font-size="5" fill="#2a2a2a" text-anchor="middle" font-weight="bold" font-style="normal" >Recall</text>
<rect x="754.7" y="190.7" width="26.1" height="15.7" rx="4" fill="#f4f4f4" opacity="0.9"/>
<rect x="755.5" y="191" width="24.5" height="13.5" rx="3" fill="url(#gBtn)" stroke="#7e7e7e" stroke-width="1" />
<text x="767.75" y="199.55" font-size="5" fill="#2a2a2a" text-anchor="middle" font-weight="bold" font-style="normal" >Print</text>
<rect x="723" y="216.7" width="14" height="3.6" rx="1.5" fill="#7e7e88" filter="url(#blur1b)" opacity="1"/>
<rect x="766" y="216.7" width="15" height="3.6" rx="1.5" fill="#7e7e88" filter="url(#blur1b)" opacity="1"/>
<text x="751.5" y="221.5" font-size="8.5" fill="#1e1e1e" text-anchor="middle" font-weight="bold" font-style="normal" >Tools</text>
<rect x="683.2" y="227.2" width="26.6" height="16.2" rx="4" fill="#f4f4f4" opacity="0.9"/>
<rect x="684" y="227.5" width="25" height="14" rx="3" fill="url(#gBtn)" stroke="#7e7e7e" stroke-width="1" />
<text x="696.5" y="234.1" font-size="5" fill="#2a2a2a" text-anchor="middle" font-weight="bold" font-style="normal" >Clear</text>
<text x="696.5" y="238.9" font-size="5" fill="#2a2a2a" text-anchor="middle" font-weight="bold" font-style="normal" >Display</text>
<rect x="721.2" y="227.2" width="26.1" height="16.2" rx="4" fill="#f4f4f4" opacity="0.9"/>
<rect x="722" y="227.5" width="24.5" height="14" rx="3" fill="url(#gBtn)" stroke="#7e7e7e" stroke-width="1" />
<text x="734.25" y="236.3" font-size="5" fill="#2a2a2a" text-anchor="middle" font-weight="bold" font-style="normal" >Utility</text>
<rect x="754.7" y="227.2" width="26.1" height="16.2" rx="4" fill="#f4f4f4" opacity="0.9"/>
<rect x="755.5" y="227.5" width="24.5" height="14" rx="3" fill="url(#gBtn)" stroke="#7e7e7e" stroke-width="1" />
<text x="767.75" y="234.1" font-size="5" fill="#2a2a2a" text-anchor="middle" font-weight="bold" font-style="normal" >Quick</text>
<text x="767.75" y="238.9" font-size="5" fill="#2a2a2a" text-anchor="middle" font-weight="bold" font-style="normal" >Action</text>
<rect x="683.2" y="253.2" width="26.6" height="16.2" rx="4" fill="#f4f4f4" opacity="0.9"/>
<rect x="684" y="253.5" width="25" height="14" rx="3" fill="#cfcfcf" stroke="#a0a0a0" stroke-width="1" />
<text x="696.5" y="262.3" font-size="5" fill="#b4b4b4" text-anchor="middle" font-weight="bold" font-style="normal" >Touch</text>
<rect x="719.5" y="251" width="29.5" height="19" rx="5" fill="#58b8ff" filter="url(#blur2)" opacity="0.6"/>
<rect x="722" y="253.5" width="24.5" height="14" rx="3" fill="#4cb0fa" stroke="#3a94e0" stroke-width="1" />
<text x="734.2" y="259.8" font-size="5" fill="#1438a8" text-anchor="middle" font-weight="bold" font-style="normal" >Wave</text>
<text x="734.2" y="265.2" font-size="5" fill="#1438a8" text-anchor="middle" font-weight="bold" font-style="normal" >Gen1</text>
<rect x="753.0" y="251" width="29.5" height="19" rx="5" fill="#58b8ff" filter="url(#blur2)" opacity="0.6"/>
<rect x="755.5" y="253.5" width="24.5" height="14" rx="3" fill="#4cb0fa" stroke="#3a94e0" stroke-width="1" />
<text x="767.7" y="259.8" font-size="5" fill="#1438a8" text-anchor="middle" font-weight="bold" font-style="normal" >Wave</text>
<text x="767.7" y="265.2" font-size="5" fill="#1438a8" text-anchor="middle" font-weight="bold" font-style="normal" >Gen2</text>
<rect x="609" y="215.5" width="65.5" height="62" rx="6" fill="#262626" />
<rect x="610.6" y="217.1" width="62.3" height="58.8" rx="4.5" fill="#74747c" />
<circle cx="629" cy="234.6" r="13.2" fill="#5a5a62" filter="url(#blur1)" opacity="0.75"/>
<circle cx="629" cy="234" r="12.2" fill="#66666e" filter="url(#blur1)"/>
<circle cx="629" cy="234" r="10.399999999999999" fill="none" stroke="#8e8e96" stroke-width="2.6" stroke-dasharray="1.1 1.5" opacity="0.8"/>
<circle cx="629" cy="234" r="8.4" fill="#9a9aa0" />
<circle cx="629" cy="234" r="7.5" fill="url(#gKnob)" />
<circle cx="657" cy="235.5" r="6" fill="#b8e020" filter="url(#blur2)" opacity="0.7"/>
<path d="M653 239 a5 5 0 0 1 4 -8.5 l-0.8 -2.2 l5 3 l-4.6 3.4 l0.3 -2.2 a3 3 0 0 0 -2 4.6 z" fill="#d8f040"/>
<path d="M661 232.5 a5 5 0 0 1 -3.6 8 l0.3 -2.2 a3 3 0 0 0 1.6 -4.4 z" fill="#a8c828"/>
<text x="630.5" y="255.8" font-size="4.4" fill="#c8c8cc" text-anchor="middle" font-weight="bold" font-style="normal" >Push to Select</text>
<circle cx="621.3" cy="264" r="5.6" fill="#90b060" filter="url(#blur1)"/>
<circle cx="621.3" cy="264" r="4.2" fill="#b4d088" stroke="#88a858" stroke-width="0.8" />
<text x="630" y="265.8" font-size="4.4" fill="#d0d0d4" text-anchor="start" font-weight="bold" font-style="normal" >Intensity</text>
<text x="817" y="107" font-size="3.6" fill="#9a9a9a" text-anchor="middle" font-weight="normal" font-style="normal" >Push for Fine</text>
<path d="M806 125 L794.5 125 L794.5 260 L807 260" fill="none" stroke="#2a2a2a" stroke-width="1.2" />
<circle cx="818.5" cy="123.1" r="12.8" fill="#9a9a9a" filter="url(#blur1)" opacity="0.75"/>
<circle cx="818.5" cy="122.5" r="11.8" fill="#787878" filter="url(#blur1)"/>
<circle cx="818.5" cy="122.5" r="10.0" fill="none" stroke="#929292" stroke-width="2.6" stroke-dasharray="1.1 1.5" opacity="0.8"/>
<circle cx="818.5" cy="122.5" r="8.6" fill="#bcbcbc" />
<circle cx="818.5" cy="122.5" r="7.7" fill="url(#gKnob)" />
<rect x="836" y="118" width="4.2" height="10.5" rx="1.5" fill="#9a9a9a" stroke="#858585" stroke-width="0.6" />
<path d="M801.30 137.20 C801.42 137.07 801.73 136.53 802.00 136.40 C802.27 136.27 802.48 135.90 802.90 136.40 C803.32 136.90 803.95 138.37 804.50 139.40 C805.05 140.43 805.70 142.13 806.20 142.60 C806.70 143.07 807.03 142.68 807.50 142.20 C807.97 141.72 808.75 140.12 809.00 139.70" fill="none" stroke="#1e1e1e" stroke-width="1.4" stroke-linecap="round" stroke-linejoin="round"/>
<path d="M830.00 138.00 C830.10 137.57 830.27 136.07 830.60 135.40 C830.93 134.73 831.45 133.35 832.00 134.00 C832.55 134.65 833.30 137.53 833.90 139.30 C834.50 141.07 835.12 143.88 835.60 144.60 C836.08 145.32 836.52 144.25 836.80 143.60 C837.08 142.95 837.22 141.18 837.30 140.70" fill="none" stroke="#1e1e1e" stroke-width="1.6" stroke-linecap="round" stroke-linejoin="round"/>
<line x1="794.5" y1="160.2" x2="806" y2="160.2" stroke="#555" stroke-width="1" />
<circle cx="794.5" cy="160.2" r="1.4" fill="#2a2a2a" />
<rect x="805" y="153.2" width="26.5" height="15.5" rx="4" fill="#d8d8d8" opacity="0.9"/>
<rect x="805.8" y="153.5" width="25" height="13.5" rx="3" fill="#a6a6a6" stroke="#868686" stroke-width="1" />
<text x="818.3" y="162.3" font-size="5.5" fill="#f2f2f2" text-anchor="middle" font-weight="bold" font-style="normal" >Serial</text>
<line x1="794.5" y1="183.7" x2="806" y2="183.7" stroke="#555" stroke-width="1" />
<circle cx="794.5" cy="183.7" r="1.4" fill="#2a2a2a" />
<rect x="805" y="176.7" width="26.5" height="15.5" rx="4" fill="#d8d8d8" opacity="0.9"/>
<rect x="805.8" y="177" width="25" height="13.5" rx="3" fill="#a6a6a6" stroke="#868686" stroke-width="1" />
<text x="818.3" y="185.8" font-size="5.5" fill="#f2f2f2" text-anchor="middle" font-weight="bold" font-style="normal" >Digital</text>
<line x1="794.5" y1="207.7" x2="806" y2="207.7" stroke="#555" stroke-width="1" />
<circle cx="794.5" cy="207.7" r="1.4" fill="#2a2a2a" />
<rect x="805" y="200.7" width="26.5" height="15.5" rx="4" fill="#d8d8d8" opacity="0.9"/>
<rect x="805.8" y="201" width="25" height="13.5" rx="3" fill="#a6a6a6" stroke="#868686" stroke-width="1" />
<text x="818.3" y="209.8" font-size="5.5" fill="#f2f2f2" text-anchor="middle" font-weight="bold" font-style="normal" >Math</text>
<line x1="794.5" y1="231.2" x2="806" y2="231.2" stroke="#555" stroke-width="1" />
<circle cx="794.5" cy="231.2" r="1.4" fill="#2a2a2a" />
<rect x="805" y="224.2" width="26.5" height="15.5" rx="4" fill="#d8d8d8" opacity="0.9"/>
<rect x="805.8" y="224.5" width="25" height="13.5" rx="3" fill="#a6a6a6" stroke="#868686" stroke-width="1" />
<text x="818.3" y="233.3" font-size="5.5" fill="#f2f2f2" text-anchor="middle" font-weight="bold" font-style="normal" >Ref</text>
<path d="M792.5 228 L798.5 231.2 L792.5 234.4 Z" fill="#ffffff" />
<circle cx="818.5" cy="260.1" r="13.5" fill="#9a9a9a" filter="url(#blur1)" opacity="0.75"/>
<circle cx="818.5" cy="259.5" r="12.5" fill="#787878" filter="url(#blur1)"/>
<circle cx="818.5" cy="259.5" r="10.7" fill="none" stroke="#929292" stroke-width="2.6" stroke-dasharray="1.1 1.5" opacity="0.8"/>
<circle cx="818.5" cy="259.5" r="8.9" fill="#bcbcbc" />
<circle cx="818.5" cy="259.5" r="8" fill="url(#gKnob)" />
<path d="M836 257 L841 257 L838.5 251.5 Z" fill="#222" />
<path d="M836 264.5 L841 264.5 L838.5 270 Z" fill="#222" />
<text x="818.5" y="279.5" font-size="3.6" fill="#9a9a9a" text-anchor="middle" font-weight="normal" font-style="normal" >Push to</text>
<text x="818.5" y="283" font-size="3.6" fill="#9a9a9a" text-anchor="middle" font-weight="normal" font-style="normal" >Zero</text>
<linearGradient id="gVb1" x1="0" x2="1"><stop offset="0" stop-color="#8e8e98" stop-opacity="0"/><stop offset="0.35" stop-color="#8e8e98" stop-opacity="0.7"/><stop offset="1" stop-color="#85858f"/></linearGradient>
<linearGradient id="gVb2" x1="1" x2="0"><stop offset="0" stop-color="#8e8e98" stop-opacity="0"/><stop offset="0.35" stop-color="#8e8e98" stop-opacity="0.7"/><stop offset="1" stop-color="#85858f"/></linearGradient>
<rect x="609" y="290" width="97" height="4" rx="0" fill="url(#gVb1)" filter="url(#blur1)"/>
<rect x="744" y="290" width="97" height="4" rx="0" fill="url(#gVb2)" filter="url(#blur1)"/>
<text x="725" y="295" font-size="8.5" fill="#1e1e1e" text-anchor="middle" font-weight="bold" font-style="normal" >Vertical</text>
<path d="M625 329 L633 329 L638.5 343 L638.5 369 L633 379 L625 379 L619.5 369 L619.5 343 Z" fill="#ecd476" stroke-linejoin="round"/>
<circle cx="629" cy="313.6" r="18.6" fill="#9a9a9a" filter="url(#blur1)" opacity="0.75"/>
<circle cx="629" cy="313" r="17.6" fill="#787878" filter="url(#blur1)"/>
<circle cx="629" cy="313" r="15.8" fill="none" stroke="#929292" stroke-width="2.6" stroke-dasharray="1.1 1.5" opacity="0.8"/>
<circle cx="629" cy="313" r="13.5" fill="#bcbcbc" />
<circle cx="629" cy="313" r="12.6" fill="url(#gKnob)" />
<path d="M609.30 333.50 C609.42 333.37 609.73 332.83 610.00 332.70 C610.27 332.57 610.48 332.20 610.90 332.70 C611.32 333.20 611.95 334.67 612.50 335.70 C613.05 336.73 613.70 338.43 614.20 338.90 C614.70 339.37 615.03 338.98 615.50 338.50 C615.97 338.02 616.75 336.42 617.00 336.00" fill="none" stroke="#1e1e1e" stroke-width="1.4" stroke-linecap="round" stroke-linejoin="round"/>
<path d="M642.50 332.70 C642.60 332.27 642.77 330.77 643.10 330.10 C643.43 329.43 643.95 328.05 644.50 328.70 C645.05 329.35 645.80 332.23 646.40 334.00 C647.00 335.77 647.62 338.58 648.10 339.30 C648.58 340.02 649.02 338.95 649.30 338.30 C649.58 337.65 649.72 335.88 649.80 335.40" fill="none" stroke="#1e1e1e" stroke-width="1.6" stroke-linecap="round" stroke-linejoin="round"/>
<rect x="622" y="344.5" width="14" height="23.5" rx="2.5" fill="#a8a8a8" stroke="#7a7a7a" stroke-width="1" />
<text x="629" y="360.5" font-size="11" fill="#ffffff" text-anchor="middle" font-weight="bold" font-style="normal" >1</text>
<circle cx="629" cy="389.6" r="12.5" fill="#9a9a9a" filter="url(#blur1)" opacity="0.75"/>
<circle cx="629" cy="389" r="11.5" fill="#787878" filter="url(#blur1)"/>
<circle cx="629" cy="389" r="9.7" fill="none" stroke="#929292" stroke-width="2.6" stroke-dasharray="1.1 1.5" opacity="0.8"/>
<circle cx="629" cy="389" r="8.4" fill="#bcbcbc" />
<circle cx="629" cy="389" r="7.5" fill="url(#gKnob)" />
<path d="M645.5 386.5 L650.5 386.5 L648 381 Z" fill="#222" />
<path d="M645.5 393 L650.5 393 L648 398.5 Z" fill="#222" />
<text x="629" y="419.3" font-size="5.2" fill="#3a3a3a" text-anchor="middle" font-weight="normal" font-style="normal" >50Ω</text>
<path d="M688.5 329 L696.5 329 L702.0 343 L702.0 369 L696.5 379 L688.5 379 L683.0 369 L683.0 343 Z" fill="#7ccc5c" stroke-linejoin="round"/>
<circle cx="692.5" cy="313.6" r="18.6" fill="#9a9a9a" filter="url(#blur1)" opacity="0.75"/>
<circle cx="692.5" cy="313" r="17.6" fill="#787878" filter="url(#blur1)"/>
<circle cx="692.5" cy="313" r="15.8" fill="none" stroke="#929292" stroke-width="2.6" stroke-dasharray="1.1 1.5" opacity="0.8"/>
<circle cx="692.5" cy="313" r="13.5" fill="#bcbcbc" />
<circle cx="692.5" cy="313" r="12.6" fill="url(#gKnob)" />
<path d="M672.80 333.50 C672.92 333.37 673.23 332.83 673.50 332.70 C673.77 332.57 673.98 332.20 674.40 332.70 C674.82 333.20 675.45 334.67 676.00 335.70 C676.55 336.73 677.20 338.43 677.70 338.90 C678.20 339.37 678.53 338.98 679.00 338.50 C679.47 338.02 680.25 336.42 680.50 336.00" fill="none" stroke="#1e1e1e" stroke-width="1.4" stroke-linecap="round" stroke-linejoin="round"/>
<path d="M706.00 332.70 C706.10 332.27 706.27 330.77 706.60 330.10 C706.93 329.43 707.45 328.05 708.00 328.70 C708.55 329.35 709.30 332.23 709.90 334.00 C710.50 335.77 711.12 338.58 711.60 339.30 C712.08 340.02 712.52 338.95 712.80 338.30 C713.08 337.65 713.22 335.88 713.30 335.40" fill="none" stroke="#1e1e1e" stroke-width="1.6" stroke-linecap="round" stroke-linejoin="round"/>
<rect x="685.5" y="344.5" width="14" height="23.5" rx="2.5" fill="#a8a8a8" stroke="#7a7a7a" stroke-width="1" />
<text x="692.5" y="360.5" font-size="11" fill="#ffffff" text-anchor="middle" font-weight="bold" font-style="normal" >2</text>
<circle cx="692.5" cy="389.6" r="12.5" fill="#9a9a9a" filter="url(#blur1)" opacity="0.75"/>
<circle cx="692.5" cy="389" r="11.5" fill="#787878" filter="url(#blur1)"/>
<circle cx="692.5" cy="389" r="9.7" fill="none" stroke="#929292" stroke-width="2.6" stroke-dasharray="1.1 1.5" opacity="0.8"/>
<circle cx="692.5" cy="389" r="8.4" fill="#bcbcbc" />
<circle cx="692.5" cy="389" r="7.5" fill="url(#gKnob)" />
<path d="M709.0 386.5 L714.0 386.5 L711.5 381 Z" fill="#222" />
<path d="M709.0 393 L714.0 393 L711.5 398.5 Z" fill="#222" />
<text x="692.5" y="419.3" font-size="5.2" fill="#3a3a3a" text-anchor="middle" font-weight="normal" font-style="normal" >50Ω</text>
<path d="M752 329 L760 329 L765.5 343 L765.5 369 L760 379 L752 379 L746.5 369 L746.5 343 Z" fill="#3c78d4" stroke-linejoin="round"/>
<circle cx="756" cy="313.6" r="18.6" fill="#9a9a9a" filter="url(#blur1)" opacity="0.75"/>
<circle cx="756" cy="313" r="17.6" fill="#787878" filter="url(#blur1)"/>
<circle cx="756" cy="313" r="15.8" fill="none" stroke="#929292" stroke-width="2.6" stroke-dasharray="1.1 1.5" opacity="0.8"/>
<circle cx="756" cy="313" r="13.5" fill="#bcbcbc" />
<circle cx="756" cy="313" r="12.6" fill="url(#gKnob)" />
<path d="M736.30 333.50 C736.42 333.37 736.73 332.83 737.00 332.70 C737.27 332.57 737.48 332.20 737.90 332.70 C738.32 333.20 738.95 334.67 739.50 335.70 C740.05 336.73 740.70 338.43 741.20 338.90 C741.70 339.37 742.03 338.98 742.50 338.50 C742.97 338.02 743.75 336.42 744.00 336.00" fill="none" stroke="#1e1e1e" stroke-width="1.4" stroke-linecap="round" stroke-linejoin="round"/>
<path d="M769.50 332.70 C769.60 332.27 769.77 330.77 770.10 330.10 C770.43 329.43 770.95 328.05 771.50 328.70 C772.05 329.35 772.80 332.23 773.40 334.00 C774.00 335.77 774.62 338.58 775.10 339.30 C775.58 340.02 776.02 338.95 776.30 338.30 C776.58 337.65 776.72 335.88 776.80 335.40" fill="none" stroke="#1e1e1e" stroke-width="1.6" stroke-linecap="round" stroke-linejoin="round"/>
<rect x="749" y="344.5" width="14" height="23.5" rx="2.5" fill="#a8a8a8" stroke="#7a7a7a" stroke-width="1" />
<text x="756" y="360.5" font-size="11" fill="#ffffff" text-anchor="middle" font-weight="bold" font-style="normal" >3</text>
<circle cx="756" cy="389.6" r="12.5" fill="#9a9a9a" filter="url(#blur1)" opacity="0.75"/>
<circle cx="756" cy="389" r="11.5" fill="#787878" filter="url(#blur1)"/>
<circle cx="756" cy="389" r="9.7" fill="none" stroke="#929292" stroke-width="2.6" stroke-dasharray="1.1 1.5" opacity="0.8"/>
<circle cx="756" cy="389" r="8.4" fill="#bcbcbc" />
<circle cx="756" cy="389" r="7.5" fill="url(#gKnob)" />
<path d="M772.5 386.5 L777.5 386.5 L775 381 Z" fill="#222" />
<path d="M772.5 393 L777.5 393 L775 398.5 Z" fill="#222" />
<text x="756" y="419.3" font-size="5.2" fill="#3a3a3a" text-anchor="middle" font-weight="normal" font-style="normal" >50Ω</text>
<path d="M816 329 L824 329 L829.5 343 L829.5 369 L824 379 L816 379 L810.5 369 L810.5 343 Z" fill="#e85454" stroke-linejoin="round"/>
<circle cx="820" cy="313.6" r="18.6" fill="#9a9a9a" filter="url(#blur1)" opacity="0.75"/>
<circle cx="820" cy="313" r="17.6" fill="#787878" filter="url(#blur1)"/>
<circle cx="820" cy="313" r="15.8" fill="none" stroke="#929292" stroke-width="2.6" stroke-dasharray="1.1 1.5" opacity="0.8"/>
<circle cx="820" cy="313" r="13.5" fill="#bcbcbc" />
<circle cx="820" cy="313" r="12.6" fill="url(#gKnob)" />
<path d="M800.30 333.50 C800.42 333.37 800.73 332.83 801.00 332.70 C801.27 332.57 801.48 332.20 801.90 332.70 C802.32 333.20 802.95 334.67 803.50 335.70 C804.05 336.73 804.70 338.43 805.20 338.90 C805.70 339.37 806.03 338.98 806.50 338.50 C806.97 338.02 807.75 336.42 808.00 336.00" fill="none" stroke="#1e1e1e" stroke-width="1.4" stroke-linecap="round" stroke-linejoin="round"/>
<path d="M833.50 332.70 C833.60 332.27 833.77 330.77 834.10 330.10 C834.43 329.43 834.95 328.05 835.50 328.70 C836.05 329.35 836.80 332.23 837.40 334.00 C838.00 335.77 838.62 338.58 839.10 339.30 C839.58 340.02 840.02 338.95 840.30 338.30 C840.58 337.65 840.72 335.88 840.80 335.40" fill="none" stroke="#1e1e1e" stroke-width="1.6" stroke-linecap="round" stroke-linejoin="round"/>
<rect x="813" y="344.5" width="14" height="23.5" rx="2.5" fill="#a8a8a8" stroke="#7a7a7a" stroke-width="1" />
<text x="820" y="360.5" font-size="11" fill="#ffffff" text-anchor="middle" font-weight="bold" font-style="normal" >4</text>
<circle cx="820" cy="389.6" r="12.5" fill="#9a9a9a" filter="url(#blur1)" opacity="0.75"/>
<circle cx="820" cy="389" r="11.5" fill="#787878" filter="url(#blur1)"/>
<circle cx="820" cy="389" r="9.7" fill="none" stroke="#929292" stroke-width="2.6" stroke-dasharray="1.1 1.5" opacity="0.8"/>
<circle cx="820" cy="389" r="8.4" fill="#bcbcbc" />
<circle cx="820" cy="389" r="7.5" fill="url(#gKnob)" />
<path d="M836.5 386.5 L841.5 386.5 L839 381 Z" fill="#222" />
<path d="M836.5 393 L841.5 393 L839 398.5 Z" fill="#222" />
<text x="820" y="419.3" font-size="5.2" fill="#3a3a3a" text-anchor="middle" font-weight="normal" font-style="normal" >50Ω</text>
<text x="660.5" y="312" font-size="3.6" fill="#9a9a9a" text-anchor="middle" font-weight="normal" font-style="normal" >Push for</text>
<text x="660.5" y="315.6" font-size="3.6" fill="#9a9a9a" text-anchor="middle" font-weight="normal" font-style="normal" >Fine</text>
<text x="787" y="312" font-size="3.6" fill="#9a9a9a" text-anchor="middle" font-weight="normal" font-style="normal" >Push for</text>
<text x="787" y="315.6" font-size="3.6" fill="#9a9a9a" text-anchor="middle" font-weight="normal" font-style="normal" >Fine</text>
<text x="664" y="389" font-size="3.6" fill="#9a9a9a" text-anchor="middle" font-weight="normal" font-style="normal" >Push to</text>
<text x="664" y="392.6" font-size="3.6" fill="#9a9a9a" text-anchor="middle" font-weight="normal" font-style="normal" >Zero</text>
<text x="792" y="389" font-size="3.6" fill="#9a9a9a" text-anchor="middle" font-weight="normal" font-style="normal" >Push to</text>
<text x="792" y="392.6" font-size="3.6" fill="#9a9a9a" text-anchor="middle" font-weight="normal" font-style="normal" >Zero</text>
<rect x="647.7" y="348.7" width="25.6" height="15.2" rx="4" fill="#f4f4f4" opacity="0.9"/>
<rect x="648.5" y="349" width="24" height="13" rx="3" fill="#aaaaaa" stroke="#7e7e7e" stroke-width="1" />
<text x="660.5" y="357.3" font-size="5" fill="#f0f0f0" text-anchor="middle" font-weight="bold" font-style="normal" >Label</text>
<rect x="711.2" y="348.7" width="26.6" height="15.2" rx="4" fill="#f4f4f4" opacity="0.9"/>
<rect x="712" y="349" width="25" height="13" rx="3" fill="#b0b0b0" stroke="#7e7e7e" stroke-width="1" />
<text x="724.5" y="357.3" font-size="5" fill="#2a2a2a" text-anchor="middle" font-weight="bold" font-style="normal" >Help</text>
<rect x="604.5" y="349" width="1.6" height="9" rx="0" fill="#111" />
<rect x="842.5" y="347" width="1.6" height="9" rx="0" fill="#111" />
<circle cx="67" cy="456" r="9.6" fill="#f2f2f2" />
<circle cx="67" cy="456" r="8.3" fill="#d4d4d4" stroke="#4a4a4a" stroke-width="1.4" />
<path d="M67 450.5 L70.5 454.5 L68.2 454.5 L68.2 457 L65.8 457 L65.8 454.5 L63.5 454.5 Z" fill="#333" />
<text x="67" y="461.5" font-size="3.4" fill="#333" text-anchor="middle" font-weight="bold" font-style="normal" >Back</text>
<rect x="109" y="448" width="35.5" height="17.5" rx="4" fill="#fafafa" />
<rect x="110" y="449" width="33.5" height="15" rx="3.5" fill="#b9bcc0" stroke="#8a8c90" stroke-width="0.9" />
<line x1="113" y1="464.6" x2="140.5" y2="464.6" stroke="#777" stroke-width="0.8" />
<rect x="188" y="448" width="35.5" height="17.5" rx="4" fill="#fafafa" />
<rect x="189" y="449" width="33.5" height="15" rx="3.5" fill="#b9bcc0" stroke="#8a8c90" stroke-width="0.9" />
<line x1="192" y1="464.6" x2="219.5" y2="464.6" stroke="#777" stroke-width="0.8" />
<rect x="267" y="448" width="35.5" height="17.5" rx="4" fill="#fafafa" />
<rect x="268" y="449" width="33.5" height="15" rx="3.5" fill="#b9bcc0" stroke="#8a8c90" stroke-width="0.9" />
<line x1="271" y1="464.6" x2="298.5" y2="464.6" stroke="#777" stroke-width="0.8" />
<rect x="346" y="448" width="35.5" height="17.5" rx="4" fill="#fafafa" />
<rect x="347" y="449" width="33.5" height="15" rx="3.5" fill="#b9bcc0" stroke="#8a8c90" stroke-width="0.9" />
<line x1="350" y1="464.6" x2="377.5" y2="464.6" stroke="#777" stroke-width="0.8" />
<rect x="425" y="448" width="35.5" height="17.5" rx="4" fill="#fafafa" />
<rect x="426" y="449" width="33.5" height="15" rx="3.5" fill="#b9bcc0" stroke="#8a8c90" stroke-width="0.9" />
<line x1="429" y1="464.6" x2="456.5" y2="464.6" stroke="#777" stroke-width="0.8" />
<rect x="504.5" y="448" width="35.5" height="17.5" rx="4" fill="#fafafa" />
<rect x="505.5" y="449" width="33.5" height="15" rx="3.5" fill="#b9bcc0" stroke="#8a8c90" stroke-width="0.9" />
<line x1="508.5" y1="464.6" x2="536.0" y2="464.6" stroke="#777" stroke-width="0.8" />
<rect x="72.5" y="495.5" width="30" height="21" rx="4.5" fill="#c4c4c4" />
<rect x="74" y="497" width="27" height="18" rx="3.5" fill="#fcfcfc" stroke="#a8a8a8" stroke-width="0.8" />
<path d="M85 503.8 a3 3 0 1 0 4.4 0" fill="none" stroke="#b0b0b0" stroke-width="0.9"/>
<line x1="87.2" y1="502.3" x2="87.2" y2="505.5" stroke="#b0b0b0" stroke-width="0.9" />
<linearGradient id="gRec" x1="0" x2="1"><stop offset="0" stop-color="#ececec"/><stop offset="0.5" stop-color="#dedede"/><stop offset="1" stop-color="#e4e4e4"/></linearGradient>
<path d="M128 471 Q140 471 140 483 L140 526 L156 526 L156 471 Z" fill="url(#gRec)" />
<rect x="156" y="475.5" width="286" height="49.5" rx="0" fill="#e1e1e1" />
<line x1="156" y1="476" x2="442" y2="476" stroke="#cfcfcf" stroke-width="1.2" />
<line x1="156.5" y1="475.5" x2="156.5" y2="525" stroke="#d2d2d2" stroke-width="1" />
<rect x="156" y="522.5" width="286" height="3" rx="0" fill="#efefef" />
<circle cx="185" cy="500" r="15" fill="#ededed" stroke="#d6d6d6" stroke-width="0.9" />
<circle cx="185" cy="500" r="12" fill="#e6e6e6" stroke="#dadada" stroke-width="0.7" />
<circle cx="185" cy="500" r="9.6" fill="#a39584" />
<circle cx="185" cy="500" r="9.6" fill="none" stroke="#8e8272" stroke-width="0.8" />
<circle cx="185" cy="500" r="6.4" fill="#b2a594" />
<circle cx="185" cy="500" r="4.2" fill="#9a8c7a" />
<circle cx="185" cy="500" r="1.6" fill="#5e5446" />
<rect x="183.7" y="487.8" width="2.6" height="2.2" rx="0" fill="#555" />
<rect x="183.7" y="510.2" width="2.6" height="2.0" rx="0" fill="#9a9a9a" />
<circle cx="252" cy="500" r="15" fill="#ededed" stroke="#d6d6d6" stroke-width="0.9" />
<circle cx="252" cy="500" r="12" fill="#e6e6e6" stroke="#dadada" stroke-width="0.7" />
<circle cx="252" cy="500" r="9.6" fill="#a39584" />
<circle cx="252" cy="500" r="9.6" fill="none" stroke="#8e8272" stroke-width="0.8" />
<circle cx="252" cy="500" r="6.4" fill="#b2a594" />
<circle cx="252" cy="500" r="4.2" fill="#9a8c7a" />
<circle cx="252" cy="500" r="1.6" fill="#5e5446" />
<rect x="250.7" y="487.8" width="2.6" height="2.2" rx="0" fill="#555" />
<rect x="250.7" y="510.2" width="2.6" height="2.0" rx="0" fill="#9a9a9a" />
<circle cx="319.5" cy="500" r="15" fill="#ededed" stroke="#d6d6d6" stroke-width="0.9" />
<circle cx="319.5" cy="500" r="12" fill="#e6e6e6" stroke="#dadada" stroke-width="0.7" />
<circle cx="319.5" cy="500" r="9.6" fill="#a39584" />
<circle cx="319.5" cy="500" r="9.6" fill="none" stroke="#8e8272" stroke-width="0.8" />
<circle cx="319.5" cy="500" r="6.4" fill="#b2a594" />
<circle cx="319.5" cy="500" r="4.2" fill="#9a8c7a" />
<circle cx="319.5" cy="500" r="1.6" fill="#5e5446" />
<rect x="318.2" y="487.8" width="2.6" height="2.2" rx="0" fill="#555" />
<rect x="318.2" y="510.2" width="2.6" height="2.0" rx="0" fill="#9a9a9a" />
<text x="185" y="522" font-size="5.4" fill="#cacaca" text-anchor="middle" font-weight="normal" font-style="normal" textLength="41" lengthAdjust="spacing">GEN OUT 1</text>
<text x="252" y="522" font-size="5.4" fill="#cacaca" text-anchor="middle" font-weight="normal" font-style="normal" textLength="41" lengthAdjust="spacing">GEN OUT 2</text>
<text x="318" y="482" font-size="5.4" fill="#cacaca" text-anchor="middle" font-weight="normal" font-style="normal" textLength="47" lengthAdjust="spacing">EXT TRIG IN</text>
<text x="300" y="492.5" font-size="4.6" fill="#cacaca" text-anchor="middle" font-weight="normal" font-style="normal" >Z</text>
<text x="298" y="516" font-size="4.4" fill="#cacaca" text-anchor="middle" font-weight="normal" font-style="normal" >EXT</text>
<text x="301" y="521.5" font-size="4.4" fill="#cacaca" text-anchor="middle" font-weight="normal" font-style="normal" >300 Vrms</text>
<path d="M336 521.5 L342 521.5 L339 516.5 Z" fill="none" stroke="#c4c4c4" stroke-width="0.7" />
<rect x="354" y="476.5" width="87" height="46" rx="0" fill="#e9e9e9" stroke="#d4d4d4" stroke-width="1" />
<rect x="363.5" y="491.6" width="30.6" height="15.6" rx="1.5" fill="#f4f4f4" />
<rect x="364.5" y="492.5" width="28.6" height="13.8" rx="1.2" fill="#161616" />
<rect x="368.0" y="499.6" width="21.6" height="3.4" rx="0.5" fill="#5a5a5a" />
<rect x="367.0" y="503.6" width="23.6" height="1.6" rx="0" fill="#2e2e2e" />
<text x="378.8" y="513.5" font-size="4" fill="#cdcdcd" text-anchor="middle" font-weight="normal" font-style="normal" >•←</text>
<text x="378.8" y="518.5" font-size="3.6" fill="#d0d0d0" text-anchor="middle" font-weight="normal" font-style="normal" >USB</text>
<rect x="405.8" y="491.6" width="30.6" height="15.6" rx="1.5" fill="#f4f4f4" />
<rect x="406.8" y="492.5" width="28.6" height="13.8" rx="1.2" fill="#161616" />
<rect x="410.3" y="499.6" width="21.6" height="3.4" rx="0.5" fill="#5a5a5a" />
<rect x="409.3" y="503.6" width="23.6" height="1.6" rx="0" fill="#2e2e2e" />
<text x="421.1" y="513.5" font-size="4" fill="#cdcdcd" text-anchor="middle" font-weight="normal" font-style="normal" >•←</text>
<text x="421.1" y="518.5" font-size="3.6" fill="#d0d0d0" text-anchor="middle" font-weight="normal" font-style="normal" >USB</text>
<rect x="445" y="476" width="80" height="48" rx="0" fill="#e4e4e4" stroke="#d0d0d0" stroke-width="1" />
<line x1="445" y1="476.5" x2="525" y2="476.5" stroke="#c6c6c6" stroke-width="1.2" />
<text x="467.7" y="488" font-size="5.4" fill="#c8c8c8" text-anchor="middle" font-weight="normal" font-style="normal" textLength="26" lengthAdjust="spacing">Demo 2</text>
<text x="507.3" y="488" font-size="5.4" fill="#c8c8c8" text-anchor="middle" font-weight="normal" font-style="normal" textLength="25" lengthAdjust="spacing">Demo 1</text>
<rect x="461.2" y="494.5" width="1.8" height="10" rx="0" fill="#9a9a9a" opacity="0.8"/>
<rect x="507" y="494.5" width="1.8" height="10" rx="0" fill="#9a9a9a" opacity="0.8"/>
<rect x="472" y="501" width="25.5" height="4.6" rx="2.3" fill="#fbfbfb" stroke="#a4a4a4" stroke-width="0.8" />
<circle cx="497.8" cy="503.4" r="1.2" fill="#444" />
<text x="454.5" y="514" font-size="5" fill="#cacaca" text-anchor="start" font-weight="normal" font-style="normal" >Probe  ⊓⊔</text>
<text x="454.5" y="520.5" font-size="5" fill="#cacaca" text-anchor="start" font-weight="normal" font-style="normal" >Comp</text>
<path d="M540 526 L540 472 Q540 447 566 447 L822 447 Q847 447 847 472 L847 526 Z" fill="#e5e5e5" />
<path d="M540 526 L540 472 Q540 447 566 447 L822 447 Q847 447 847 472 L847 526" fill="none" stroke="#cecece" stroke-width="1.1" />
<path d="M541.2 526 L541.2 473 Q541.2 448.4 566 448.4 L822 448.4 Q845.8 448.4 845.8 473 L845.8 526" fill="none" stroke="#f6f6f6" stroke-width="1" />
<rect x="566.5" y="454" width="24.5" height="12.5" rx="1" fill="#ecd04a" />
<text x="579" y="465" font-size="12" fill="#2a2a2a" text-anchor="middle" font-weight="bold" font-style="normal" >1</text>
<path d="M546 520 L546 497 Q546 470.5 571 470.5 L589 470.5 Q611 470.5 611 497 L611 514 Q611 525.5 599 525.5 L557 525.5 Q546 525.5 546 516 Z" fill="#dedede" stroke="#f0dc8c" stroke-width="2.2" />
<path d="M550.5 516 L550.5 499 Q550.5 475 572 475 L588 475 Q606.5 475 606.5 499 L606.5 513 Q606.5 521 598 521 L559 521 Q550.5 521 550.5 514 Z" fill="#d3d3d3" />
<circle cx="579" cy="494.5" r="17.3" fill="#c9a55a" />
<circle cx="579" cy="494.5" r="17.3" fill="none" stroke="#b08c44" stroke-width="0.8" />
<circle cx="579" cy="494.5" r="15" fill="#d6b46c" />
<circle cx="579" cy="494.5" r="11.3" fill="#e8e4dc" />
<circle cx="579" cy="494.5" r="10.3" fill="#2a2a2a" />
<circle cx="579" cy="494.5" r="8.4" fill="#d8d8d8" />
<circle cx="579" cy="494.5" r="7.2" fill="#3a3a3a" />
<circle cx="579" cy="494.5" r="5.4" fill="#f4f4f4" />
<circle cx="579" cy="494.5" r="1.5" fill="#c02818" />
<circle cx="556" cy="503.5" r="4.6" fill="#3c3c3c" />
<circle cx="556" cy="503.5" r="2.6" fill="#8a8a8a" />
<circle cx="556" cy="503.5" r="1.3" fill="#2a2a2a" />
<rect x="556.7" y="510.6" width="4.1" height="6" rx="0.6" fill="#f0cc48" />
<rect x="556.7" y="510.6" width="4.1" height="1.4" rx="0.5" fill="#c89c28" />
<rect x="556.7" y="515.2" width="4.1" height="1.4" rx="0.5" fill="#b48a20" />
<rect x="561.6500000000001" y="510.6" width="4.1" height="6" rx="0.6" fill="#f0cc48" />
<rect x="561.6500000000001" y="510.6" width="4.1" height="1.4" rx="0.5" fill="#c89c28" />
<rect x="561.6500000000001" y="515.2" width="4.1" height="1.4" rx="0.5" fill="#b48a20" />
<rect x="566.6" y="510.6" width="4.1" height="6" rx="0.6" fill="#f0cc48" />
<rect x="566.6" y="510.6" width="4.1" height="1.4" rx="0.5" fill="#c89c28" />
<rect x="566.6" y="515.2" width="4.1" height="1.4" rx="0.5" fill="#b48a20" />
<rect x="571.5500000000001" y="510.6" width="4.1" height="6" rx="0.6" fill="#f0cc48" />
<rect x="571.5500000000001" y="510.6" width="4.1" height="1.4" rx="0.5" fill="#c89c28" />
<rect x="571.5500000000001" y="515.2" width="4.1" height="1.4" rx="0.5" fill="#b48a20" />
<rect x="576.5" y="510.6" width="4.1" height="6" rx="0.6" fill="#f0cc48" />
<rect x="576.5" y="510.6" width="4.1" height="1.4" rx="0.5" fill="#c89c28" />
<rect x="576.5" y="515.2" width="4.1" height="1.4" rx="0.5" fill="#b48a20" />
<rect x="581.45" y="510.6" width="4.1" height="6" rx="0.6" fill="#f0cc48" />
<rect x="581.45" y="510.6" width="4.1" height="1.4" rx="0.5" fill="#c89c28" />
<rect x="581.45" y="515.2" width="4.1" height="1.4" rx="0.5" fill="#b48a20" />
<rect x="586.4000000000001" y="510.6" width="4.1" height="6" rx="0.6" fill="#f0cc48" />
<rect x="586.4000000000001" y="510.6" width="4.1" height="1.4" rx="0.5" fill="#c89c28" />
<rect x="586.4000000000001" y="515.2" width="4.1" height="1.4" rx="0.5" fill="#b48a20" />
<rect x="591.35" y="510.6" width="4.1" height="6" rx="0.6" fill="#f0cc48" />
<rect x="591.35" y="510.6" width="4.1" height="1.4" rx="0.5" fill="#c89c28" />
<rect x="591.35" y="515.2" width="4.1" height="1.4" rx="0.5" fill="#b48a20" />
<rect x="596.3000000000001" y="510.6" width="4.1" height="6" rx="0.6" fill="#f0cc48" />
<rect x="596.3000000000001" y="510.6" width="4.1" height="1.4" rx="0.5" fill="#c89c28" />
<rect x="596.3000000000001" y="515.2" width="4.1" height="1.4" rx="0.5" fill="#b48a20" />
<rect x="643.0" y="454" width="24.5" height="12.5" rx="1" fill="#a6dc90" />
<text x="655.5" y="465" font-size="12" fill="#2a2a2a" text-anchor="middle" font-weight="bold" font-style="normal" >2</text>
<path d="M622.5 520 L622.5 497 Q622.5 470.5 647.5 470.5 L665.5 470.5 Q687.5 470.5 687.5 497 L687.5 514 Q687.5 525.5 675.5 525.5 L633.5 525.5 Q622.5 525.5 622.5 516 Z" fill="#dedede" stroke="#b8e4a4" stroke-width="2.2" />
<path d="M627.0 516 L627.0 499 Q627.0 475 648.5 475 L664.5 475 Q683.0 475 683.0 499 L683.0 513 Q683.0 521 674.5 521 L635.5 521 Q627.0 521 627.0 514 Z" fill="#d3d3d3" />
<circle cx="655.5" cy="494.5" r="17.3" fill="#c9a55a" />
<circle cx="655.5" cy="494.5" r="17.3" fill="none" stroke="#b08c44" stroke-width="0.8" />
<circle cx="655.5" cy="494.5" r="15" fill="#d6b46c" />
<circle cx="655.5" cy="494.5" r="11.3" fill="#e8e4dc" />
<circle cx="655.5" cy="494.5" r="10.3" fill="#2a2a2a" />
<circle cx="655.5" cy="494.5" r="8.4" fill="#d8d8d8" />
<circle cx="655.5" cy="494.5" r="7.2" fill="#3a3a3a" />
<circle cx="655.5" cy="494.5" r="5.4" fill="#f4f4f4" />
<circle cx="655.5" cy="494.5" r="1.5" fill="#c02818" />
<circle cx="632.5" cy="503.5" r="4.6" fill="#3c3c3c" />
<circle cx="632.5" cy="503.5" r="2.6" fill="#8a8a8a" />
<circle cx="632.5" cy="503.5" r="1.3" fill="#2a2a2a" />
<rect x="633.2" y="510.6" width="4.1" height="6" rx="0.6" fill="#f0cc48" />
<rect x="633.2" y="510.6" width="4.1" height="1.4" rx="0.5" fill="#c89c28" />
<rect x="633.2" y="515.2" width="4.1" height="1.4" rx="0.5" fill="#b48a20" />
<rect x="638.1500000000001" y="510.6" width="4.1" height="6" rx="0.6" fill="#f0cc48" />
<rect x="638.1500000000001" y="510.6" width="4.1" height="1.4" rx="0.5" fill="#c89c28" />
<rect x="638.1500000000001" y="515.2" width="4.1" height="1.4" rx="0.5" fill="#b48a20" />
<rect x="643.1" y="510.6" width="4.1" height="6" rx="0.6" fill="#f0cc48" />
<rect x="643.1" y="510.6" width="4.1" height="1.4" rx="0.5" fill="#c89c28" />
<rect x="643.1" y="515.2" width="4.1" height="1.4" rx="0.5" fill="#b48a20" />
<rect x="648.0500000000001" y="510.6" width="4.1" height="6" rx="0.6" fill="#f0cc48" />
<rect x="648.0500000000001" y="510.6" width="4.1" height="1.4" rx="0.5" fill="#c89c28" />
<rect x="648.0500000000001" y="515.2" width="4.1" height="1.4" rx="0.5" fill="#b48a20" />
<rect x="653.0" y="510.6" width="4.1" height="6" rx="0.6" fill="#f0cc48" />
<rect x="653.0" y="510.6" width="4.1" height="1.4" rx="0.5" fill="#c89c28" />
<rect x="653.0" y="515.2" width="4.1" height="1.4" rx="0.5" fill="#b48a20" />
<rect x="657.95" y="510.6" width="4.1" height="6" rx="0.6" fill="#f0cc48" />
<rect x="657.95" y="510.6" width="4.1" height="1.4" rx="0.5" fill="#c89c28" />
<rect x="657.95" y="515.2" width="4.1" height="1.4" rx="0.5" fill="#b48a20" />
<rect x="662.9000000000001" y="510.6" width="4.1" height="6" rx="0.6" fill="#f0cc48" />
<rect x="662.9000000000001" y="510.6" width="4.1" height="1.4" rx="0.5" fill="#c89c28" />
<rect x="662.9000000000001" y="515.2" width="4.1" height="1.4" rx="0.5" fill="#b48a20" />
<rect x="667.85" y="510.6" width="4.1" height="6" rx="0.6" fill="#f0cc48" />
<rect x="667.85" y="510.6" width="4.1" height="1.4" rx="0.5" fill="#c89c28" />
<rect x="667.85" y="515.2" width="4.1" height="1.4" rx="0.5" fill="#b48a20" />
<rect x="672.8000000000001" y="510.6" width="4.1" height="6" rx="0.6" fill="#f0cc48" />
<rect x="672.8000000000001" y="510.6" width="4.1" height="1.4" rx="0.5" fill="#c89c28" />
<rect x="672.8000000000001" y="515.2" width="4.1" height="1.4" rx="0.5" fill="#b48a20" />
<rect x="719.5" y="454" width="24.5" height="12.5" rx="1" fill="#4a8cdc" />
<text x="732" y="465" font-size="12" fill="#2a2a2a" text-anchor="middle" font-weight="bold" font-style="normal" >3</text>
<path d="M699 520 L699 497 Q699 470.5 724 470.5 L742 470.5 Q764 470.5 764 497 L764 514 Q764 525.5 752 525.5 L710 525.5 Q699 525.5 699 516 Z" fill="#dedede" stroke="#4a88dc" stroke-width="2.2" />
<path d="M703.5 516 L703.5 499 Q703.5 475 725 475 L741 475 Q759.5 475 759.5 499 L759.5 513 Q759.5 521 751 521 L712 521 Q703.5 521 703.5 514 Z" fill="#d3d3d3" />
<circle cx="732" cy="494.5" r="17.3" fill="#c9a55a" />
<circle cx="732" cy="494.5" r="17.3" fill="none" stroke="#b08c44" stroke-width="0.8" />
<circle cx="732" cy="494.5" r="15" fill="#d6b46c" />
<circle cx="732" cy="494.5" r="11.3" fill="#e8e4dc" />
<circle cx="732" cy="494.5" r="10.3" fill="#2a2a2a" />
<circle cx="732" cy="494.5" r="8.4" fill="#d8d8d8" />
<circle cx="732" cy="494.5" r="7.2" fill="#3a3a3a" />
<circle cx="732" cy="494.5" r="5.4" fill="#f4f4f4" />
<circle cx="732" cy="494.5" r="1.5" fill="#c02818" />
<circle cx="709" cy="503.5" r="4.6" fill="#3c3c3c" />
<circle cx="709" cy="503.5" r="2.6" fill="#8a8a8a" />
<circle cx="709" cy="503.5" r="1.3" fill="#2a2a2a" />
<rect x="709.7" y="510.6" width="4.1" height="6" rx="0.6" fill="#f0cc48" />
<rect x="709.7" y="510.6" width="4.1" height="1.4" rx="0.5" fill="#c89c28" />
<rect x="709.7" y="515.2" width="4.1" height="1.4" rx="0.5" fill="#b48a20" />
<rect x="714.6500000000001" y="510.6" width="4.1" height="6" rx="0.6" fill="#f0cc48" />
<rect x="714.6500000000001" y="510.6" width="4.1" height="1.4" rx="0.5" fill="#c89c28" />
<rect x="714.6500000000001" y="515.2" width="4.1" height="1.4" rx="0.5" fill="#b48a20" />
<rect x="719.6" y="510.6" width="4.1" height="6" rx="0.6" fill="#f0cc48" />
<rect x="719.6" y="510.6" width="4.1" height="1.4" rx="0.5" fill="#c89c28" />
<rect x="719.6" y="515.2" width="4.1" height="1.4" rx="0.5" fill="#b48a20" />
<rect x="724.5500000000001" y="510.6" width="4.1" height="6" rx="0.6" fill="#f0cc48" />
<rect x="724.5500000000001" y="510.6" width="4.1" height="1.4" rx="0.5" fill="#c89c28" />
<rect x="724.5500000000001" y="515.2" width="4.1" height="1.4" rx="0.5" fill="#b48a20" />
<rect x="729.5" y="510.6" width="4.1" height="6" rx="0.6" fill="#f0cc48" />
<rect x="729.5" y="510.6" width="4.1" height="1.4" rx="0.5" fill="#c89c28" />
<rect x="729.5" y="515.2" width="4.1" height="1.4" rx="0.5" fill="#b48a20" />
<rect x="734.45" y="510.6" width="4.1" height="6" rx="0.6" fill="#f0cc48" />
<rect x="734.45" y="510.6" width="4.1" height="1.4" rx="0.5" fill="#c89c28" />
<rect x="734.45" y="515.2" width="4.1" height="1.4" rx="0.5" fill="#b48a20" />
<rect x="739.4000000000001" y="510.6" width="4.1" height="6" rx="0.6" fill="#f0cc48" />
<rect x="739.4000000000001" y="510.6" width="4.1" height="1.4" rx="0.5" fill="#c89c28" />
<rect x="739.4000000000001" y="515.2" width="4.1" height="1.4" rx="0.5" fill="#b48a20" />
<rect x="744.35" y="510.6" width="4.1" height="6" rx="0.6" fill="#f0cc48" />
<rect x="744.35" y="510.6" width="4.1" height="1.4" rx="0.5" fill="#c89c28" />
<rect x="744.35" y="515.2" width="4.1" height="1.4" rx="0.5" fill="#b48a20" />
<rect x="749.3000000000001" y="510.6" width="4.1" height="6" rx="0.6" fill="#f0cc48" />
<rect x="749.3000000000001" y="510.6" width="4.1" height="1.4" rx="0.5" fill="#c89c28" />
<rect x="749.3000000000001" y="515.2" width="4.1" height="1.4" rx="0.5" fill="#b48a20" />
<rect x="795.5" y="454" width="24.5" height="12.5" rx="1" fill="#f06464" />
<text x="808" y="465" font-size="12" fill="#2a2a2a" text-anchor="middle" font-weight="bold" font-style="normal" >4</text>
<path d="M775 520 L775 497 Q775 470.5 800 470.5 L818 470.5 Q840 470.5 840 497 L840 514 Q840 525.5 828 525.5 L786 525.5 Q775 525.5 775 516 Z" fill="#dedede" stroke="#f07070" stroke-width="2.2" />
<path d="M779.5 516 L779.5 499 Q779.5 475 801 475 L817 475 Q835.5 475 835.5 499 L835.5 513 Q835.5 521 827 521 L788 521 Q779.5 521 779.5 514 Z" fill="#d3d3d3" />
<circle cx="808" cy="494.5" r="17.3" fill="#c9a55a" />
<circle cx="808" cy="494.5" r="17.3" fill="none" stroke="#b08c44" stroke-width="0.8" />
<circle cx="808" cy="494.5" r="15" fill="#d6b46c" />
<circle cx="808" cy="494.5" r="11.3" fill="#e8e4dc" />
<circle cx="808" cy="494.5" r="10.3" fill="#2a2a2a" />
<circle cx="808" cy="494.5" r="8.4" fill="#d8d8d8" />
<circle cx="808" cy="494.5" r="7.2" fill="#3a3a3a" />
<circle cx="808" cy="494.5" r="5.4" fill="#f4f4f4" />
<circle cx="808" cy="494.5" r="1.5" fill="#c02818" />
<circle cx="785" cy="503.5" r="4.6" fill="#3c3c3c" />
<circle cx="785" cy="503.5" r="2.6" fill="#8a8a8a" />
<circle cx="785" cy="503.5" r="1.3" fill="#2a2a2a" />
<rect x="785.7" y="510.6" width="4.1" height="6" rx="0.6" fill="#f0cc48" />
<rect x="785.7" y="510.6" width="4.1" height="1.4" rx="0.5" fill="#c89c28" />
<rect x="785.7" y="515.2" width="4.1" height="1.4" rx="0.5" fill="#b48a20" />
<rect x="790.6500000000001" y="510.6" width="4.1" height="6" rx="0.6" fill="#f0cc48" />
<rect x="790.6500000000001" y="510.6" width="4.1" height="1.4" rx="0.5" fill="#c89c28" />
<rect x="790.6500000000001" y="515.2" width="4.1" height="1.4" rx="0.5" fill="#b48a20" />
<rect x="795.6" y="510.6" width="4.1" height="6" rx="0.6" fill="#f0cc48" />
<rect x="795.6" y="510.6" width="4.1" height="1.4" rx="0.5" fill="#c89c28" />
<rect x="795.6" y="515.2" width="4.1" height="1.4" rx="0.5" fill="#b48a20" />
<rect x="800.5500000000001" y="510.6" width="4.1" height="6" rx="0.6" fill="#f0cc48" />
<rect x="800.5500000000001" y="510.6" width="4.1" height="1.4" rx="0.5" fill="#c89c28" />
<rect x="800.5500000000001" y="515.2" width="4.1" height="1.4" rx="0.5" fill="#b48a20" />
<rect x="805.5" y="510.6" width="4.1" height="6" rx="0.6" fill="#f0cc48" />
<rect x="805.5" y="510.6" width="4.1" height="1.4" rx="0.5" fill="#c89c28" />
<rect x="805.5" y="515.2" width="4.1" height="1.4" rx="0.5" fill="#b48a20" />
<rect x="810.45" y="510.6" width="4.1" height="6" rx="0.6" fill="#f0cc48" />
<rect x="810.45" y="510.6" width="4.1" height="1.4" rx="0.5" fill="#c89c28" />
<rect x="810.45" y="515.2" width="4.1" height="1.4" rx="0.5" fill="#b48a20" />
<rect x="815.4000000000001" y="510.6" width="4.1" height="6" rx="0.6" fill="#f0cc48" />
<rect x="815.4000000000001" y="510.6" width="4.1" height="1.4" rx="0.5" fill="#c89c28" />
<rect x="815.4000000000001" y="515.2" width="4.1" height="1.4" rx="0.5" fill="#b48a20" />
<rect x="820.35" y="510.6" width="4.1" height="6" rx="0.6" fill="#f0cc48" />
<rect x="820.35" y="510.6" width="4.1" height="1.4" rx="0.5" fill="#c89c28" />
<rect x="820.35" y="515.2" width="4.1" height="1.4" rx="0.5" fill="#b48a20" />
<rect x="825.3000000000001" y="510.6" width="4.1" height="6" rx="0.6" fill="#f0cc48" />
<rect x="825.3000000000001" y="510.6" width="4.1" height="1.4" rx="0.5" fill="#c89c28" />
<rect x="825.3000000000001" y="515.2" width="4.1" height="1.4" rx="0.5" fill="#b48a20" />
<text x="548.5" y="477.5" font-size="8" fill="#333" text-anchor="middle" font-weight="normal" font-style="normal" >×</text>
<text x="626" y="477" font-size="7" fill="#333" text-anchor="middle" font-weight="normal" font-style="normal" >▾</text>
<text x="693" y="457" font-size="4.6" fill="#222" text-anchor="middle" font-weight="bold" font-style="normal" >1MΩ ≈ 14pF</text>
<text x="693" y="462.5" font-size="4.6" fill="#222" text-anchor="middle" font-weight="bold" font-style="normal" >300 V RMS</text>
<text x="693" y="468.8" font-size="5.2" fill="#222" text-anchor="middle" font-weight="bold" font-style="normal" >CAT I</text>
<path d="M689.5 482 L696.5 482 L693 475.5 Z" fill="none" stroke="#444" stroke-width="0.8" />
<text x="693" y="481.3" font-size="4" fill="#444" text-anchor="middle" font-weight="bold" font-style="normal" >!</text>
<text x="694" y="528.6" font-size="4" fill="#444" text-anchor="middle" font-weight="normal" font-style="normal" >50 Ω ≤ 5 Vrms</text>
</svg>
</body></html>
